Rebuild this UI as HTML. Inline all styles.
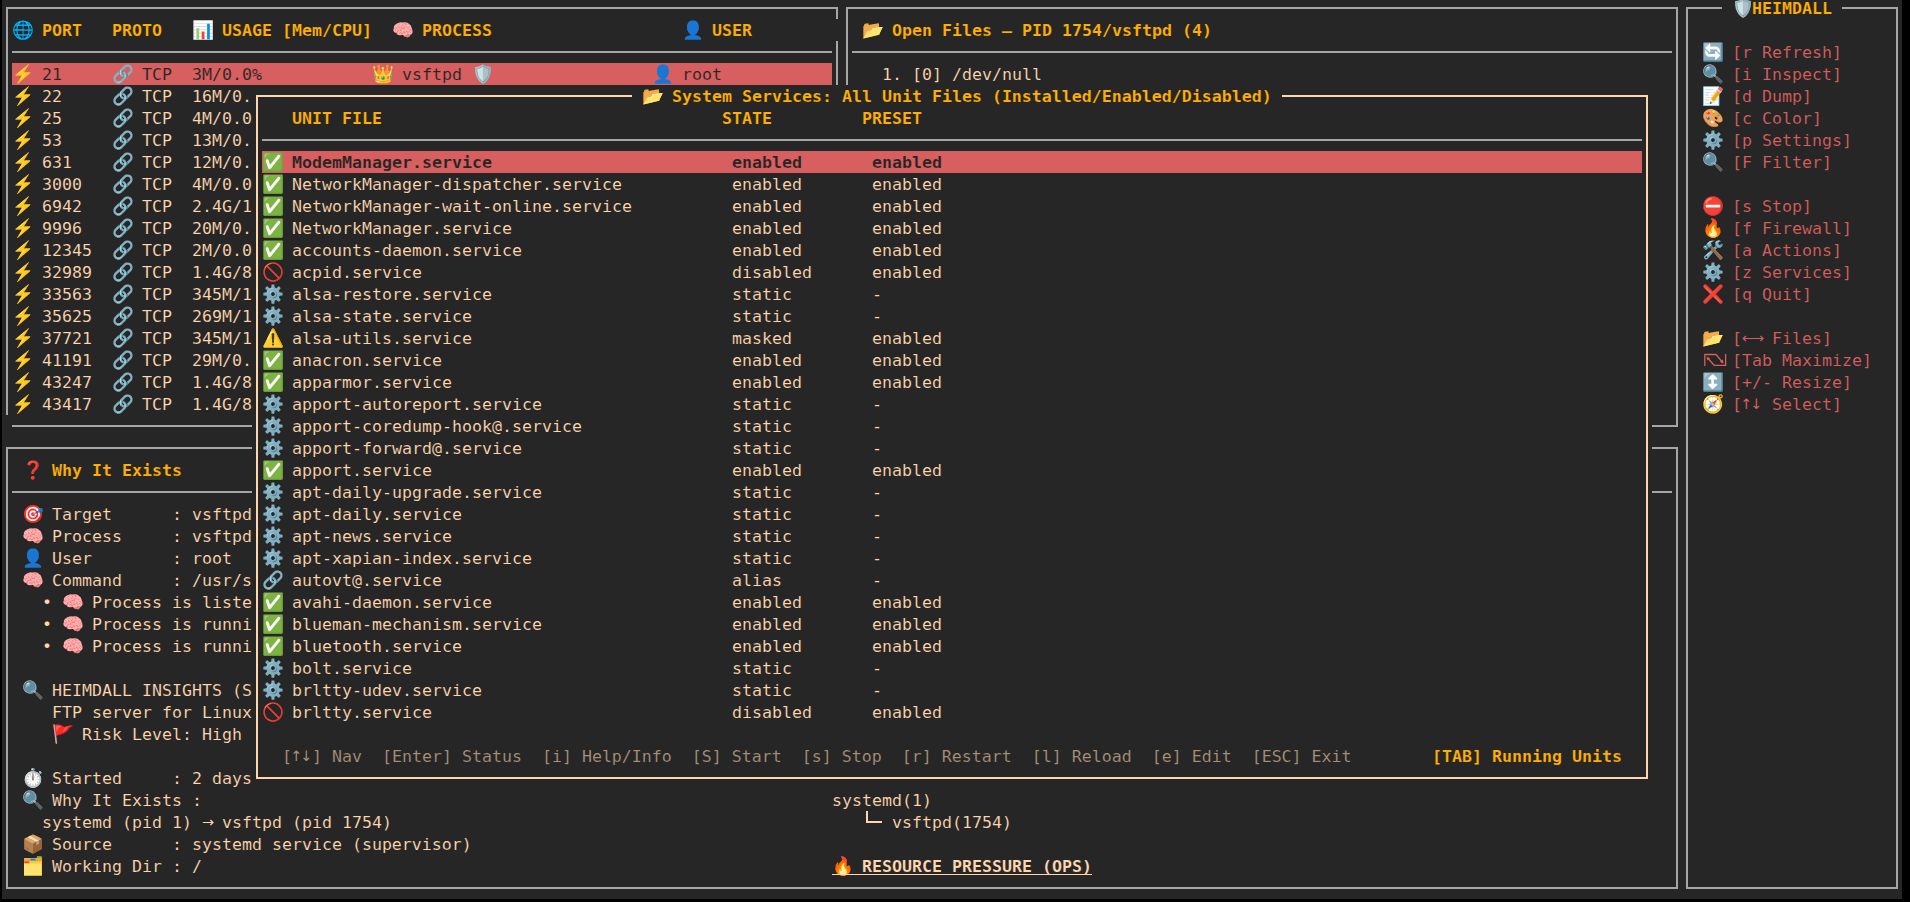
<!DOCTYPE html>
<html lang="en"><head><meta charset="utf-8"><title>HEIMDALL — System Services</title>
<style>
html,body{margin:0;padding:0;background:#000;}
body{width:1910px;height:902px;overflow:hidden;position:relative;}
#term{position:absolute;left:2px;top:0;width:1900px;height:899px;background:#262626;overflow:hidden;}
#g{position:absolute;left:-2px;top:0;width:1910px;height:902px;}
section{position:absolute;left:0;top:0;width:0;height:0;display:block;}
#g i{position:absolute;display:block;}
.t{position:absolute;white-space:pre;font-family:"DejaVu Sans Mono","Liberation Mono",monospace;font-size:16.6px;line-height:22px;height:22px;margin-top:1px;font-weight:400;font-style:normal;font-kerning:none;font-variant-ligatures:none;letter-spacing:0.006px;-webkit-text-stroke:0.12px #262626;}
.a{font-family:"DejaVu Sans","Liberation Sans",sans-serif;font-size:14.4px;letter-spacing:-2.067px;position:relative;top:-0.8px;-webkit-text-stroke-width:0;}
.v{left:-2px;}
.b{font-weight:700;}
.s{-webkit-text-stroke-color:#d75f5f;}
.ic{position:absolute;display:block;overflow:visible;}
</style></head>
<body><div id="term"><div id="g">
<section id="ports" aria-label="Listening ports">
<i style="left:6px;top:7px;width:832px;height:2px;background:#a6a6a6"></i>
<i style="left:6px;top:7px;width:2px;height:408px;background:#a6a6a6"></i>
<i style="left:836px;top:7px;width:2px;height:12px;background:#a6a6a6"></i>
<i style="left:836px;top:41px;width:2px;height:44px;background:#a6a6a6"></i>
<i style="left:12px;top:51px;width:820px;height:2px;background:#a6a6a6"></i>
<i style="left:12px;top:425px;width:240px;height:2px;background:#a6a6a6"></i>
<i style="left:12px;top:63px;width:820px;height:22px;background:#d75f5f"></i>
<svg class="ic" style="left:12px;top:19px" width="20" height="22" viewBox="0 0 20 22"><g transform="translate(0.05075 0.77075) scale(0.1615)"><path fill="#01b3f7" fill-rule="evenodd" d="M62 5l-1 1-10 1-11 4-10 6-8 7-8 11-4 9-3 15 0 10 3 14 5 11 13 16 10 7 13 5 10 1 1 1 12 0 1-1 10-1 16-7 14-13 4-6 6-14 2-8 1-14-1-1-1-11-6-15-4-6-11-11-11-6-9-3-11-1-1-1zM108 99l-9 8-2-1 5-8 5 0zM71 115l0-16 1-1 19 0 1 1-1 3-10 10-8 4zM43 99l1-1 20 0 1 1 0 16-2 1-9-5zM28 99l1-1 5 0 5 8-2 1zM120 68l1 1-1 7-4 11-2 2-7 0-1-4 2-5 1-11 1-1zM71 69l1-1 28 0 1 1 0 6-3 13-1 1-25 0-1-1zM34 69l1-1 29 0 1 1 0 19-1 1-25 0-3-6zM15 68l11 0 1 1 0 6 3 11-1 3-8 0-2-2-5-16zM107 39l7 0 2 2 4 10 1 5-1 4-10 0-1-1-1-11-2-6zM71 40l1-1 25 0 3 8 1 12-1 1-25 0-4-2zM37 40l1-1 26 0 1 1 0 18-1 1-29 0-1-1 0-7zM21 39l7 0 1 1-2 7-1 11-1 1-10 0-1-1 1-7 3-8zM98 23l2-1 8 7-1 1-5 0zM37 21l1 2-3 3-1 3-5 1-1-1zM71 14l2-1 6 3 13 13-1 1-19 0-1-1zM65 14l0 15-1 1-20 0-1-1 13-13 6-3z"/><path fill="#188aff" fill-rule="evenodd" d="M72 96l0 2 20 0 1-2zM42 96l2 2 20 0 0-2zM26 96l2 2 5 0 0-2zM121 92l-8 11-10 9-11 6-14 4-20 0-17-5-14-9-10-11 11 13 14 9 13 4 19 1 17-4 13-7 11-11zM110 67l0 1 10 0 0-1zM72 67l0 1 28 0 0-1zM35 67l0 1 29 0 0-1zM15 67l0 1 11 0 0-1zM72 37l0 2 24 0 0-1-7 0-1-1zM38 39l26 0 0-2-25 0zM21 39l7 0 1-2-7 0zM72 11l0 2 7 3 12 11-10-11zM64 11l-9 4-11 12 12-11 8-3z"/></g></svg>
<span class="t b" style="left:42px;top:19px;color:#ffaf00">PORT</span>
<span class="t b" style="left:112px;top:19px;color:#ffaf00">PROTO</span>
<svg class="ic" style="left:192px;top:19px" width="20" height="22" viewBox="0 0 20 22"><g transform="translate(0.05075 0.77075) scale(0.1615)"><path fill="#ffffff" fill-rule="evenodd" d="M9 4l0 120 119 0 0-120z"/><path fill="#b0bec5" fill-rule="evenodd" d="M77 101l0 2 17 0 0-2zM43 101l0 2 17 0 0-2zM77 81l0 2 17 0 0-2zM43 81l0 2 17 0 0-2zM43 62l0 2 51 0 0-2zM9 4l0 120 119 0 0-120zM13 7l1-1 111 0 1 1 0 15-1 1-16 0 0 2 16 0 1 1 0 16-1 1-15-1 0 3 15 0 1 1 0 15-1 1-15-1 0 4 3-1 12 0 1 1 0 15-1 1-15 0 0 3 3-1 12 0 1 1 0 16-1 1-15-1 0 3 15 0 1 1 0 15-1 1-46 0-1-1-3 1-13 0-1-1-3 1-14 0-1-1-29 1-1-1 0-15 1-1 13 0 0-2-13 0-1-1 0-16 1-1 13 0 0-2-13 0-1-1 0-15 1-1 13 0 0-2-13 0-1-1 0-15 1-1 80 0 0-2-80 0-1-1 0-16 1-1 81 0 0-2-81 0-1-1z"/><path fill="#0191ea" fill-rule="evenodd" d="M94 23l-1 1 0 97 18 0 0-97-1-1z"/><path fill="#9ccc65" fill-rule="evenodd" d="M26 53l0 67 2 1 14 0 1-1 0-16 1-1-1-3 0-16 1-1-1-3 0-15 1-1-1-11z"/><path fill="#f44336" fill-rule="evenodd" d="M60 72l0 48 17 0 0-48z"/><path fill="#ebeeed" fill-rule="evenodd" d="M77 102l0 2 17 0 0-2zM43 102l0 2 17 0 0-2zM77 80l0 2 17 0 0-2zM43 80l0 2 17 0 0-2zM59 72l0 2 3-1 14 0 0-2-15 0zM125 64l0 15-1 1-13 0 0 2 13 0 1 1 0 18-1 1-13 0 0 2 13 0 1 1 0 15 2 0 0-17-1-1 1-1 0-18-1-1 1-1 0-17zM25 64l0 15-1 1-12 0 0 2 12 0 1 1 0 18-1 1-12 0 0 2 12 0 1 1 0 15 2 0 0-17-1-1 1-1 0-18-1-1 1-1 0-17zM25 54l0 8 2 0 0-8zM12 44l0 2 82 0 0-2zM12 22l0 2 84 0 0-2zM125 6l0 15-1 1-15 0 0 2 15 0 1 1 0 18-1 1-13 0 0 2 13 0 1 1 0 15 2 0 0-17-1-1 1-1 0-18-1-1 1-1 0-17z"/><path fill="#d2e0e8" fill-rule="evenodd" d="M77 119l0 2 17 0 0-2zM43 119l0 2 17 0 0-2zM12 119l0 2 14 0 0-2zM43 61l0 4 51 0 0-4zM12 61l0 4 14 0 0-4zM95 22l0 2 14 0 1 1 0 37 1 1-1 1 0 56 1 1 15 0 0-2-13 0-1-1 0-52 1-1 13 0 0-4-13 0-1-1 0-35-2-1 0-2zM12 5l0 2 114 0 0-2z"/><path fill="#c4ced4" fill-rule="evenodd" d="M111 100l0 2 16 0 0-2zM77 100l0 2 17 0 0-2zM43 100l0 2 17 0 0-2zM12 100l0 2 15 0 0-2zM111 82l0 2 16 0 0-2zM77 82l0 2 17 0 0-2zM43 82l0 2 17 0 0-2zM12 82l0 2 14 0 0-2zM111 42l0 2 16 0 0-2zM12 42l0 2 82 0 0-2zM110 24l0 2 17 0 0-2zM12 24l0 2 82 0 0-2z"/><path fill="#f19b95" fill-rule="evenodd" d="M59 73l0 47 1 1 17 0 1-1 0-47-2 0 0 45-1 1-13 0-1-1 0-45z"/><path fill="#b2d58d" fill-rule="evenodd" d="M27 52l0 2 14 0 1 1 0 66 2 0 0-68-2-1z"/></g></svg>
<span class="t b" style="left:222px;top:19px;color:#ffaf00">USAGE [Mem/CPU]</span>
<svg class="ic" style="left:392px;top:19px" width="20" height="22" viewBox="0 0 20 22"><g transform="translate(0.05075 0.77075) scale(0.1615)"><path fill="#ffb1b1" fill-rule="evenodd" d="M13 39l-2 8 1 5-4 7 1 10 2 4 6 6 5 3 7 1 3 6 6 5 8 2 22-1 6 6 7 4 11 3 6 0 6-2 8-8 2-5 2-2 4-1 6-8 1-4-1-16-4-8 0-3-6-15-3-4-5-2-6-7-8-4-14-4-6 0-5 2-10 0-1-1-11 1-14 5-12 8z"/><path fill="#ed7170" fill-rule="evenodd" d="M73 98l0 2 4 3 10 4 4 0-7-3-6-5zM81 97l12 7 6 2 5 0-8-3-12-7zM100 93l2 2 10 2 2-3-5 1-4-2zM89 95l9 5 9 3 3-3-5 0-6-2-7-5 1-1zM117 79l-6-6-7 0-3 2-4 0-3-3 0-12-3-1 1 8-6 7-3 1-5-1-3-3-1-4-3-1-1 1 2 3-1 5-5 5-8 1-11-6 0 3 2 3-3 3-1 4 7-5 4 0 4 3 0 6-4 3 10 0-2-3 0-4 2-4 7-5 2 0 2 2 1 4 3 4 2 0-3-6 0-3 2-2 8-3 4 1 3 3-3 6 3 0 6-8 5-2 5 2 2 6 2 0zM121 48l-1 5-5 7-3 2-9-1 0 2 4 2 6-1 5 5 5 0 0-2-4 0-2-2 0-3 5-7zM24 38l-2 0-1 2 1 4 5 6 0 3-3 3-6 0-5-5-1-5-1 1 3 9 5 5 1 10 2-1-1-9 8-6 0-6-6-8zM35 37l0 2 3 2 3 6-2 7 3-1 2-5 7-1 0-2-7 0-7-8zM101 31l1 1 8 0 5 4-1-3-4-3-3-1zM110 41l-3-1 0 3-3 3-4 0-9-5-7 0-4 2-6 7-6 1-5-3-1-10 4-5 4 0 3 3-1 6 3-2 0-5-4-4-6-1-2-5-5-4 0 2 3 3 1 3 0 5-2 5-4 5 3 1 2 4 0 3-4 2-10 9-13-1 0 6-7 11-7 0-6-3 8 6 7 1 3 6 3 3 6 3-6-7-2-7 1-5 6-9 3-2 5 0 10 7 1-3-3-4 0-4 2-2 6-3 8 0 5 4 2 0 1-2-2-2 0-5 6-6 9 0 6 5 2 5 2-2-1-3 8-5zM72 21l0 2 6 1 5 6-1 4 3-2 10 1-1-2-6-1-3-3 0-4 5-3 8 1-4-2-8 0-4 3zM52 35l-1-3-7-6 0-5 3-4-5 3-1 3 1 2-2 2-7 1 0 2 4-1 9 1 4 5z"/><path fill="#b75656" fill-rule="evenodd" d="M69 96l3 3 1-2 5 1 6 5 7 3 1 2 10-1-9-2-13-8-10 0zM85 96l19 9 2-1 0-1-8-2-10-6zM93 93l6 4 6 2 6 0 1-1-10-2-3-3 1-1 5 0 4 2 5-1-4 0-6-3-6 0z"/></g></svg>
<span class="t b" style="left:422px;top:19px;color:#ffaf00">PROCESS</span>
<svg class="ic" style="left:682px;top:19px" width="20" height="22" viewBox="0 0 20 22"><g transform="translate(0.05075 0.77075) scale(0.1615)"><path fill="#1976d2" fill-rule="evenodd" d="M46 9l-8 8-5 10-2 9 0 24 2 7 5 7 3 7 8 8 10 5-1 1-16 2-9 3-9 5-6 7-1 11 101 0 0-8-4-7-5-4-13-6-20-4 10-5 7-7 10-18 1-5-1-4 1-1 0-18-5-16-10-11-9-4-20-1-8 2z"/></g></svg>
<span class="t b" style="left:712px;top:19px;color:#ffaf00">USER</span>
<svg class="ic" style="left:12px;top:63px" width="20" height="22" viewBox="0 0 20 22"><g transform="translate(0.05075 0.77075) scale(0.1615)"><path fill="#ffc927" fill-rule="evenodd" d="M103 3l-2 0-80 67 1 2 38 0 1 1-30 50 1 2 2 0 25-21 53-47 1-2-2-2-34 0-1 1-2-1 2-5 27-42z"/><path fill="#feb805" fill-rule="evenodd" d="M21 71l1 1 39 0 1-4-39 0zM113 55l-3-2-2 3-72 65-5 3 3 1 1-2 11-8 8-8 5-3 44-38zM103 3l-1 0-13 20-20 26-1 3 6 1 2-5 9-13 0-2 3-3 2-5 13-19z"/><path fill="#ffe363" fill-rule="evenodd" d="M71 68l-2 0-2 2-22 35 2 0 24-31 1-2zM79 24l-2 0-35 30-9 9 1 2 4 0 3-2 35-34z"/></g></svg>
<span class="t s" style="left:42px;top:63px;color:#262626">21</span>
<svg class="ic" style="left:112px;top:63px" width="20" height="22" viewBox="0 0 20 22"><g transform="translate(0.05075 0.77075) scale(0.1615)"><path fill="#84b0c1" fill-rule="evenodd" d="M114 9l-12-5-13 0-10 4-27 26-6 10-8 4-23 23-6 11-1 16 5 12 8 8 12 5 13 0 10-4 27-26 6-10 8-4 23-23 6-11 1-16-5-12zM46 62l7 13 7 6 8 3 1 2-20 20-7 3-9-1-8-7-3-7 0-5 3-7zM60 57l2-1 5 2 6 6 2 6-2 1-5-2-6-6zM102 19l8 7 3 7 0 5-3 7-21 20-7-13-7-6-8-3-1-2 20-20 7-3z"/><path fill="#a6e0ed" fill-rule="evenodd" d="M55 106l-3 3-6 3-16-1 0 2 2 2 6 2 8-1 8-5zM81 67l-3 1 0 9-2 4 2 3 3-1 3-5 0-7zM57 38l-2 0-4 4-3 8 1 12 1 3 4 4 1-1-1-17 3-9z"/><path fill="#347b8c" fill-rule="evenodd" d="M75 71l-1 0-1 4-4 5-3 2-3 0 7 3 4-6zM94 61l-5 5 1 2 0 10-2 5 6-2 3-5 0-10zM46 44l-4 4 0 8 3 4zM76 47l-10-5-5 7 0 7 4 1 1-5 5-5z"/></g></svg>
<span class="t s" style="left:142px;top:63px;color:#262626">TCP</span>
<span class="t s" style="left:192px;top:63px;color:#262626">3M/0.0%</span>
<svg class="ic" style="left:12px;top:85px" width="20" height="22" viewBox="0 0 20 22"><g transform="translate(0.05075 0.77075) scale(0.1615)"><path fill="#ffc927" fill-rule="evenodd" d="M103 3l-2 0-80 67 1 2 38 0 1 1-30 50 1 2 2 0 25-21 53-47 1-2-2-2-34 0-1 1-2-1 2-5 27-42z"/><path fill="#feb805" fill-rule="evenodd" d="M21 71l1 1 39 0 1-4-39 0zM113 55l-3-2-2 3-72 65-5 3 3 1 1-2 11-8 8-8 5-3 44-38zM103 3l-1 0-13 20-20 26-1 3 6 1 2-5 9-13 0-2 3-3 2-5 13-19z"/><path fill="#ffe363" fill-rule="evenodd" d="M71 68l-2 0-2 2-22 35 2 0 24-31 1-2zM79 24l-2 0-35 30-9 9 1 2 4 0 3-2 35-34z"/></g></svg>
<span class="t" style="left:42px;top:85px;color:#ffd7af">22</span>
<svg class="ic" style="left:112px;top:85px" width="20" height="22" viewBox="0 0 20 22"><g transform="translate(0.05075 0.77075) scale(0.1615)"><path fill="#84b0c1" fill-rule="evenodd" d="M114 9l-12-5-13 0-10 4-27 26-6 10-8 4-23 23-6 11-1 16 5 12 8 8 12 5 13 0 10-4 27-26 6-10 8-4 23-23 6-11 1-16-5-12zM46 62l7 13 7 6 8 3 1 2-20 20-7 3-9-1-8-7-3-7 0-5 3-7zM60 57l2-1 5 2 6 6 2 6-2 1-5-2-6-6zM102 19l8 7 3 7 0 5-3 7-21 20-7-13-7-6-8-3-1-2 20-20 7-3z"/><path fill="#a6e0ed" fill-rule="evenodd" d="M55 106l-3 3-6 3-16-1 0 2 2 2 6 2 8-1 8-5zM81 67l-3 1 0 9-2 4 2 3 3-1 3-5 0-7zM57 38l-2 0-4 4-3 8 1 12 1 3 4 4 1-1-1-17 3-9z"/><path fill="#347b8c" fill-rule="evenodd" d="M75 71l-1 0-1 4-4 5-3 2-3 0 7 3 4-6zM94 61l-5 5 1 2 0 10-2 5 6-2 3-5 0-10zM46 44l-4 4 0 8 3 4zM76 47l-10-5-5 7 0 7 4 1 1-5 5-5z"/></g></svg>
<span class="t" style="left:142px;top:85px;color:#ffd7af">TCP</span>
<span class="t" style="left:192px;top:85px;color:#ffd7af">16M/0.</span>
<svg class="ic" style="left:12px;top:107px" width="20" height="22" viewBox="0 0 20 22"><g transform="translate(0.05075 0.77075) scale(0.1615)"><path fill="#ffc927" fill-rule="evenodd" d="M103 3l-2 0-80 67 1 2 38 0 1 1-30 50 1 2 2 0 25-21 53-47 1-2-2-2-34 0-1 1-2-1 2-5 27-42z"/><path fill="#feb805" fill-rule="evenodd" d="M21 71l1 1 39 0 1-4-39 0zM113 55l-3-2-2 3-72 65-5 3 3 1 1-2 11-8 8-8 5-3 44-38zM103 3l-1 0-13 20-20 26-1 3 6 1 2-5 9-13 0-2 3-3 2-5 13-19z"/><path fill="#ffe363" fill-rule="evenodd" d="M71 68l-2 0-2 2-22 35 2 0 24-31 1-2zM79 24l-2 0-35 30-9 9 1 2 4 0 3-2 35-34z"/></g></svg>
<span class="t" style="left:42px;top:107px;color:#ffd7af">25</span>
<svg class="ic" style="left:112px;top:107px" width="20" height="22" viewBox="0 0 20 22"><g transform="translate(0.05075 0.77075) scale(0.1615)"><path fill="#84b0c1" fill-rule="evenodd" d="M114 9l-12-5-13 0-10 4-27 26-6 10-8 4-23 23-6 11-1 16 5 12 8 8 12 5 13 0 10-4 27-26 6-10 8-4 23-23 6-11 1-16-5-12zM46 62l7 13 7 6 8 3 1 2-20 20-7 3-9-1-8-7-3-7 0-5 3-7zM60 57l2-1 5 2 6 6 2 6-2 1-5-2-6-6zM102 19l8 7 3 7 0 5-3 7-21 20-7-13-7-6-8-3-1-2 20-20 7-3z"/><path fill="#a6e0ed" fill-rule="evenodd" d="M55 106l-3 3-6 3-16-1 0 2 2 2 6 2 8-1 8-5zM81 67l-3 1 0 9-2 4 2 3 3-1 3-5 0-7zM57 38l-2 0-4 4-3 8 1 12 1 3 4 4 1-1-1-17 3-9z"/><path fill="#347b8c" fill-rule="evenodd" d="M75 71l-1 0-1 4-4 5-3 2-3 0 7 3 4-6zM94 61l-5 5 1 2 0 10-2 5 6-2 3-5 0-10zM46 44l-4 4 0 8 3 4zM76 47l-10-5-5 7 0 7 4 1 1-5 5-5z"/></g></svg>
<span class="t" style="left:142px;top:107px;color:#ffd7af">TCP</span>
<span class="t" style="left:192px;top:107px;color:#ffd7af">4M/0.0</span>
<svg class="ic" style="left:12px;top:129px" width="20" height="22" viewBox="0 0 20 22"><g transform="translate(0.05075 0.77075) scale(0.1615)"><path fill="#ffc927" fill-rule="evenodd" d="M103 3l-2 0-80 67 1 2 38 0 1 1-30 50 1 2 2 0 25-21 53-47 1-2-2-2-34 0-1 1-2-1 2-5 27-42z"/><path fill="#feb805" fill-rule="evenodd" d="M21 71l1 1 39 0 1-4-39 0zM113 55l-3-2-2 3-72 65-5 3 3 1 1-2 11-8 8-8 5-3 44-38zM103 3l-1 0-13 20-20 26-1 3 6 1 2-5 9-13 0-2 3-3 2-5 13-19z"/><path fill="#ffe363" fill-rule="evenodd" d="M71 68l-2 0-2 2-22 35 2 0 24-31 1-2zM79 24l-2 0-35 30-9 9 1 2 4 0 3-2 35-34z"/></g></svg>
<span class="t" style="left:42px;top:129px;color:#ffd7af">53</span>
<svg class="ic" style="left:112px;top:129px" width="20" height="22" viewBox="0 0 20 22"><g transform="translate(0.05075 0.77075) scale(0.1615)"><path fill="#84b0c1" fill-rule="evenodd" d="M114 9l-12-5-13 0-10 4-27 26-6 10-8 4-23 23-6 11-1 16 5 12 8 8 12 5 13 0 10-4 27-26 6-10 8-4 23-23 6-11 1-16-5-12zM46 62l7 13 7 6 8 3 1 2-20 20-7 3-9-1-8-7-3-7 0-5 3-7zM60 57l2-1 5 2 6 6 2 6-2 1-5-2-6-6zM102 19l8 7 3 7 0 5-3 7-21 20-7-13-7-6-8-3-1-2 20-20 7-3z"/><path fill="#a6e0ed" fill-rule="evenodd" d="M55 106l-3 3-6 3-16-1 0 2 2 2 6 2 8-1 8-5zM81 67l-3 1 0 9-2 4 2 3 3-1 3-5 0-7zM57 38l-2 0-4 4-3 8 1 12 1 3 4 4 1-1-1-17 3-9z"/><path fill="#347b8c" fill-rule="evenodd" d="M75 71l-1 0-1 4-4 5-3 2-3 0 7 3 4-6zM94 61l-5 5 1 2 0 10-2 5 6-2 3-5 0-10zM46 44l-4 4 0 8 3 4zM76 47l-10-5-5 7 0 7 4 1 1-5 5-5z"/></g></svg>
<span class="t" style="left:142px;top:129px;color:#ffd7af">TCP</span>
<span class="t" style="left:192px;top:129px;color:#ffd7af">13M/0.</span>
<svg class="ic" style="left:12px;top:151px" width="20" height="22" viewBox="0 0 20 22"><g transform="translate(0.05075 0.77075) scale(0.1615)"><path fill="#ffc927" fill-rule="evenodd" d="M103 3l-2 0-80 67 1 2 38 0 1 1-30 50 1 2 2 0 25-21 53-47 1-2-2-2-34 0-1 1-2-1 2-5 27-42z"/><path fill="#feb805" fill-rule="evenodd" d="M21 71l1 1 39 0 1-4-39 0zM113 55l-3-2-2 3-72 65-5 3 3 1 1-2 11-8 8-8 5-3 44-38zM103 3l-1 0-13 20-20 26-1 3 6 1 2-5 9-13 0-2 3-3 2-5 13-19z"/><path fill="#ffe363" fill-rule="evenodd" d="M71 68l-2 0-2 2-22 35 2 0 24-31 1-2zM79 24l-2 0-35 30-9 9 1 2 4 0 3-2 35-34z"/></g></svg>
<span class="t" style="left:42px;top:151px;color:#ffd7af">631</span>
<svg class="ic" style="left:112px;top:151px" width="20" height="22" viewBox="0 0 20 22"><g transform="translate(0.05075 0.77075) scale(0.1615)"><path fill="#84b0c1" fill-rule="evenodd" d="M114 9l-12-5-13 0-10 4-27 26-6 10-8 4-23 23-6 11-1 16 5 12 8 8 12 5 13 0 10-4 27-26 6-10 8-4 23-23 6-11 1-16-5-12zM46 62l7 13 7 6 8 3 1 2-20 20-7 3-9-1-8-7-3-7 0-5 3-7zM60 57l2-1 5 2 6 6 2 6-2 1-5-2-6-6zM102 19l8 7 3 7 0 5-3 7-21 20-7-13-7-6-8-3-1-2 20-20 7-3z"/><path fill="#a6e0ed" fill-rule="evenodd" d="M55 106l-3 3-6 3-16-1 0 2 2 2 6 2 8-1 8-5zM81 67l-3 1 0 9-2 4 2 3 3-1 3-5 0-7zM57 38l-2 0-4 4-3 8 1 12 1 3 4 4 1-1-1-17 3-9z"/><path fill="#347b8c" fill-rule="evenodd" d="M75 71l-1 0-1 4-4 5-3 2-3 0 7 3 4-6zM94 61l-5 5 1 2 0 10-2 5 6-2 3-5 0-10zM46 44l-4 4 0 8 3 4zM76 47l-10-5-5 7 0 7 4 1 1-5 5-5z"/></g></svg>
<span class="t" style="left:142px;top:151px;color:#ffd7af">TCP</span>
<span class="t" style="left:192px;top:151px;color:#ffd7af">12M/0.</span>
<svg class="ic" style="left:12px;top:173px" width="20" height="22" viewBox="0 0 20 22"><g transform="translate(0.05075 0.77075) scale(0.1615)"><path fill="#ffc927" fill-rule="evenodd" d="M103 3l-2 0-80 67 1 2 38 0 1 1-30 50 1 2 2 0 25-21 53-47 1-2-2-2-34 0-1 1-2-1 2-5 27-42z"/><path fill="#feb805" fill-rule="evenodd" d="M21 71l1 1 39 0 1-4-39 0zM113 55l-3-2-2 3-72 65-5 3 3 1 1-2 11-8 8-8 5-3 44-38zM103 3l-1 0-13 20-20 26-1 3 6 1 2-5 9-13 0-2 3-3 2-5 13-19z"/><path fill="#ffe363" fill-rule="evenodd" d="M71 68l-2 0-2 2-22 35 2 0 24-31 1-2zM79 24l-2 0-35 30-9 9 1 2 4 0 3-2 35-34z"/></g></svg>
<span class="t" style="left:42px;top:173px;color:#ffd7af">3000</span>
<svg class="ic" style="left:112px;top:173px" width="20" height="22" viewBox="0 0 20 22"><g transform="translate(0.05075 0.77075) scale(0.1615)"><path fill="#84b0c1" fill-rule="evenodd" d="M114 9l-12-5-13 0-10 4-27 26-6 10-8 4-23 23-6 11-1 16 5 12 8 8 12 5 13 0 10-4 27-26 6-10 8-4 23-23 6-11 1-16-5-12zM46 62l7 13 7 6 8 3 1 2-20 20-7 3-9-1-8-7-3-7 0-5 3-7zM60 57l2-1 5 2 6 6 2 6-2 1-5-2-6-6zM102 19l8 7 3 7 0 5-3 7-21 20-7-13-7-6-8-3-1-2 20-20 7-3z"/><path fill="#a6e0ed" fill-rule="evenodd" d="M55 106l-3 3-6 3-16-1 0 2 2 2 6 2 8-1 8-5zM81 67l-3 1 0 9-2 4 2 3 3-1 3-5 0-7zM57 38l-2 0-4 4-3 8 1 12 1 3 4 4 1-1-1-17 3-9z"/><path fill="#347b8c" fill-rule="evenodd" d="M75 71l-1 0-1 4-4 5-3 2-3 0 7 3 4-6zM94 61l-5 5 1 2 0 10-2 5 6-2 3-5 0-10zM46 44l-4 4 0 8 3 4zM76 47l-10-5-5 7 0 7 4 1 1-5 5-5z"/></g></svg>
<span class="t" style="left:142px;top:173px;color:#ffd7af">TCP</span>
<span class="t" style="left:192px;top:173px;color:#ffd7af">4M/0.0</span>
<svg class="ic" style="left:12px;top:195px" width="20" height="22" viewBox="0 0 20 22"><g transform="translate(0.05075 0.77075) scale(0.1615)"><path fill="#ffc927" fill-rule="evenodd" d="M103 3l-2 0-80 67 1 2 38 0 1 1-30 50 1 2 2 0 25-21 53-47 1-2-2-2-34 0-1 1-2-1 2-5 27-42z"/><path fill="#feb805" fill-rule="evenodd" d="M21 71l1 1 39 0 1-4-39 0zM113 55l-3-2-2 3-72 65-5 3 3 1 1-2 11-8 8-8 5-3 44-38zM103 3l-1 0-13 20-20 26-1 3 6 1 2-5 9-13 0-2 3-3 2-5 13-19z"/><path fill="#ffe363" fill-rule="evenodd" d="M71 68l-2 0-2 2-22 35 2 0 24-31 1-2zM79 24l-2 0-35 30-9 9 1 2 4 0 3-2 35-34z"/></g></svg>
<span class="t" style="left:42px;top:195px;color:#ffd7af">6942</span>
<svg class="ic" style="left:112px;top:195px" width="20" height="22" viewBox="0 0 20 22"><g transform="translate(0.05075 0.77075) scale(0.1615)"><path fill="#84b0c1" fill-rule="evenodd" d="M114 9l-12-5-13 0-10 4-27 26-6 10-8 4-23 23-6 11-1 16 5 12 8 8 12 5 13 0 10-4 27-26 6-10 8-4 23-23 6-11 1-16-5-12zM46 62l7 13 7 6 8 3 1 2-20 20-7 3-9-1-8-7-3-7 0-5 3-7zM60 57l2-1 5 2 6 6 2 6-2 1-5-2-6-6zM102 19l8 7 3 7 0 5-3 7-21 20-7-13-7-6-8-3-1-2 20-20 7-3z"/><path fill="#a6e0ed" fill-rule="evenodd" d="M55 106l-3 3-6 3-16-1 0 2 2 2 6 2 8-1 8-5zM81 67l-3 1 0 9-2 4 2 3 3-1 3-5 0-7zM57 38l-2 0-4 4-3 8 1 12 1 3 4 4 1-1-1-17 3-9z"/><path fill="#347b8c" fill-rule="evenodd" d="M75 71l-1 0-1 4-4 5-3 2-3 0 7 3 4-6zM94 61l-5 5 1 2 0 10-2 5 6-2 3-5 0-10zM46 44l-4 4 0 8 3 4zM76 47l-10-5-5 7 0 7 4 1 1-5 5-5z"/></g></svg>
<span class="t" style="left:142px;top:195px;color:#ffd7af">TCP</span>
<span class="t" style="left:192px;top:195px;color:#ffd7af">2.4G/1</span>
<svg class="ic" style="left:12px;top:217px" width="20" height="22" viewBox="0 0 20 22"><g transform="translate(0.05075 0.77075) scale(0.1615)"><path fill="#ffc927" fill-rule="evenodd" d="M103 3l-2 0-80 67 1 2 38 0 1 1-30 50 1 2 2 0 25-21 53-47 1-2-2-2-34 0-1 1-2-1 2-5 27-42z"/><path fill="#feb805" fill-rule="evenodd" d="M21 71l1 1 39 0 1-4-39 0zM113 55l-3-2-2 3-72 65-5 3 3 1 1-2 11-8 8-8 5-3 44-38zM103 3l-1 0-13 20-20 26-1 3 6 1 2-5 9-13 0-2 3-3 2-5 13-19z"/><path fill="#ffe363" fill-rule="evenodd" d="M71 68l-2 0-2 2-22 35 2 0 24-31 1-2zM79 24l-2 0-35 30-9 9 1 2 4 0 3-2 35-34z"/></g></svg>
<span class="t" style="left:42px;top:217px;color:#ffd7af">9996</span>
<svg class="ic" style="left:112px;top:217px" width="20" height="22" viewBox="0 0 20 22"><g transform="translate(0.05075 0.77075) scale(0.1615)"><path fill="#84b0c1" fill-rule="evenodd" d="M114 9l-12-5-13 0-10 4-27 26-6 10-8 4-23 23-6 11-1 16 5 12 8 8 12 5 13 0 10-4 27-26 6-10 8-4 23-23 6-11 1-16-5-12zM46 62l7 13 7 6 8 3 1 2-20 20-7 3-9-1-8-7-3-7 0-5 3-7zM60 57l2-1 5 2 6 6 2 6-2 1-5-2-6-6zM102 19l8 7 3 7 0 5-3 7-21 20-7-13-7-6-8-3-1-2 20-20 7-3z"/><path fill="#a6e0ed" fill-rule="evenodd" d="M55 106l-3 3-6 3-16-1 0 2 2 2 6 2 8-1 8-5zM81 67l-3 1 0 9-2 4 2 3 3-1 3-5 0-7zM57 38l-2 0-4 4-3 8 1 12 1 3 4 4 1-1-1-17 3-9z"/><path fill="#347b8c" fill-rule="evenodd" d="M75 71l-1 0-1 4-4 5-3 2-3 0 7 3 4-6zM94 61l-5 5 1 2 0 10-2 5 6-2 3-5 0-10zM46 44l-4 4 0 8 3 4zM76 47l-10-5-5 7 0 7 4 1 1-5 5-5z"/></g></svg>
<span class="t" style="left:142px;top:217px;color:#ffd7af">TCP</span>
<span class="t" style="left:192px;top:217px;color:#ffd7af">20M/0.</span>
<svg class="ic" style="left:12px;top:239px" width="20" height="22" viewBox="0 0 20 22"><g transform="translate(0.05075 0.77075) scale(0.1615)"><path fill="#ffc927" fill-rule="evenodd" d="M103 3l-2 0-80 67 1 2 38 0 1 1-30 50 1 2 2 0 25-21 53-47 1-2-2-2-34 0-1 1-2-1 2-5 27-42z"/><path fill="#feb805" fill-rule="evenodd" d="M21 71l1 1 39 0 1-4-39 0zM113 55l-3-2-2 3-72 65-5 3 3 1 1-2 11-8 8-8 5-3 44-38zM103 3l-1 0-13 20-20 26-1 3 6 1 2-5 9-13 0-2 3-3 2-5 13-19z"/><path fill="#ffe363" fill-rule="evenodd" d="M71 68l-2 0-2 2-22 35 2 0 24-31 1-2zM79 24l-2 0-35 30-9 9 1 2 4 0 3-2 35-34z"/></g></svg>
<span class="t" style="left:42px;top:239px;color:#ffd7af">12345</span>
<svg class="ic" style="left:112px;top:239px" width="20" height="22" viewBox="0 0 20 22"><g transform="translate(0.05075 0.77075) scale(0.1615)"><path fill="#84b0c1" fill-rule="evenodd" d="M114 9l-12-5-13 0-10 4-27 26-6 10-8 4-23 23-6 11-1 16 5 12 8 8 12 5 13 0 10-4 27-26 6-10 8-4 23-23 6-11 1-16-5-12zM46 62l7 13 7 6 8 3 1 2-20 20-7 3-9-1-8-7-3-7 0-5 3-7zM60 57l2-1 5 2 6 6 2 6-2 1-5-2-6-6zM102 19l8 7 3 7 0 5-3 7-21 20-7-13-7-6-8-3-1-2 20-20 7-3z"/><path fill="#a6e0ed" fill-rule="evenodd" d="M55 106l-3 3-6 3-16-1 0 2 2 2 6 2 8-1 8-5zM81 67l-3 1 0 9-2 4 2 3 3-1 3-5 0-7zM57 38l-2 0-4 4-3 8 1 12 1 3 4 4 1-1-1-17 3-9z"/><path fill="#347b8c" fill-rule="evenodd" d="M75 71l-1 0-1 4-4 5-3 2-3 0 7 3 4-6zM94 61l-5 5 1 2 0 10-2 5 6-2 3-5 0-10zM46 44l-4 4 0 8 3 4zM76 47l-10-5-5 7 0 7 4 1 1-5 5-5z"/></g></svg>
<span class="t" style="left:142px;top:239px;color:#ffd7af">TCP</span>
<span class="t" style="left:192px;top:239px;color:#ffd7af">2M/0.0</span>
<svg class="ic" style="left:12px;top:261px" width="20" height="22" viewBox="0 0 20 22"><g transform="translate(0.05075 0.77075) scale(0.1615)"><path fill="#ffc927" fill-rule="evenodd" d="M103 3l-2 0-80 67 1 2 38 0 1 1-30 50 1 2 2 0 25-21 53-47 1-2-2-2-34 0-1 1-2-1 2-5 27-42z"/><path fill="#feb805" fill-rule="evenodd" d="M21 71l1 1 39 0 1-4-39 0zM113 55l-3-2-2 3-72 65-5 3 3 1 1-2 11-8 8-8 5-3 44-38zM103 3l-1 0-13 20-20 26-1 3 6 1 2-5 9-13 0-2 3-3 2-5 13-19z"/><path fill="#ffe363" fill-rule="evenodd" d="M71 68l-2 0-2 2-22 35 2 0 24-31 1-2zM79 24l-2 0-35 30-9 9 1 2 4 0 3-2 35-34z"/></g></svg>
<span class="t" style="left:42px;top:261px;color:#ffd7af">32989</span>
<svg class="ic" style="left:112px;top:261px" width="20" height="22" viewBox="0 0 20 22"><g transform="translate(0.05075 0.77075) scale(0.1615)"><path fill="#84b0c1" fill-rule="evenodd" d="M114 9l-12-5-13 0-10 4-27 26-6 10-8 4-23 23-6 11-1 16 5 12 8 8 12 5 13 0 10-4 27-26 6-10 8-4 23-23 6-11 1-16-5-12zM46 62l7 13 7 6 8 3 1 2-20 20-7 3-9-1-8-7-3-7 0-5 3-7zM60 57l2-1 5 2 6 6 2 6-2 1-5-2-6-6zM102 19l8 7 3 7 0 5-3 7-21 20-7-13-7-6-8-3-1-2 20-20 7-3z"/><path fill="#a6e0ed" fill-rule="evenodd" d="M55 106l-3 3-6 3-16-1 0 2 2 2 6 2 8-1 8-5zM81 67l-3 1 0 9-2 4 2 3 3-1 3-5 0-7zM57 38l-2 0-4 4-3 8 1 12 1 3 4 4 1-1-1-17 3-9z"/><path fill="#347b8c" fill-rule="evenodd" d="M75 71l-1 0-1 4-4 5-3 2-3 0 7 3 4-6zM94 61l-5 5 1 2 0 10-2 5 6-2 3-5 0-10zM46 44l-4 4 0 8 3 4zM76 47l-10-5-5 7 0 7 4 1 1-5 5-5z"/></g></svg>
<span class="t" style="left:142px;top:261px;color:#ffd7af">TCP</span>
<span class="t" style="left:192px;top:261px;color:#ffd7af">1.4G/8</span>
<svg class="ic" style="left:12px;top:283px" width="20" height="22" viewBox="0 0 20 22"><g transform="translate(0.05075 0.77075) scale(0.1615)"><path fill="#ffc927" fill-rule="evenodd" d="M103 3l-2 0-80 67 1 2 38 0 1 1-30 50 1 2 2 0 25-21 53-47 1-2-2-2-34 0-1 1-2-1 2-5 27-42z"/><path fill="#feb805" fill-rule="evenodd" d="M21 71l1 1 39 0 1-4-39 0zM113 55l-3-2-2 3-72 65-5 3 3 1 1-2 11-8 8-8 5-3 44-38zM103 3l-1 0-13 20-20 26-1 3 6 1 2-5 9-13 0-2 3-3 2-5 13-19z"/><path fill="#ffe363" fill-rule="evenodd" d="M71 68l-2 0-2 2-22 35 2 0 24-31 1-2zM79 24l-2 0-35 30-9 9 1 2 4 0 3-2 35-34z"/></g></svg>
<span class="t" style="left:42px;top:283px;color:#ffd7af">33563</span>
<svg class="ic" style="left:112px;top:283px" width="20" height="22" viewBox="0 0 20 22"><g transform="translate(0.05075 0.77075) scale(0.1615)"><path fill="#84b0c1" fill-rule="evenodd" d="M114 9l-12-5-13 0-10 4-27 26-6 10-8 4-23 23-6 11-1 16 5 12 8 8 12 5 13 0 10-4 27-26 6-10 8-4 23-23 6-11 1-16-5-12zM46 62l7 13 7 6 8 3 1 2-20 20-7 3-9-1-8-7-3-7 0-5 3-7zM60 57l2-1 5 2 6 6 2 6-2 1-5-2-6-6zM102 19l8 7 3 7 0 5-3 7-21 20-7-13-7-6-8-3-1-2 20-20 7-3z"/><path fill="#a6e0ed" fill-rule="evenodd" d="M55 106l-3 3-6 3-16-1 0 2 2 2 6 2 8-1 8-5zM81 67l-3 1 0 9-2 4 2 3 3-1 3-5 0-7zM57 38l-2 0-4 4-3 8 1 12 1 3 4 4 1-1-1-17 3-9z"/><path fill="#347b8c" fill-rule="evenodd" d="M75 71l-1 0-1 4-4 5-3 2-3 0 7 3 4-6zM94 61l-5 5 1 2 0 10-2 5 6-2 3-5 0-10zM46 44l-4 4 0 8 3 4zM76 47l-10-5-5 7 0 7 4 1 1-5 5-5z"/></g></svg>
<span class="t" style="left:142px;top:283px;color:#ffd7af">TCP</span>
<span class="t" style="left:192px;top:283px;color:#ffd7af">345M/1</span>
<svg class="ic" style="left:12px;top:305px" width="20" height="22" viewBox="0 0 20 22"><g transform="translate(0.05075 0.77075) scale(0.1615)"><path fill="#ffc927" fill-rule="evenodd" d="M103 3l-2 0-80 67 1 2 38 0 1 1-30 50 1 2 2 0 25-21 53-47 1-2-2-2-34 0-1 1-2-1 2-5 27-42z"/><path fill="#feb805" fill-rule="evenodd" d="M21 71l1 1 39 0 1-4-39 0zM113 55l-3-2-2 3-72 65-5 3 3 1 1-2 11-8 8-8 5-3 44-38zM103 3l-1 0-13 20-20 26-1 3 6 1 2-5 9-13 0-2 3-3 2-5 13-19z"/><path fill="#ffe363" fill-rule="evenodd" d="M71 68l-2 0-2 2-22 35 2 0 24-31 1-2zM79 24l-2 0-35 30-9 9 1 2 4 0 3-2 35-34z"/></g></svg>
<span class="t" style="left:42px;top:305px;color:#ffd7af">35625</span>
<svg class="ic" style="left:112px;top:305px" width="20" height="22" viewBox="0 0 20 22"><g transform="translate(0.05075 0.77075) scale(0.1615)"><path fill="#84b0c1" fill-rule="evenodd" d="M114 9l-12-5-13 0-10 4-27 26-6 10-8 4-23 23-6 11-1 16 5 12 8 8 12 5 13 0 10-4 27-26 6-10 8-4 23-23 6-11 1-16-5-12zM46 62l7 13 7 6 8 3 1 2-20 20-7 3-9-1-8-7-3-7 0-5 3-7zM60 57l2-1 5 2 6 6 2 6-2 1-5-2-6-6zM102 19l8 7 3 7 0 5-3 7-21 20-7-13-7-6-8-3-1-2 20-20 7-3z"/><path fill="#a6e0ed" fill-rule="evenodd" d="M55 106l-3 3-6 3-16-1 0 2 2 2 6 2 8-1 8-5zM81 67l-3 1 0 9-2 4 2 3 3-1 3-5 0-7zM57 38l-2 0-4 4-3 8 1 12 1 3 4 4 1-1-1-17 3-9z"/><path fill="#347b8c" fill-rule="evenodd" d="M75 71l-1 0-1 4-4 5-3 2-3 0 7 3 4-6zM94 61l-5 5 1 2 0 10-2 5 6-2 3-5 0-10zM46 44l-4 4 0 8 3 4zM76 47l-10-5-5 7 0 7 4 1 1-5 5-5z"/></g></svg>
<span class="t" style="left:142px;top:305px;color:#ffd7af">TCP</span>
<span class="t" style="left:192px;top:305px;color:#ffd7af">269M/1</span>
<svg class="ic" style="left:12px;top:327px" width="20" height="22" viewBox="0 0 20 22"><g transform="translate(0.05075 0.77075) scale(0.1615)"><path fill="#ffc927" fill-rule="evenodd" d="M103 3l-2 0-80 67 1 2 38 0 1 1-30 50 1 2 2 0 25-21 53-47 1-2-2-2-34 0-1 1-2-1 2-5 27-42z"/><path fill="#feb805" fill-rule="evenodd" d="M21 71l1 1 39 0 1-4-39 0zM113 55l-3-2-2 3-72 65-5 3 3 1 1-2 11-8 8-8 5-3 44-38zM103 3l-1 0-13 20-20 26-1 3 6 1 2-5 9-13 0-2 3-3 2-5 13-19z"/><path fill="#ffe363" fill-rule="evenodd" d="M71 68l-2 0-2 2-22 35 2 0 24-31 1-2zM79 24l-2 0-35 30-9 9 1 2 4 0 3-2 35-34z"/></g></svg>
<span class="t" style="left:42px;top:327px;color:#ffd7af">37721</span>
<svg class="ic" style="left:112px;top:327px" width="20" height="22" viewBox="0 0 20 22"><g transform="translate(0.05075 0.77075) scale(0.1615)"><path fill="#84b0c1" fill-rule="evenodd" d="M114 9l-12-5-13 0-10 4-27 26-6 10-8 4-23 23-6 11-1 16 5 12 8 8 12 5 13 0 10-4 27-26 6-10 8-4 23-23 6-11 1-16-5-12zM46 62l7 13 7 6 8 3 1 2-20 20-7 3-9-1-8-7-3-7 0-5 3-7zM60 57l2-1 5 2 6 6 2 6-2 1-5-2-6-6zM102 19l8 7 3 7 0 5-3 7-21 20-7-13-7-6-8-3-1-2 20-20 7-3z"/><path fill="#a6e0ed" fill-rule="evenodd" d="M55 106l-3 3-6 3-16-1 0 2 2 2 6 2 8-1 8-5zM81 67l-3 1 0 9-2 4 2 3 3-1 3-5 0-7zM57 38l-2 0-4 4-3 8 1 12 1 3 4 4 1-1-1-17 3-9z"/><path fill="#347b8c" fill-rule="evenodd" d="M75 71l-1 0-1 4-4 5-3 2-3 0 7 3 4-6zM94 61l-5 5 1 2 0 10-2 5 6-2 3-5 0-10zM46 44l-4 4 0 8 3 4zM76 47l-10-5-5 7 0 7 4 1 1-5 5-5z"/></g></svg>
<span class="t" style="left:142px;top:327px;color:#ffd7af">TCP</span>
<span class="t" style="left:192px;top:327px;color:#ffd7af">345M/1</span>
<svg class="ic" style="left:12px;top:349px" width="20" height="22" viewBox="0 0 20 22"><g transform="translate(0.05075 0.77075) scale(0.1615)"><path fill="#ffc927" fill-rule="evenodd" d="M103 3l-2 0-80 67 1 2 38 0 1 1-30 50 1 2 2 0 25-21 53-47 1-2-2-2-34 0-1 1-2-1 2-5 27-42z"/><path fill="#feb805" fill-rule="evenodd" d="M21 71l1 1 39 0 1-4-39 0zM113 55l-3-2-2 3-72 65-5 3 3 1 1-2 11-8 8-8 5-3 44-38zM103 3l-1 0-13 20-20 26-1 3 6 1 2-5 9-13 0-2 3-3 2-5 13-19z"/><path fill="#ffe363" fill-rule="evenodd" d="M71 68l-2 0-2 2-22 35 2 0 24-31 1-2zM79 24l-2 0-35 30-9 9 1 2 4 0 3-2 35-34z"/></g></svg>
<span class="t" style="left:42px;top:349px;color:#ffd7af">41191</span>
<svg class="ic" style="left:112px;top:349px" width="20" height="22" viewBox="0 0 20 22"><g transform="translate(0.05075 0.77075) scale(0.1615)"><path fill="#84b0c1" fill-rule="evenodd" d="M114 9l-12-5-13 0-10 4-27 26-6 10-8 4-23 23-6 11-1 16 5 12 8 8 12 5 13 0 10-4 27-26 6-10 8-4 23-23 6-11 1-16-5-12zM46 62l7 13 7 6 8 3 1 2-20 20-7 3-9-1-8-7-3-7 0-5 3-7zM60 57l2-1 5 2 6 6 2 6-2 1-5-2-6-6zM102 19l8 7 3 7 0 5-3 7-21 20-7-13-7-6-8-3-1-2 20-20 7-3z"/><path fill="#a6e0ed" fill-rule="evenodd" d="M55 106l-3 3-6 3-16-1 0 2 2 2 6 2 8-1 8-5zM81 67l-3 1 0 9-2 4 2 3 3-1 3-5 0-7zM57 38l-2 0-4 4-3 8 1 12 1 3 4 4 1-1-1-17 3-9z"/><path fill="#347b8c" fill-rule="evenodd" d="M75 71l-1 0-1 4-4 5-3 2-3 0 7 3 4-6zM94 61l-5 5 1 2 0 10-2 5 6-2 3-5 0-10zM46 44l-4 4 0 8 3 4zM76 47l-10-5-5 7 0 7 4 1 1-5 5-5z"/></g></svg>
<span class="t" style="left:142px;top:349px;color:#ffd7af">TCP</span>
<span class="t" style="left:192px;top:349px;color:#ffd7af">29M/0.</span>
<svg class="ic" style="left:12px;top:371px" width="20" height="22" viewBox="0 0 20 22"><g transform="translate(0.05075 0.77075) scale(0.1615)"><path fill="#ffc927" fill-rule="evenodd" d="M103 3l-2 0-80 67 1 2 38 0 1 1-30 50 1 2 2 0 25-21 53-47 1-2-2-2-34 0-1 1-2-1 2-5 27-42z"/><path fill="#feb805" fill-rule="evenodd" d="M21 71l1 1 39 0 1-4-39 0zM113 55l-3-2-2 3-72 65-5 3 3 1 1-2 11-8 8-8 5-3 44-38zM103 3l-1 0-13 20-20 26-1 3 6 1 2-5 9-13 0-2 3-3 2-5 13-19z"/><path fill="#ffe363" fill-rule="evenodd" d="M71 68l-2 0-2 2-22 35 2 0 24-31 1-2zM79 24l-2 0-35 30-9 9 1 2 4 0 3-2 35-34z"/></g></svg>
<span class="t" style="left:42px;top:371px;color:#ffd7af">43247</span>
<svg class="ic" style="left:112px;top:371px" width="20" height="22" viewBox="0 0 20 22"><g transform="translate(0.05075 0.77075) scale(0.1615)"><path fill="#84b0c1" fill-rule="evenodd" d="M114 9l-12-5-13 0-10 4-27 26-6 10-8 4-23 23-6 11-1 16 5 12 8 8 12 5 13 0 10-4 27-26 6-10 8-4 23-23 6-11 1-16-5-12zM46 62l7 13 7 6 8 3 1 2-20 20-7 3-9-1-8-7-3-7 0-5 3-7zM60 57l2-1 5 2 6 6 2 6-2 1-5-2-6-6zM102 19l8 7 3 7 0 5-3 7-21 20-7-13-7-6-8-3-1-2 20-20 7-3z"/><path fill="#a6e0ed" fill-rule="evenodd" d="M55 106l-3 3-6 3-16-1 0 2 2 2 6 2 8-1 8-5zM81 67l-3 1 0 9-2 4 2 3 3-1 3-5 0-7zM57 38l-2 0-4 4-3 8 1 12 1 3 4 4 1-1-1-17 3-9z"/><path fill="#347b8c" fill-rule="evenodd" d="M75 71l-1 0-1 4-4 5-3 2-3 0 7 3 4-6zM94 61l-5 5 1 2 0 10-2 5 6-2 3-5 0-10zM46 44l-4 4 0 8 3 4zM76 47l-10-5-5 7 0 7 4 1 1-5 5-5z"/></g></svg>
<span class="t" style="left:142px;top:371px;color:#ffd7af">TCP</span>
<span class="t" style="left:192px;top:371px;color:#ffd7af">1.4G/8</span>
<svg class="ic" style="left:12px;top:393px" width="20" height="22" viewBox="0 0 20 22"><g transform="translate(0.05075 0.77075) scale(0.1615)"><path fill="#ffc927" fill-rule="evenodd" d="M103 3l-2 0-80 67 1 2 38 0 1 1-30 50 1 2 2 0 25-21 53-47 1-2-2-2-34 0-1 1-2-1 2-5 27-42z"/><path fill="#feb805" fill-rule="evenodd" d="M21 71l1 1 39 0 1-4-39 0zM113 55l-3-2-2 3-72 65-5 3 3 1 1-2 11-8 8-8 5-3 44-38zM103 3l-1 0-13 20-20 26-1 3 6 1 2-5 9-13 0-2 3-3 2-5 13-19z"/><path fill="#ffe363" fill-rule="evenodd" d="M71 68l-2 0-2 2-22 35 2 0 24-31 1-2zM79 24l-2 0-35 30-9 9 1 2 4 0 3-2 35-34z"/></g></svg>
<span class="t" style="left:42px;top:393px;color:#ffd7af">43417</span>
<svg class="ic" style="left:112px;top:393px" width="20" height="22" viewBox="0 0 20 22"><g transform="translate(0.05075 0.77075) scale(0.1615)"><path fill="#84b0c1" fill-rule="evenodd" d="M114 9l-12-5-13 0-10 4-27 26-6 10-8 4-23 23-6 11-1 16 5 12 8 8 12 5 13 0 10-4 27-26 6-10 8-4 23-23 6-11 1-16-5-12zM46 62l7 13 7 6 8 3 1 2-20 20-7 3-9-1-8-7-3-7 0-5 3-7zM60 57l2-1 5 2 6 6 2 6-2 1-5-2-6-6zM102 19l8 7 3 7 0 5-3 7-21 20-7-13-7-6-8-3-1-2 20-20 7-3z"/><path fill="#a6e0ed" fill-rule="evenodd" d="M55 106l-3 3-6 3-16-1 0 2 2 2 6 2 8-1 8-5zM81 67l-3 1 0 9-2 4 2 3 3-1 3-5 0-7zM57 38l-2 0-4 4-3 8 1 12 1 3 4 4 1-1-1-17 3-9z"/><path fill="#347b8c" fill-rule="evenodd" d="M75 71l-1 0-1 4-4 5-3 2-3 0 7 3 4-6zM94 61l-5 5 1 2 0 10-2 5 6-2 3-5 0-10zM46 44l-4 4 0 8 3 4zM76 47l-10-5-5 7 0 7 4 1 1-5 5-5z"/></g></svg>
<span class="t" style="left:142px;top:393px;color:#ffd7af">TCP</span>
<span class="t" style="left:192px;top:393px;color:#ffd7af">1.4G/8</span>
<svg class="ic" style="left:372px;top:63px" width="20" height="22" viewBox="0 0 20 22"><g transform="translate(0.05075 0.77075) scale(0.1615)"><path fill="#ffc928" fill-rule="evenodd" d="M8 19l-1 8 5 5 3 23 2 7 0 6-3 3-1 7 2 5 6 5 1 5-1 18 2 2 13 5 16 2 1 1 29 0 1-1 7 0 18-5 6-4 1-2 0-9-2-2 1-10 6-5 2-7-1-5-3-3 0-6 1-1 4-29 4-4 1-4-3-7-5 0-4 5 0 6 2 3-5 18-2 2-7-4-5-10-1-15 4-5 0-4-4-5-6 0-4 4 0 5 4 5-2 10-5 10-8 7-2 0-2-2-2-10 5-6 0-4-5-6-7 0-5 6 0 4 5 6-2 11-2 1-8-6-5-9-3-12 4-4 0-6-4-4-5 0-4 3-1 5 5 7-1 1 0 10-2 7-3 5-7 5-3-1-6-18 3-6-1-6-3-3-6 0z"/><path fill="#f19634" fill-rule="evenodd" d="M21 99l0 3 5 3 13 4 11 1 1 1 33 0 16-3 15-6-2-5-2 0-5 3-17 5-15 1-1 1-11 0-1-1-9 0-14-3-14-6-2 0zM33 87l1 4 4 3 4 0 3-2 0-3-2 0-2 3-2 0-4-5zM92 85l0 5 2 0 0-5zM77 85l0 5 2 0 0-5zM42 80l1 6 2 0-1-6zM95 78l-2 5 2 0 4-4 4 5-1 6 2 0 1-7-2-4-4-2zM40 77l-4 1 0 2-3 1 0 3 2 0 0-3 5-2zM114 70l-2 0-1 5 2 0zM98 8l-6 0-4 4 0 5 4 5-2 10-5 10-8 7-3-1 0 4 5 11 7 6 8 0 7-3 8-8 3-6 0-2-2 1-6-4-5-10-1-15 4-5 0-4zM39 8l-4 3-1 3 1 4 4 5-1 1-1 14-4 8-3 3-6 2 0 2 9 12 8 4 7 0 4-2 5-5 3-6 2-8-1 1-3-1-8-8-3-6-3-12 4-4 0-6-4-4z"/><path fill="#27a799" fill-rule="evenodd" d="M64 76l-4 3-2 4 0 10 5 6 8 1 6-5 1-12-4-6zM75 87l1 1-1 4-5 5-4 0-1-2zM67 79l1 2-6 4-1-2 4-4zM118 67l-3 0-3 5-1 4 0 9 1 2 5-1 4-5 1-6-1-4zM118 71l1 2-4 3-1-1 1-2zM17 67l-3 4-1 7 2 5 6 5 3-3 0-8-2-7zM18 71l1 2-3 3-1-2z"/><path fill="#fff49a" fill-rule="evenodd" d="M26 106l0 4 6 4 4 1 10 0 1-1-1-4-11-2-4-2zM118 44l-4 1-1 5-5 9-7 7-5 2 1 4 4 0 4-2 5-5 5-9zM18 44l0 5 6 14 8 8 7 1 0-4-3-1-6-5-5-7-4-11zM70 22l-7 0-2 2-1 6 3 0 3-3 4-1zM125 18l-5-1-3 3 0 5 3 0 5-5zM11 17l0 4 5 4 2 0 1-1-1-5-3-2z"/><path fill="#f54a3a" fill-rule="evenodd" d="M96 78l-3 4 0 10 1 1 7 0 3-4 0-7-3-4zM37 78l-3 2-1 8 4 5 6 0 2-3-1-9-2-3z"/><path fill="#ffde5d" fill-rule="evenodd" d="M27 105l0 2 18 5-1 2-6 0-4-1-6-4-2 0 1 3 11 4 9-1 0-5zM117 43l-3 1-4 12-5 5 0 2-8 4-1 5 2 0 1-3 1 3 4-1 0-2-3-1 3-2 1-3 3-1 1 2 3-1 6-14zM18 43l-1 1 1 7 6 13 2 2 2 0 1 3 3 1 1 2 5 1 2-2 0-3-6-2 0 2 2 1-3 1-2-3-3-1 1-2 3 1 0-2-3-1-1 2-3-3 3-1 0-2-2-1-4-11-2-3zM70 21l-5 0 0 2 4 1-5 2-1 2-1-3-2 0 1 6 2 0 2-3 3-1 1-2 2 0zM125 17l-2 0-1 3-1-3-1 0-3 3-1 5 3 1 1-2 4-2zM10 18l0 2 2 2 2 0 2 4 3-1 0-4-2 0-1 2-2-1 2-5-2 0-1 3-1-2z"/><path fill="#63e9ac" fill-rule="evenodd" d="M69 78l-2-1-4 1-3 3 0 5 3 1 6-4zM20 70l-4 0-3 4 1 4 3 0 4-4zM119 69l-3 0-3 4 1 5 3 0 3-3 0-5z"/><path fill="#017a6c" fill-rule="evenodd" d="M77 85l-3 0-6 6-3 1-2 2 0 3 1 1 8 0 4-4z"/><path fill="#ffa49f" fill-rule="evenodd" d="M99 79l-2 0-2 2-1 6 4 0 2-2 0-5zM40 79l-3 0-2 2 0 5 3 0 2-2z"/><path fill="#8bb765" fill-rule="evenodd" d="M58 92l1 4 3 3 4 1 0-2-6-6zM78 91l-2 0 0 3-6 4 0 2 2 0 4-3 0-2 2-1zM24 84l-2 0-2 3 3 1zM63 76l0 2 3-1 7 1 0-2-3-1zM115 69l-2 0-2 8 2 0zM17 67l0 2 4 3 1 6 2 0-2-9-2-2z"/></g></svg>
<span class="t s" style="left:402px;top:63px;color:#262626">vsftpd</span>
<svg class="ic" style="left:472px;top:63px" width="20" height="22" viewBox="0 0 20 22"><g transform="translate(0.05075 0.77075) scale(0.1615)"><path fill="#b0bec5" fill-rule="evenodd" d="M67 4l-15 9-17 5-16 2 0 27 5 24 10 22 7 10 13 13 12 7 3 0 11-6 10-9 9-12 6-11 6-17 3-13 1-13 1-1 0-21-24-4-9-3-14-9z"/><path fill="#cae3e6" fill-rule="evenodd" d="M67 19l-12 7-10 3-12 1-1 1 3 31 5 16 4 8 8 11 13 10 2 0z"/><path fill="#83aebe" fill-rule="evenodd" d="M68 4l0 11 4 3 16 7 9 2 8 0 2 2-1 24-7 26-11 18-9 9-11 6 0 2 2 2 0 3-1 1-2-1 1 4 12-6 10-9 9-12 6-11 6-17 3-13 1-14 1-1 0-20-21-3-12-4zM76 110l4-1 2 4-2 2-2 0-2-2zM86 101l2-2 2 0 2 4-1 1-1-1 1 1-3 1-2-2zM94 89l3-2 3 5-1 1-4-1zM100 77l3-2 3 4-2 2-2 0-2-2zM105 62l3-1 2 2-1 1 1 2-3 1-2-2zM107 49l2-2 2 0 2 4-3 2zM109 35l3-2 3 4-2 2-2 0-2-2zM111 21l3 2-1 4-5-3zM98 19l3 4-1 2-5-2zM83 17l3-1 2 2-1 1 1 2-3 1-2-2zM71 12l4-1 2 4-3 2-1-1 1-1-2 0z"/><path fill="#3a7d8d" fill-rule="evenodd" d="M67 16l-7 5-13 5-10 2-7 0-1 1 0 9 1 1 0 11 3 16 4 12 5 10 12 15 10 7 5 1 10-6 8-8 11-18 7-26 1-24-1-1-8 0-9-2-11-4zM67 17l14 8 10 3 12 1 1 1-1 25-6 22-9 16-12 12-7 4-3 0-7-4-12-12-4-6-8-19-3-15 0-7-1-1 0-15 1-1 15-2 9-3z"/></g></svg>
<svg class="ic" style="left:652px;top:63px" width="20" height="22" viewBox="0 0 20 22"><g transform="translate(0.05075 0.77075) scale(0.1615)"><path fill="#1976d2" fill-rule="evenodd" d="M46 9l-8 8-5 10-2 9 0 24 2 7 5 7 3 7 8 8 10 5-1 1-16 2-9 3-9 5-6 7-1 11 101 0 0-8-4-7-5-4-13-6-20-4 10-5 7-7 10-18 1-5-1-4 1-1 0-18-5-16-10-11-9-4-20-1-8 2z"/></g></svg>
<span class="t s" style="left:682px;top:63px;color:#262626">root</span>
</section>
<section id="files" aria-label="Open files">
<i style="left:846px;top:7px;width:832px;height:2px;background:#a6a6a6"></i>
<i style="left:846px;top:7px;width:2px;height:78px;background:#a6a6a6"></i>
<i style="left:1676px;top:7px;width:2px;height:420px;background:#a6a6a6"></i>
<i style="left:852px;top:51px;width:820px;height:2px;background:#a6a6a6"></i>
<i style="left:1652px;top:425px;width:26px;height:2px;background:#a6a6a6"></i>
<svg class="ic" style="left:862px;top:19px" width="20" height="22" viewBox="0 0 20 22"><g transform="translate(0.05075 0.77075) scale(0.1615)"><path fill="#f3ab47" fill-rule="evenodd" d="M14 27l-1 9-2 2-2 0-1 2 0 76 97-23 3-4 0-2 19-40 0-2-2-1-15 3-5-1 0-22-2-2-56 9-1 1-3 0-3-3 0-6-1-1-22 3z"/><path fill="#ffe36c" fill-rule="evenodd" d="M127 45l-4-1-4 3-2-2-4 3-2-2-4 3-3-3 0 2-3 2-34 5-2 2-2 7-4 6-20 4-5-2-4 4-22 40 97-23 3-4 0-2 18-37z"/><path fill="#fff9c3" fill-rule="evenodd" d="M125 44l-15 3-5-1-4 2-34 5-4 3-2 8-3 4-23 4 0 2 8 0 1-1 16-2 4-6 1-6 5-4 53-8 2-1z"/><path fill="#fff1ae" fill-rule="evenodd" d="M46 70l-2 0-1 2-5-1-1 2-2 0 0 2 3 0 1-2 5 1 2-2zM63 66l-4 0-1 2-2 0-2 2 0 2 2 0 3-4 4 0zM124 45l-5 0-13 3-5-1-1 2-5-1-1 2-5-1-1 2-5-1-1 2-5-1-1 2-5-1-1 2-4-1-2 1 0 3-2 1 1 4 2 0 1-6 1-1 3 1 1-2 5 1 1-2 5 1 1-2 5 1 1-2 5 1 1-2 5 1 1-2 5 1 1-2 5 1 1-2 5 1 1-2 5 1z"/><path fill="#f9c964" fill-rule="evenodd" d="M26 86l-2 0-2 6-2 1-2 6-2 1-2 6-2 1-2 4 0 2 2 0 2-6 2-1 2-6 2-1 2-6 2-1 2-4zM35 72l-2 0-2 2 0 2 2 0 2-2zM63 60l-2 0-1 5 2 0z"/><path fill="#ffef99" fill-rule="evenodd" d="M65 61l-2 0-1 5 2 0z"/><path fill="#ffea86" fill-rule="evenodd" d="M62 68l-6 2 0 2 5-1zM68 55l-3 1-1 4 2 0z"/><path fill="#fce097" fill-rule="evenodd" d="M63 61l-2 0-1 5-5 2 0 2 5-1 0-2 2-1z"/></g></svg>
<span class="t b" style="left:892px;top:19px;color:#ffaf00">Open Files — PID 1754/vsftpd (4)</span>
<span class="t" style="left:882px;top:63px;color:#ffd7af">1. [0] /dev/null</span>
</section>
<section id="why" aria-label="Why it exists">
<i style="left:6px;top:447px;width:246px;height:2px;background:#a6a6a6"></i>
<i style="left:6px;top:447px;width:2px;height:442px;background:#a6a6a6"></i>
<i style="left:6px;top:887px;width:1672px;height:2px;background:#a6a6a6"></i>
<i style="left:1652px;top:447px;width:26px;height:2px;background:#a6a6a6"></i>
<i style="left:1676px;top:447px;width:2px;height:442px;background:#a6a6a6"></i>
<i style="left:12px;top:491px;width:240px;height:2px;background:#a6a6a6"></i>
<i style="left:1652px;top:491px;width:20px;height:2px;background:#a6a6a6"></i>
<svg class="ic" style="left:22px;top:459px" width="20" height="22" viewBox="0 0 20 22"><g transform="translate(0.05075 0.77075) scale(0.1615)"><path fill="#f44336" fill-rule="evenodd" d="M63 100l-3 1-4 4-2 8 2 5 4 4 9 1 3-1 4-4 2-8-2-5-4-4zM60 4l-10 3-9 6-6 9-2 9 2 3 15 0 2-2 2-6 8-6 11 0 3 1 5 5 2 5-1 11-6 9-13 13-6 13 0 9 3 2 11 0 3-2 1-8 3-6 16-16 4-6 3-7 1-13-2-8-3-6-9-8-12-4z"/><path fill="#ce3433" fill-rule="evenodd" d="M63 100l-3 1-4 4 5-4 9 1 5 6 0 7-7 7-7 0-5-4 4 4 9 1 3-1 4-4 2-8-2-5-4-4zM62 20l-7 1-4 2-3 3-2 6-2 2 6 0 2-2 2-6zM76 4l-8 0 8 1 9 5 5 5 5 10 1 13-3 10-5 8-16 16-3 6-1 8-2 2 5 0 3-2 1-8 3-6 16-16 6-10 2-8-1-13-4-9-9-8z"/><path fill="#f6685c" fill-rule="evenodd" d="M67 105l-6 1-3 3 0 3 5-5zM65 10l-3-2-4 0-11 4-7 8-1 5 2 2 2-1 9-10 11-4z"/></g></svg>
<span class="t b" style="left:52px;top:459px;color:#ffaf00">Why It Exists</span>
<svg class="ic" style="left:22px;top:503px" width="20" height="22" viewBox="0 0 20 22"><g transform="translate(0.05075 0.77075) scale(0.1615)"><path fill="#ff2a23" fill-rule="evenodd" d="M62 7l-1 1-10 1-13 6-14 12-6 9-4 10-2 9 0 15 4 15 4 8 11 13 15 9 10 3 12 1 1-1 9 0 11-3 13-7 11-11 6-11 3-10 0-5 1-1 0-13-1-3 5-3 3-6 0-3-4-3 5-5-1-1-5 1-1-1 1-5-3-2-7 0-4 2-10-10-13-7-11-3z"/><path fill="#fffdfe" fill-rule="evenodd" d="M90 60l-7 3-3 0-1 6 6 4 4 0 1-2zM100 51l-1 1 1 18-3 9 7 3 3 0 3-9 0-19-6-3zM57 43l-9 8-2 4-1 13 3 9 6 6 8 3 12 0 5-2-1-4-4-5-7 1-7-3-4-6 0-6 2-4 7-5 6 0 4 3 4 1 7-4 0-3-4-4-7-3-10-1zM58 20l-7 2-11 6-10 11-3 6-3 11 1 21 6 12 9 9 6 4 11 4 20 0 13-5 0-3-4-6-11 4-14 0-9-3-6-4-7-8-4-9-1-5 1-12 5-10 9-9 11-5 8-1 12 3 8 5 8 10 2 0 2-2 3-10-9-9-9-5-13-3z"/><path fill="#cb1b37" fill-rule="evenodd" d="M117 86l-8-4-4 0-5 8-6 6-4 2 0 4 6 9 6-3 11-11 5-9zM96 76l-6-3-3 0-1 3-7 6 0 3 5 7 4-1 7-7 2-4zM67 66l0 2 5 7 4-1 3-3 0-4-4-2zM113 54l0 2 8 0 0-2zM98 53l-5 2-1 3 5-2zM96 47l-6 2 0 2 6-2z"/><path fill="#026caa" fill-rule="evenodd" d="M131 34l-1-1-5 1-1-1 1-5-11 0-4 2-5 6-2 4 0 4 3 0 2-2 12-5 2 2-20 11-3-3-4 0-9 4-2 2 1 6 6 0 10-7 9 3 12 0 7-7 1-6-4-3z"/><path fill="#c9c9ca" fill-rule="evenodd" d="M105 80l-4-2-5 0-3 6-8 7 0 4 4 5 2 0 11-10 4-7zM88 72l-7-4-2 0-6 6 0 3 4 6 4 0 6-6zM89 60l-9 2 0 2 5 0 4-2zM105 52l0 2 5 1 0-2zM87 50l-8 3-1 3 2 0 7-4zM103 37l-2 0-3 10 2 0z"/><path fill="#2086f7" fill-rule="evenodd" d="M125 28l-3-2-7 0-4 2-1-1-3 2-7 11-2 10 2 2 2 0 22-12-1-4-5 0-11 5-2-1 7-9 4-2 9 0z"/><path fill="#ffc5c4" fill-rule="evenodd" d="M62 105l0 2 10 0 0-2zM50 102l0 2 8 2 0-2zM85 92l-10 3 0 2 10-3zM78 83l-5 1 0 2 5-1zM38 81l2 5 4 4 2 0 0-2-6-5 0-2zM27 81l0 2 3 3 0 2 2 1 0 2 6 6 2 0 1 2 5 2 0-2-5-2-9-9-3-7zM65 75l0 2 6 0 0-2zM34 72l1 5 2 0-1-5zM45 67l1 6 2 0-1-6zM89 61l0 5 2 0 0-5zM109 58l0 10 2 0 0-10zM61 53l-2 0-2 2 0 2 2 0 2-2zM71 51l0 2 4 1 2 3 2 0-1-3zM28 47l-2 0-1 5 2 0zM54 46l-2 0-3 3-3 7 2 0 1-4 5-4zM41 43l-2 0-3 7 2 0zM74 42l0 2 5 1 0-2zM88 37l0 2 4 4 2 0 0-2-4-4zM54 32l-7 3 0 2 7-3zM74 30l0 2 10 3 0-2zM63 29l0 2 7 0 0-2zM55 21l-11 4-1 2-2 0 0 2 14-6zM78 20l0 2 12 4 9 9 2 0 0-2-5-5-5-2-1-2z"/><path fill="#f96562" fill-rule="evenodd" d="M39 96l1 3 2 0 1 2 8 3 0-2-8-3-2-3zM87 90l-10 4 0 2 7-2 1-2 2 0zM46 89l0 2 7 3 0-2zM64 85l0 2 8 0 0-2zM110 74l-2 0-1 5 2 0zM100 72l-2 0-3 9 2 0zM45 69l1 5 2 0-1-5zM91 67l-2 0-1 6 2 0zM55 66l1 5 2 0 1 3 2 0 0-2-3-1-1-5zM81 62l-11 3 0 2 6-2 5 1zM74 59l-8 3-1 4 2 0 2-3 5-2zM58 57l-2 0-1 5 2 0zM65 51l0 2 6 0 0-2zM28 46l-2 0-2 8 2 0zM81 45l0 2 4 4 2 0 0-2-4-4zM63 41l-5 1 0 2 5-1zM47 37l-2 0-4 4 0 2 2 0 4-4zM76 31l0 2 12 5 0-2-2 0-1-2zM62 30l-11 3 0 2 11-3zM57 20l-8 2-4 2-1 2-2 0-1 2-2 0-7 7-2 5 2 0 0-2 10-10 2 0 1-2 7-3 5-1z"/><path fill="#abacb3" fill-rule="evenodd" d="M88 74l-2 0 0 2-4 3 0 2 2 0 2-2zM92 58l-5 0-2-2 2-5-3 0-4 2-6 6-7 3-1 5 5 0 9-4 8-1 4-2zM99 51l0 2 3-1 6 2 0-2-5-2zM110 28l-2 0 0 2-3 1-2 5 2 0 0-2 2-1 1-3 2 0z"/><path fill="#f69291" fill-rule="evenodd" d="M82 103l-5 1 0 2 5-1zM53 93l0 2 5 1 0-2zM100 91l-2 0-2 2 0 2 2 0 2-2zM93 85l-2 0-3 3 0 2 2 0 3-3zM25 76l1 5 2 0-1-5zM47 74l0 2 2 1 0 2 3 1 0 2 2 0 3 3 5 1 0-2-7-2-1-2-3-1-2-5zM81 65l-2 0-1 5-2 1 0 2 2 0 0-2 2-1zM23 61l0 6 2 0 0-6zM33 59l0 8 2 0 0-8zM66 51l-5 1 0 2 5-1zM37 51l-2 0-1 5 2 0z"/></g></svg>
<span class="t" style="left:52px;top:503px;color:#ffd7af">Target      : vsftpd</span>
<svg class="ic" style="left:22px;top:525px" width="20" height="22" viewBox="0 0 20 22"><g transform="translate(0.05075 0.77075) scale(0.1615)"><path fill="#ffb1b1" fill-rule="evenodd" d="M13 39l-2 8 1 5-4 7 1 10 2 4 6 6 5 3 7 1 3 6 6 5 8 2 22-1 6 6 7 4 11 3 6 0 6-2 8-8 2-5 2-2 4-1 6-8 1-4-1-16-4-8 0-3-6-15-3-4-5-2-6-7-8-4-14-4-6 0-5 2-10 0-1-1-11 1-14 5-12 8z"/><path fill="#ed7170" fill-rule="evenodd" d="M73 98l0 2 4 3 10 4 4 0-7-3-6-5zM81 97l12 7 6 2 5 0-8-3-12-7zM100 93l2 2 10 2 2-3-5 1-4-2zM89 95l9 5 9 3 3-3-5 0-6-2-7-5 1-1zM117 79l-6-6-7 0-3 2-4 0-3-3 0-12-3-1 1 8-6 7-3 1-5-1-3-3-1-4-3-1-1 1 2 3-1 5-5 5-8 1-11-6 0 3 2 3-3 3-1 4 7-5 4 0 4 3 0 6-4 3 10 0-2-3 0-4 2-4 7-5 2 0 2 2 1 4 3 4 2 0-3-6 0-3 2-2 8-3 4 1 3 3-3 6 3 0 6-8 5-2 5 2 2 6 2 0zM121 48l-1 5-5 7-3 2-9-1 0 2 4 2 6-1 5 5 5 0 0-2-4 0-2-2 0-3 5-7zM24 38l-2 0-1 2 1 4 5 6 0 3-3 3-6 0-5-5-1-5-1 1 3 9 5 5 1 10 2-1-1-9 8-6 0-6-6-8zM35 37l0 2 3 2 3 6-2 7 3-1 2-5 7-1 0-2-7 0-7-8zM101 31l1 1 8 0 5 4-1-3-4-3-3-1zM110 41l-3-1 0 3-3 3-4 0-9-5-7 0-4 2-6 7-6 1-5-3-1-10 4-5 4 0 3 3-1 6 3-2 0-5-4-4-6-1-2-5-5-4 0 2 3 3 1 3 0 5-2 5-4 5 3 1 2 4 0 3-4 2-10 9-13-1 0 6-7 11-7 0-6-3 8 6 7 1 3 6 3 3 6 3-6-7-2-7 1-5 6-9 3-2 5 0 10 7 1-3-3-4 0-4 2-2 6-3 8 0 5 4 2 0 1-2-2-2 0-5 6-6 9 0 6 5 2 5 2-2-1-3 8-5zM72 21l0 2 6 1 5 6-1 4 3-2 10 1-1-2-6-1-3-3 0-4 5-3 8 1-4-2-8 0-4 3zM52 35l-1-3-7-6 0-5 3-4-5 3-1 3 1 2-2 2-7 1 0 2 4-1 9 1 4 5z"/><path fill="#b75656" fill-rule="evenodd" d="M69 96l3 3 1-2 5 1 6 5 7 3 1 2 10-1-9-2-13-8-10 0zM85 96l19 9 2-1 0-1-8-2-10-6zM93 93l6 4 6 2 6 0 1-1-10-2-3-3 1-1 5 0 4 2 5-1-4 0-6-3-6 0z"/></g></svg>
<span class="t" style="left:52px;top:525px;color:#ffd7af">Process     : vsftpd</span>
<svg class="ic" style="left:22px;top:547px" width="20" height="22" viewBox="0 0 20 22"><g transform="translate(0.05075 0.77075) scale(0.1615)"><path fill="#1976d2" fill-rule="evenodd" d="M46 9l-8 8-5 10-2 9 0 24 2 7 5 7 3 7 8 8 10 5-1 1-16 2-9 3-9 5-6 7-1 11 101 0 0-8-4-7-5-4-13-6-20-4 10-5 7-7 10-18 1-5-1-4 1-1 0-18-5-16-10-11-9-4-20-1-8 2z"/></g></svg>
<span class="t" style="left:52px;top:547px;color:#ffd7af">User        : root</span>
<svg class="ic" style="left:22px;top:569px" width="20" height="22" viewBox="0 0 20 22"><g transform="translate(0.05075 0.77075) scale(0.1615)"><path fill="#ffb1b1" fill-rule="evenodd" d="M13 39l-2 8 1 5-4 7 1 10 2 4 6 6 5 3 7 1 3 6 6 5 8 2 22-1 6 6 7 4 11 3 6 0 6-2 8-8 2-5 2-2 4-1 6-8 1-4-1-16-4-8 0-3-6-15-3-4-5-2-6-7-8-4-14-4-6 0-5 2-10 0-1-1-11 1-14 5-12 8z"/><path fill="#ed7170" fill-rule="evenodd" d="M73 98l0 2 4 3 10 4 4 0-7-3-6-5zM81 97l12 7 6 2 5 0-8-3-12-7zM100 93l2 2 10 2 2-3-5 1-4-2zM89 95l9 5 9 3 3-3-5 0-6-2-7-5 1-1zM117 79l-6-6-7 0-3 2-4 0-3-3 0-12-3-1 1 8-6 7-3 1-5-1-3-3-1-4-3-1-1 1 2 3-1 5-5 5-8 1-11-6 0 3 2 3-3 3-1 4 7-5 4 0 4 3 0 6-4 3 10 0-2-3 0-4 2-4 7-5 2 0 2 2 1 4 3 4 2 0-3-6 0-3 2-2 8-3 4 1 3 3-3 6 3 0 6-8 5-2 5 2 2 6 2 0zM121 48l-1 5-5 7-3 2-9-1 0 2 4 2 6-1 5 5 5 0 0-2-4 0-2-2 0-3 5-7zM24 38l-2 0-1 2 1 4 5 6 0 3-3 3-6 0-5-5-1-5-1 1 3 9 5 5 1 10 2-1-1-9 8-6 0-6-6-8zM35 37l0 2 3 2 3 6-2 7 3-1 2-5 7-1 0-2-7 0-7-8zM101 31l1 1 8 0 5 4-1-3-4-3-3-1zM110 41l-3-1 0 3-3 3-4 0-9-5-7 0-4 2-6 7-6 1-5-3-1-10 4-5 4 0 3 3-1 6 3-2 0-5-4-4-6-1-2-5-5-4 0 2 3 3 1 3 0 5-2 5-4 5 3 1 2 4 0 3-4 2-10 9-13-1 0 6-7 11-7 0-6-3 8 6 7 1 3 6 3 3 6 3-6-7-2-7 1-5 6-9 3-2 5 0 10 7 1-3-3-4 0-4 2-2 6-3 8 0 5 4 2 0 1-2-2-2 0-5 6-6 9 0 6 5 2 5 2-2-1-3 8-5zM72 21l0 2 6 1 5 6-1 4 3-2 10 1-1-2-6-1-3-3 0-4 5-3 8 1-4-2-8 0-4 3zM52 35l-1-3-7-6 0-5 3-4-5 3-1 3 1 2-2 2-7 1 0 2 4-1 9 1 4 5z"/><path fill="#b75656" fill-rule="evenodd" d="M69 96l3 3 1-2 5 1 6 5 7 3 1 2 10-1-9-2-13-8-10 0zM85 96l19 9 2-1 0-1-8-2-10-6zM93 93l6 4 6 2 6 0 1-1-10-2-3-3 1-1 5 0 4 2 5-1-4 0-6-3-6 0z"/></g></svg>
<span class="t" style="left:52px;top:569px;color:#ffd7af">Command     : /usr/s</span>
<span class="t" style="left:42px;top:591px;color:#ffd7af">•</span>
<svg class="ic" style="left:62px;top:591px" width="20" height="22" viewBox="0 0 20 22"><g transform="translate(0.05075 0.77075) scale(0.1615)"><path fill="#ffb1b1" fill-rule="evenodd" d="M13 39l-2 8 1 5-4 7 1 10 2 4 6 6 5 3 7 1 3 6 6 5 8 2 22-1 6 6 7 4 11 3 6 0 6-2 8-8 2-5 2-2 4-1 6-8 1-4-1-16-4-8 0-3-6-15-3-4-5-2-6-7-8-4-14-4-6 0-5 2-10 0-1-1-11 1-14 5-12 8z"/><path fill="#ed7170" fill-rule="evenodd" d="M73 98l0 2 4 3 10 4 4 0-7-3-6-5zM81 97l12 7 6 2 5 0-8-3-12-7zM100 93l2 2 10 2 2-3-5 1-4-2zM89 95l9 5 9 3 3-3-5 0-6-2-7-5 1-1zM117 79l-6-6-7 0-3 2-4 0-3-3 0-12-3-1 1 8-6 7-3 1-5-1-3-3-1-4-3-1-1 1 2 3-1 5-5 5-8 1-11-6 0 3 2 3-3 3-1 4 7-5 4 0 4 3 0 6-4 3 10 0-2-3 0-4 2-4 7-5 2 0 2 2 1 4 3 4 2 0-3-6 0-3 2-2 8-3 4 1 3 3-3 6 3 0 6-8 5-2 5 2 2 6 2 0zM121 48l-1 5-5 7-3 2-9-1 0 2 4 2 6-1 5 5 5 0 0-2-4 0-2-2 0-3 5-7zM24 38l-2 0-1 2 1 4 5 6 0 3-3 3-6 0-5-5-1-5-1 1 3 9 5 5 1 10 2-1-1-9 8-6 0-6-6-8zM35 37l0 2 3 2 3 6-2 7 3-1 2-5 7-1 0-2-7 0-7-8zM101 31l1 1 8 0 5 4-1-3-4-3-3-1zM110 41l-3-1 0 3-3 3-4 0-9-5-7 0-4 2-6 7-6 1-5-3-1-10 4-5 4 0 3 3-1 6 3-2 0-5-4-4-6-1-2-5-5-4 0 2 3 3 1 3 0 5-2 5-4 5 3 1 2 4 0 3-4 2-10 9-13-1 0 6-7 11-7 0-6-3 8 6 7 1 3 6 3 3 6 3-6-7-2-7 1-5 6-9 3-2 5 0 10 7 1-3-3-4 0-4 2-2 6-3 8 0 5 4 2 0 1-2-2-2 0-5 6-6 9 0 6 5 2 5 2-2-1-3 8-5zM72 21l0 2 6 1 5 6-1 4 3-2 10 1-1-2-6-1-3-3 0-4 5-3 8 1-4-2-8 0-4 3zM52 35l-1-3-7-6 0-5 3-4-5 3-1 3 1 2-2 2-7 1 0 2 4-1 9 1 4 5z"/><path fill="#b75656" fill-rule="evenodd" d="M69 96l3 3 1-2 5 1 6 5 7 3 1 2 10-1-9-2-13-8-10 0zM85 96l19 9 2-1 0-1-8-2-10-6zM93 93l6 4 6 2 6 0 1-1-10-2-3-3 1-1 5 0 4 2 5-1-4 0-6-3-6 0z"/></g></svg>
<span class="t" style="left:92px;top:591px;color:#ffd7af">Process is liste</span>
<span class="t" style="left:42px;top:613px;color:#ffd7af">•</span>
<svg class="ic" style="left:62px;top:613px" width="20" height="22" viewBox="0 0 20 22"><g transform="translate(0.05075 0.77075) scale(0.1615)"><path fill="#ffb1b1" fill-rule="evenodd" d="M13 39l-2 8 1 5-4 7 1 10 2 4 6 6 5 3 7 1 3 6 6 5 8 2 22-1 6 6 7 4 11 3 6 0 6-2 8-8 2-5 2-2 4-1 6-8 1-4-1-16-4-8 0-3-6-15-3-4-5-2-6-7-8-4-14-4-6 0-5 2-10 0-1-1-11 1-14 5-12 8z"/><path fill="#ed7170" fill-rule="evenodd" d="M73 98l0 2 4 3 10 4 4 0-7-3-6-5zM81 97l12 7 6 2 5 0-8-3-12-7zM100 93l2 2 10 2 2-3-5 1-4-2zM89 95l9 5 9 3 3-3-5 0-6-2-7-5 1-1zM117 79l-6-6-7 0-3 2-4 0-3-3 0-12-3-1 1 8-6 7-3 1-5-1-3-3-1-4-3-1-1 1 2 3-1 5-5 5-8 1-11-6 0 3 2 3-3 3-1 4 7-5 4 0 4 3 0 6-4 3 10 0-2-3 0-4 2-4 7-5 2 0 2 2 1 4 3 4 2 0-3-6 0-3 2-2 8-3 4 1 3 3-3 6 3 0 6-8 5-2 5 2 2 6 2 0zM121 48l-1 5-5 7-3 2-9-1 0 2 4 2 6-1 5 5 5 0 0-2-4 0-2-2 0-3 5-7zM24 38l-2 0-1 2 1 4 5 6 0 3-3 3-6 0-5-5-1-5-1 1 3 9 5 5 1 10 2-1-1-9 8-6 0-6-6-8zM35 37l0 2 3 2 3 6-2 7 3-1 2-5 7-1 0-2-7 0-7-8zM101 31l1 1 8 0 5 4-1-3-4-3-3-1zM110 41l-3-1 0 3-3 3-4 0-9-5-7 0-4 2-6 7-6 1-5-3-1-10 4-5 4 0 3 3-1 6 3-2 0-5-4-4-6-1-2-5-5-4 0 2 3 3 1 3 0 5-2 5-4 5 3 1 2 4 0 3-4 2-10 9-13-1 0 6-7 11-7 0-6-3 8 6 7 1 3 6 3 3 6 3-6-7-2-7 1-5 6-9 3-2 5 0 10 7 1-3-3-4 0-4 2-2 6-3 8 0 5 4 2 0 1-2-2-2 0-5 6-6 9 0 6 5 2 5 2-2-1-3 8-5zM72 21l0 2 6 1 5 6-1 4 3-2 10 1-1-2-6-1-3-3 0-4 5-3 8 1-4-2-8 0-4 3zM52 35l-1-3-7-6 0-5 3-4-5 3-1 3 1 2-2 2-7 1 0 2 4-1 9 1 4 5z"/><path fill="#b75656" fill-rule="evenodd" d="M69 96l3 3 1-2 5 1 6 5 7 3 1 2 10-1-9-2-13-8-10 0zM85 96l19 9 2-1 0-1-8-2-10-6zM93 93l6 4 6 2 6 0 1-1-10-2-3-3 1-1 5 0 4 2 5-1-4 0-6-3-6 0z"/></g></svg>
<span class="t" style="left:92px;top:613px;color:#ffd7af">Process is runni</span>
<span class="t" style="left:42px;top:635px;color:#ffd7af">•</span>
<svg class="ic" style="left:62px;top:635px" width="20" height="22" viewBox="0 0 20 22"><g transform="translate(0.05075 0.77075) scale(0.1615)"><path fill="#ffb1b1" fill-rule="evenodd" d="M13 39l-2 8 1 5-4 7 1 10 2 4 6 6 5 3 7 1 3 6 6 5 8 2 22-1 6 6 7 4 11 3 6 0 6-2 8-8 2-5 2-2 4-1 6-8 1-4-1-16-4-8 0-3-6-15-3-4-5-2-6-7-8-4-14-4-6 0-5 2-10 0-1-1-11 1-14 5-12 8z"/><path fill="#ed7170" fill-rule="evenodd" d="M73 98l0 2 4 3 10 4 4 0-7-3-6-5zM81 97l12 7 6 2 5 0-8-3-12-7zM100 93l2 2 10 2 2-3-5 1-4-2zM89 95l9 5 9 3 3-3-5 0-6-2-7-5 1-1zM117 79l-6-6-7 0-3 2-4 0-3-3 0-12-3-1 1 8-6 7-3 1-5-1-3-3-1-4-3-1-1 1 2 3-1 5-5 5-8 1-11-6 0 3 2 3-3 3-1 4 7-5 4 0 4 3 0 6-4 3 10 0-2-3 0-4 2-4 7-5 2 0 2 2 1 4 3 4 2 0-3-6 0-3 2-2 8-3 4 1 3 3-3 6 3 0 6-8 5-2 5 2 2 6 2 0zM121 48l-1 5-5 7-3 2-9-1 0 2 4 2 6-1 5 5 5 0 0-2-4 0-2-2 0-3 5-7zM24 38l-2 0-1 2 1 4 5 6 0 3-3 3-6 0-5-5-1-5-1 1 3 9 5 5 1 10 2-1-1-9 8-6 0-6-6-8zM35 37l0 2 3 2 3 6-2 7 3-1 2-5 7-1 0-2-7 0-7-8zM101 31l1 1 8 0 5 4-1-3-4-3-3-1zM110 41l-3-1 0 3-3 3-4 0-9-5-7 0-4 2-6 7-6 1-5-3-1-10 4-5 4 0 3 3-1 6 3-2 0-5-4-4-6-1-2-5-5-4 0 2 3 3 1 3 0 5-2 5-4 5 3 1 2 4 0 3-4 2-10 9-13-1 0 6-7 11-7 0-6-3 8 6 7 1 3 6 3 3 6 3-6-7-2-7 1-5 6-9 3-2 5 0 10 7 1-3-3-4 0-4 2-2 6-3 8 0 5 4 2 0 1-2-2-2 0-5 6-6 9 0 6 5 2 5 2-2-1-3 8-5zM72 21l0 2 6 1 5 6-1 4 3-2 10 1-1-2-6-1-3-3 0-4 5-3 8 1-4-2-8 0-4 3zM52 35l-1-3-7-6 0-5 3-4-5 3-1 3 1 2-2 2-7 1 0 2 4-1 9 1 4 5z"/><path fill="#b75656" fill-rule="evenodd" d="M69 96l3 3 1-2 5 1 6 5 7 3 1 2 10-1-9-2-13-8-10 0zM85 96l19 9 2-1 0-1-8-2-10-6zM93 93l6 4 6 2 6 0 1-1-10-2-3-3 1-1 5 0 4 2 5-1-4 0-6-3-6 0z"/></g></svg>
<span class="t" style="left:92px;top:635px;color:#ffd7af">Process is runni</span>
<svg class="ic" style="left:22px;top:679px" width="20" height="22" viewBox="0 0 20 22"><g transform="translate(0.05075 0.77075) scale(0.1615)"><path fill="#5d8ea5" fill-rule="evenodd" d="M21 14l-7 8-6 15 0 15 3 9 5 8 8 8 12 7 11 3 15-1 6-2 8-5 4 4 1 4 32 35 3 1 4-2 6-6 1-6-33-31-6-3-4-4 6-12 1-15-2-8-5-10-7-9-12-9-16-4-14 2-7 3z"/><path fill="#616262" fill-rule="evenodd" d="M84 77l-3 3-1 4 1 3 32 35 1-5 8-8 2-1 3 1-33-31-5-3zM75 74l-9 7-12 4-13 0-9-3 15 5 11 0 10-3 7-4-1-1zM85 28l3 9 0 15-4 11-6 8 3-2 3 1 2-2 5-13-1-16zM71 18l-11-7-8-2-14 1-11 5-8 8-6 13 0 5-1 1 1 11 5 11-3-8 0-15 5-12 9-10 15-7 14 0 7 2z"/><path fill="#bcbcbc" fill-rule="evenodd" d="M84 71l-4 0-5 2 1 1 0 5 3 3 2-4 6-4zM8 37l0 15 3 9 5 8 6 6 17 8 17 0 12-5-1-3-11 5-13 1-8-2-9-5-8-8-4-6-3-9 0-12-2 0zM28 9l3 1-2 3 7-4 13-2 10 2 8 4 8 7 5 7 4 11 0 10 3-1-2-16-5-10-10-10-10-5-10-1-1-1-10 1z"/><path fill="#dde1e2" fill-rule="evenodd" d="M86 48l-2 1 0 3-4 10-12 14 4-1 9-10 5-12zM49 21l-2-1-23 14-1 3zM29 10l-6 3-9 10-3 6-2 9 2-1 2-7 6-10 11-9z"/><path fill="#80a6b6" fill-rule="evenodd" d="M76 57l-2 0-7 6 1-1 5 0 1 1-1 2 3-5zM51 30l-29 18-1-2 1 6 22-13 6-6z"/><path fill="#9fbcc9" fill-rule="evenodd" d="M73 63l-5 0-7 4 5 0 3 2 3-3zM51 24l-1 2-29 17 1 4 29-18z"/><path fill="#bed1d9" fill-rule="evenodd" d="M55 73l1-1 5 1 7-4-9-1-4 2zM50 22l-4 1-24 15 0 4 28-17z"/><path fill="#f7fcff" fill-rule="evenodd" d="M46 19l-6-1-7 3-6 6-3 6 22-13z"/><path fill="#434343" fill-rule="evenodd" d="M126 109l-4 1-7 7-1 2 1 4 5-2 7-8z"/></g></svg>
<span class="t" style="left:52px;top:679px;color:#ffd7af">HEIMDALL INSIGHTS (S</span>
<span class="t" style="left:52px;top:701px;color:#ffd7af">FTP server for Linux</span>
<svg class="ic" style="left:52px;top:723px" width="20" height="22" viewBox="0 0 20 22"><g transform="translate(0.05075 0.77075) scale(0.1615)"><path fill="#fe2c24" fill-rule="evenodd" d="M127 13l-7-3-9-1-1 1-5 0-24 9-8 0-6-3-7-6-9-4-24-1-10 2-3-4-3 0-2 2-1 4 1 1 0 7 1 1 0 7 1 1 0 7 1 1 10 87 3 3 3 0 3-2-5-45 7-5 7-3 14-3 25-10 7-5 10-10 7-10 10-10 13-6z"/><path fill="#b9b8b8" fill-rule="evenodd" d="M11 3l-2 2-1 4 1 1 0 7 1 1 0 7 1 1 0 7 1 1 10 87 3 3 3 0 3-2 0-7-1-1-4-36-2-2-3-28-1-1-4-38-1-1 1-3-2-2z"/><path fill="#fe5d5d" fill-rule="evenodd" d="M100 16l-8 2-6 3-10 11-12 20 13-7 8-9 4-8zM53 15l-7-3-11-1-1-1-10 2 2 26 3 14 7-17 6-8 11-9z"/><path fill="#cd1935" fill-rule="evenodd" d="M127 13l-9 1-7 4-28 30-10 7-10 4-27 7-10 6-1 3 3 1 5-4 7-3 14-3 25-10 7-5 10-10 7-10 10-10 13-6z"/></g></svg>
<span class="t" style="left:82px;top:723px;color:#ffd7af">Risk Level: High</span>
<svg class="ic" style="left:22px;top:767px" width="20" height="22" viewBox="0 0 20 22"><g transform="translate(0.05075 0.77075) scale(0.1615)"><path fill="#fafafa" fill-rule="evenodd" d="M61 4l-2 2 0 10 4 2 0 3-4 2-10 2-10 5-14 14-7 16-1 20 3 11 5 10 14 14 7 4 13 4 17 0 13-4 11-7 10-11 5-10 3-11 0-15-3-11-8-14 3-3 5 1 5-5 0-3-6-7-4-1-6 6 2 3-4 4-6-5-10-5-10-2-4-2 0-3 4-2 0-10-2-2z"/><path fill="#b0bec5" fill-rule="evenodd" d="M69 51l0 8 2 0 0-8zM64 50l0 8 2 0 0-8zM110 22l-6 6 11 10 5-5 0-3-6-7zM63 21l-4 2-10 2-10 5-14 14-7 16-1 20 3 11 5 10 14 14 7 4 13 4 17 0 8-2 12-6 14-14 7-16 1-20-3-11-5-10-3-3 0-3-4-4-1 1-6-5-16-7-4 0-4-2zM62 32l16 1 15 8 9 10 6 15 0 13-6 15-13 13-15 6-13 0-15-6-13-13-6-15 0-13 6-15 9-10 12-7zM58 25l1 1-5 5-5 1-7 4-10 10-7 15-1 11-4 5-1-1 0-8 2-9 3-8 5-8 14-12zM59 6l0 10 3-1 14 1 0-10-2-2-13 0z"/><path fill="#d3dce0" fill-rule="evenodd" d="M97 86l-4 0-1 4 3 1zM38 86l2 5 2 0 1-4zM109 76l-2 0-1 9-4 7-3-1 0 2 2 1-1 3-8 8-3 1-2-6-2 0-1 2-2 0 1 4 4 1-7 4-9 1 0 2 5 0 7-2 8-4 2-3 2 0 5-5 0-2 3-2 4-8 2-7zM65 76l0 2 5 0 0-2zM26 76l0 5 2 7 4 8 3 2 0 2 5 5 2 0 2 3 8 4 7 2 5 0 0-2-9-1-7-4 4-1 1-4-2 0-1-2-2 0-2 6-3-1-8-8-1-3 2-1 0-2-3 1-4-7-1-9zM69 45l1 21 2 0 4-3 2-4 0-7-5-6zM66 45l-4 1-5 6 0 7 2 4 4 3 2 0zM82 41l-1 4 2 1 0 2 2 0 1-3-2 0-1-1 1-3zM53 41l-2 0 1 3-3 1 1 3 2 0 0-2 2-1zM77 32l0 2 5 1 7 3 1 2 2 0 8 8 1 3-4 1 0 2 2 1 0 2 2 0-1-5 1-1 6 13 0 5 2 0 0-5-2-7-4-8-3-2 0-2-5-5-5-2-1-2-6-3zM70 31l0 2 5 0 0-2zM60 31l0 2 5 0 0-2zM61 23l-12 3-8 4-13 11-4 6-4 10-2 9 0 12 4 0 3-4 0-4 3-1 0-5 6-13 1 1-1 5 2 0 0-2 2-1 0-2-4-1 1-3 8-8 2 0 1-2 12-4-1-3 3-3zM115 24l-5-2-4 4 0 3 8-1zM65 4l-6 2 0 8 7-1 0-8z"/><path fill="#b0947f" fill-rule="evenodd" d="M66 103l0 7 3 0 0-7zM82 98l1 7 4 1 0-5-2-3zM53 98l-3 0-2 3 0 5 4-1zM93 87l1 4 6 1-1-4zM42 87l-6 1-1 4 6-1zM97 71l0 3 8 0 0-3zM30 71l0 3 8 0 0-3zM69 58l0 8 2 0 0-8zM64 57l0 9 2 0 0-9zM100 53l-3 0-4 2 0 3 3 1 4-2zM35 53l0 4 4 2 3-1 0-3-4-2zM87 40l-4 1-1 6 4-1zM48 40l1 6 4 1-1-6zM65 35l0 2 5 1 0-3z"/><path fill="#64808e" fill-rule="evenodd" d="M105 27l-1 1 2 3-4 5 4 5 4-4 5 1-1-4-5-5zM75 5l-5 0 0 8-1 1-9 0-1 1 1 2 3 1-1 4 11 0-1-4 4-2 0-10z"/><path fill="#563428" fill-rule="evenodd" d="M66 35l-1 33-2 2 0 5 2 2 5 0 2-2 0-5-2-2 0-24-1-1 0-8z"/><path fill="#cfbeb0" fill-rule="evenodd" d="M66 102l-1 1 0 7 4 1 1-1 0-7zM81 99l0 3 5-1 0-2zM49 99l0 2 5 1 0-3zM94 86l0 2 2 1-1 3 5 1 1-4zM41 86l-6 2-1 4 1 1 5-1-1-3 2-1zM98 70l0 5 7 0 1-1 0-3zM29 71l1 4 7 0 0-5zM70 69l1 5 2 0-1-5zM65 69l-2 0-1 5 2 0zM101 53l-7 1-1 5 6-1 2-2zM34 53l0 3 2 2 6 1-1-5zM87 39l-4 1-2 4 1 4 2 0 0-2 3-1 1-2zM48 39l-1 1 1 5 2 0 1 3 2 0 1-4-2-4z"/><path fill="#81685f" fill-rule="evenodd" d="M69 65l0 5 2 0 0-5zM64 65l0 5 2 0 0-5zM66 34l-1 9 5 2-1-11z"/></g></svg>
<span class="t" style="left:52px;top:767px;color:#ffd7af">Started     : 2 days</span>
<svg class="ic" style="left:22px;top:789px" width="20" height="22" viewBox="0 0 20 22"><g transform="translate(0.05075 0.77075) scale(0.1615)"><path fill="#5d8ea5" fill-rule="evenodd" d="M21 14l-7 8-6 15 0 15 3 9 5 8 8 8 12 7 11 3 15-1 6-2 8-5 4 4 1 4 32 35 3 1 4-2 6-6 1-6-33-31-6-3-4-4 6-12 1-15-2-8-5-10-7-9-12-9-16-4-14 2-7 3z"/><path fill="#616262" fill-rule="evenodd" d="M84 77l-3 3-1 4 1 3 32 35 1-5 8-8 2-1 3 1-33-31-5-3zM75 74l-9 7-12 4-13 0-9-3 15 5 11 0 10-3 7-4-1-1zM85 28l3 9 0 15-4 11-6 8 3-2 3 1 2-2 5-13-1-16zM71 18l-11-7-8-2-14 1-11 5-8 8-6 13 0 5-1 1 1 11 5 11-3-8 0-15 5-12 9-10 15-7 14 0 7 2z"/><path fill="#bcbcbc" fill-rule="evenodd" d="M84 71l-4 0-5 2 1 1 0 5 3 3 2-4 6-4zM8 37l0 15 3 9 5 8 6 6 17 8 17 0 12-5-1-3-11 5-13 1-8-2-9-5-8-8-4-6-3-9 0-12-2 0zM28 9l3 1-2 3 7-4 13-2 10 2 8 4 8 7 5 7 4 11 0 10 3-1-2-16-5-10-10-10-10-5-10-1-1-1-10 1z"/><path fill="#dde1e2" fill-rule="evenodd" d="M86 48l-2 1 0 3-4 10-12 14 4-1 9-10 5-12zM49 21l-2-1-23 14-1 3zM29 10l-6 3-9 10-3 6-2 9 2-1 2-7 6-10 11-9z"/><path fill="#80a6b6" fill-rule="evenodd" d="M76 57l-2 0-7 6 1-1 5 0 1 1-1 2 3-5zM51 30l-29 18-1-2 1 6 22-13 6-6z"/><path fill="#9fbcc9" fill-rule="evenodd" d="M73 63l-5 0-7 4 5 0 3 2 3-3zM51 24l-1 2-29 17 1 4 29-18z"/><path fill="#bed1d9" fill-rule="evenodd" d="M55 73l1-1 5 1 7-4-9-1-4 2zM50 22l-4 1-24 15 0 4 28-17z"/><path fill="#f7fcff" fill-rule="evenodd" d="M46 19l-6-1-7 3-6 6-3 6 22-13z"/><path fill="#434343" fill-rule="evenodd" d="M126 109l-4 1-7 7-1 2 1 4 5-2 7-8z"/></g></svg>
<span class="t" style="left:52px;top:789px;color:#ffd7af">Why It Exists :</span>
<span class="t" style="left:42px;top:811px;color:#ffd7af">systemd (pid 1) <span class="a">→</span> vsftpd (pid 1754)</span>
<svg class="ic" style="left:22px;top:833px" width="20" height="22" viewBox="0 0 20 22"><g transform="translate(0.05075 0.77075) scale(0.1615)"><path fill="#b38251" fill-rule="evenodd" d="M67 4l-54 28 0 63 19 11 32 16 4 1 54-28 0-62-5-4-18-10z"/><path fill="#966239" fill-rule="evenodd" d="M122 34l-3 0-13 7 1 1 13-7 1 2-14 9-2-2 1 2 0 17-5 1-5 4-2 0-3 4-4-1 1-3 0-13-16 8-3-1 17-9 2-3-20 11 0 61 3 0 51-27z"/><path fill="#dea66c" fill-rule="evenodd" d="M13 32l0 1 3 0 17 10 31 15 2 2 20-10-5-4-47-24-2 0zM51 12l52 28 3 0 12-7 4 0-5-4-18-10-31-15z"/><path fill="#fedfb1" fill-rule="evenodd" d="M34 21l53 28 2 0 15-8-53-28-2 0z"/><path fill="#bf9f85" fill-rule="evenodd" d="M104 42l-15 8 0 21 4-4 4-1 3-3 4 0z"/><path fill="#684d35" fill-rule="evenodd" d="M31 87l2 5 3 3 0 4-3 1 7 4-3-3 0-5 4-1 0-3-2 3-1-4zM24 85l2 9 0-6 1-1-1-2zM19 81l-2 1 2 8 0-5 1-1zM88 52l-18 10 7-2 10-5zM120 36l-14 7 0 2 8-4z"/></g></svg>
<span class="t" style="left:52px;top:833px;color:#ffd7af">Source      : systemd service (supervisor)</span>
<svg class="ic" style="left:22px;top:855px" width="20" height="22" viewBox="0 0 20 22"><g transform="translate(0.05075 0.77075) scale(0.1615)"><path fill="#ffe36c" fill-rule="evenodd" d="M119 4l-26 0-1 7-4 4-73 0-3 2 0 105 1 1 109 0 1-1 0-106-2-1 0-9z"/><path fill="#f2ab46" fill-rule="evenodd" d="M44 41l0 3 4 2 73 0 2 1 0-5-1-1zM123 16l-2-2-106 1-3 2 0 11 2 1 0 2 33 0 0-2-33 0-1-1 1-1 39 0 0-6 2-2 25 0 2 2 0 6 39 0 1 1-1 1-33 0 0 2 33 0 0-2 2-1z"/><path fill="#ffca28" fill-rule="evenodd" d="M12 30l0 13 2 0 0-6 3-3 24 0 2 2 0 6 77 0 3 1 0-13z"/><path fill="#7cb342" fill-rule="evenodd" d="M88 15l33 0 0-9-2-2-26 0-1 7z"/><path fill="#f44336" fill-rule="evenodd" d="M14 34l-1 12 35 0 0-2-4-3-1-7z"/><path fill="#0288d1" fill-rule="evenodd" d="M50 28l0 2 35 0 0-2-3-4 0-5-2-1-25 0-2 1 0 5z"/><path fill="#df7340" fill-rule="evenodd" d="M43 41l0 2 2 2 4 1 0-2-3-1-1-2zM13 42l2 0 0-6 1-1 25 0 1 2 2 0 0-2-2-2-27 0-2 2zM83 26l0 3 3 2 4-1 29 0 4 2 0-6zM12 26l0 6 4-2 29 0 4 1 3-2 0-3z"/><path fill="#4396a7" fill-rule="evenodd" d="M48 29l0 2 39 0 0-2-3-1-1-8-2-2-2 0 0 2 2 1 0 5 1 1-1 2-27 0-1-1 1-7 2-1 0-2-2 0-2 2-1 8z"/></g></svg>
<span class="t" style="left:52px;top:855px;color:#ffd7af">Working Dir : /</span>
<span class="t" style="left:832px;top:789px;color:#ffd7af">systemd(1)</span>
<i style="left:866px;top:811px;width:2px;height:12px;background:#ffd7af"></i>
<i style="left:866px;top:821px;width:16px;height:2px;background:#ffd7af"></i>
<span class="t" style="left:892px;top:811px;color:#ffd7af">vsftpd(1754)</span>
<svg class="ic" style="left:832px;top:855px" width="20" height="22" viewBox="0 0 20 22"><g transform="translate(0.05075 0.77075) scale(0.1615)"><path fill="#fb5d14" fill-rule="evenodd" d="M55 4l0 2 4 5 3 7-1 9-2 4-7 7-7 10-4 13-2-4 0-6-1-1 1-10-3-1-8 9-4 8-3 10 0 18 6 16 4 6 7 7 15 8 9 2 16 0 16-6 14-13 6-15 0-15-4-11-5-6-8 8-3 0-4-3-1-8 1-1 2-17-3-13-4-7-5-5-9-5-8-2z"/><path fill="#ff6f02" fill-rule="evenodd" d="M21 80l0 4 3 10 6 10 0-6 3-9 7-13 8-9 4-3 10-4 5-7 8-6 1 2-2 5 0 7 10 6 8 9 8 16 3 15 2 0 3-3 4-8 2-10-3-1-2-8-7-13 0-3-5 4-5-1-3-5 1-10-12-7-8-2-13 1-6 3-1-3-6 9-2 10-1 1-1-1-1-7-1 0-8 10-5 9-2 7z"/><path fill="#ff8100" fill-rule="evenodd" d="M74 60l1 10 4 7 7 8 5 9 1 12 2 10 1 0 12-11-3-1-3-14-8-16-11-11-3-2zM64 56l-2 0-1 3-5 1-10 6-7 8-7 13-3 12-2 1 10 12 1 0 3-12 7-15 8-5 2-12 4-7 0-2 2-1z"/><path fill="#fff07c" fill-rule="evenodd" d="M44 104l1 5 3 3 5 3 10 3 17-1 8-3 3-4 0-2-2 0-2 3-6 3-14 2-15-5-6-5 0-2zM89 91l1 5 2 0-1-5zM50 87l2 5 2 2 2 0 0-2-4-3 0-2zM77 45l-5 2-9 9-4 7-3 9 0 13 2 4 0 4 2 0-1-5 1-2 4 2 12 0 7-4 3 1 0-2-9-11-3-9 0-5 3-9z"/><path fill="#fff39c" fill-rule="evenodd" d="M45 105l0 3 5 4 15 5 9 0 9-2 6-3 3-5 0-2-2 0-3 4-6 3-7 2-9 0-7-2-11-7zM91 92l-3-6-4-4-2 0-8 5-8 0-6-3-3 0 0 3 2 4-2 2-4-3-2-5-3-1-3 5-1 6 3-1 13 8 15 1 7-2 8-5z"/><path fill="#fff7b7" fill-rule="evenodd" d="M44 94l0 11 6 5 9 4 17 1 13-5 3-4 0-11-1-1-4 1-7 5-7 2-11-1-8-4-7-6-2 0z"/><path fill="#f6492e" fill-rule="evenodd" d="M55 4l0 2 4 5 3 7-1 8 10 0 10 3 7 4 3 3 0 4 1-1-1-10-2-6-4-7-5-5-12-6z"/><path fill="#ff9403" fill-rule="evenodd" d="M90 92l1 5 2 0-1-5zM84 82l0 2 3 2 0 2 2 0-2-5zM31 105l7 8 6 4 9 4 9 2 20-1 12-5 5-4-3 1-1-1-1-8-3-1 0 3-4 7-10 7-15 0-9-4-7-9-2-6 0-5 2-7 3-5 5 8 2 1 3-1 0-5-2-3-1-6-3 0-4 4-2 0-7 15-2 9-2 2zM76 71l0 2 2 1 2 5 3 1 0-2-3-2-2-5z"/><path fill="#ffcd5b" fill-rule="evenodd" d="M46 109l0 2 3 4 13 5 15 0 7-2 5-4 0-2-2 0-13 5-9 0-10-3-7-5zM91 98l0 6 2 0 0-6zM43 97l0 5 2 0 0-5zM51 84l-4 0-2 6 2 0 1-3 3-1zM74 67l2 7 2 1 0 2 2 0-4-10zM60 65l-2 0-2 8 2 0zM70 50l-2 0-3 3 0 2 2 0 3-3z"/><path fill="#ffb431" fill-rule="evenodd" d="M92 107l-2 0-3 7-5 3-7 2-15-1-11-5-2-5-2 0 0 2 3 3 0 2 6 5 6 2 11 1 1-1 7 0 9-6 0-2 2-1zM86 85l3 7 2 0-3-7zM48 83l3 7 2 0-3-7zM55 75l0 8 2 0 0-8zM59 67l-2 0-1 5 2 0zM74 66l1 5 2 0-1-5zM63 58l-2 0-2 6 2 0zM74 45l1 5 2 0 1-5z"/></g></svg>
<span class="t b" style="left:862px;top:855px;color:#ffd7af">RESOURCE PRESSURE (OPS)</span>
<i style="left:832px;top:874px;width:260px;height:1px;background:#ffd7af"></i>
</section>
<section id="side" aria-label="Heimdall key bindings">
<i style="left:1686px;top:7px;width:36px;height:2px;background:#a6a6a6"></i>
<i style="left:1842px;top:7px;width:56px;height:2px;background:#a6a6a6"></i>
<i style="left:1686px;top:7px;width:2px;height:882px;background:#a6a6a6"></i>
<i style="left:1896px;top:7px;width:2px;height:882px;background:#a6a6a6"></i>
<i style="left:1686px;top:887px;width:212px;height:2px;background:#a6a6a6"></i>
<svg class="ic" style="left:1732px;top:-3px" width="20" height="22" viewBox="0 0 20 22"><g transform="translate(0.05075 0.77075) scale(0.1615)"><path fill="#b0bec5" fill-rule="evenodd" d="M67 4l-15 9-17 5-16 2 0 27 5 24 10 22 7 10 13 13 12 7 3 0 11-6 10-9 9-12 6-11 6-17 3-13 1-13 1-1 0-21-24-4-9-3-14-9z"/><path fill="#cae3e6" fill-rule="evenodd" d="M67 19l-12 7-10 3-12 1-1 1 3 31 5 16 4 8 8 11 13 10 2 0z"/><path fill="#83aebe" fill-rule="evenodd" d="M68 4l0 11 4 3 16 7 9 2 8 0 2 2-1 24-7 26-11 18-9 9-11 6 0 2 2 2 0 3-1 1-2-1 1 4 12-6 10-9 9-12 6-11 6-17 3-13 1-14 1-1 0-20-21-3-12-4zM76 110l4-1 2 4-2 2-2 0-2-2zM86 101l2-2 2 0 2 4-1 1-1-1 1 1-3 1-2-2zM94 89l3-2 3 5-1 1-4-1zM100 77l3-2 3 4-2 2-2 0-2-2zM105 62l3-1 2 2-1 1 1 2-3 1-2-2zM107 49l2-2 2 0 2 4-3 2zM109 35l3-2 3 4-2 2-2 0-2-2zM111 21l3 2-1 4-5-3zM98 19l3 4-1 2-5-2zM83 17l3-1 2 2-1 1 1 2-3 1-2-2zM71 12l4-1 2 4-3 2-1-1 1-1-2 0z"/><path fill="#3a7d8d" fill-rule="evenodd" d="M67 16l-7 5-13 5-10 2-7 0-1 1 0 9 1 1 0 11 3 16 4 12 5 10 12 15 10 7 5 1 10-6 8-8 11-18 7-26 1-24-1-1-8 0-9-2-11-4zM67 17l14 8 10 3 12 1 1 1-1 25-6 22-9 16-12 12-7 4-3 0-7-4-12-12-4-6-8-19-3-15 0-7-1-1 0-15 1-1 15-2 9-3z"/></g></svg>
<span class="t b" style="left:1752px;top:-3px;color:#ffaf00">HEIMDALL</span>
<svg class="ic" style="left:1702px;top:41px" width="20" height="22" viewBox="0 0 20 22"><g transform="translate(0.05075 0.77075) scale(0.1615)"><path fill="#8cafbf" fill-rule="evenodd" d="M12 4l-4 4 0 110 1 2 4 3 109 0 2-1 3-4 0-109-1-2-4-3z"/><path fill="#fafafa" fill-rule="evenodd" d="M20 53l-1 4 1 14 5 11 6 6 9 4 38 0 3 3 0 15 1 1 6 0 24-25-1-5-25-24-5 1 0 16-2 2-37 0-6-6-1-6-12-11zM19 37l1 5 23 23 6 0 1-1 0-15 3-3 33 0 5 2 3 3 2 7 13 12 2 0 1-4-1-15-5-10-7-7-12-4-35 0-2-2 0-16-2-1-5 1z"/><path fill="#427687" fill-rule="evenodd" d="M124 5l-8-1 4 4 1 3 0 98-2 4-4 3-102 0-5-4 0 6 3 4 2 1 109 0 4-3 1-2 0-109z"/><path fill="#a0c5d3" fill-rule="evenodd" d="M112 86l-2 0-23 23 0 2 2 0 23-23zM103 64l0 2 2 2 2 0 0-2-2-2zM31 61l0 2 3 3 2 0 0-2-3-3zM21 52l0 2 2 2 2 0 0-2-2-2zM19 40l0 2 24 24 2 0 0-2-24-24zM34 10l-10-1-7 5-2 5 0 13 1 1 4-1 7-8 8-5 1-6z"/><path fill="#e1e8ec" fill-rule="evenodd" d="M45 91l0 2 34 0 1 1 0 15 1 2 5 1 0-2-2 0-2-2 0-15-2-2zM32 87l0 2 9 3 0-2zM110 82l0 5 2 0 0-5zM20 70l1 5 2 0-1-5zM34 66l1 6 2 1 0 2 5 2 0-2-2 0-3-3-1-6zM112 65l-2 0-1 2-3-1 0 2 2 2 2 0 2-2zM87 57l-5 0 0 2-2 1 0 16 2 0 0-16 5-1zM95 54l1 5 2 2 2 0-3-7zM22 52l-2 0-1 6 2 0zM45 66l3 0 3-3 0-15 1-1 36 0 0-2-37 0-2 2 0 15-2 2-2 0zM100 36l0 2 2 2 2 0 0-2-2-2zM19 36l0 5 2 0 0-5zM44 11l0 2 5 1 0 16 2 0 0-16-2-1 0-2z"/><path fill="#568596" fill-rule="evenodd" d="M8 111l0 4 5 2 0-2zM119 4l-4 0 0 1 5 5 0 100-5 5 0 2 4-1 3-5 0-102z"/><path fill="#b6ccd6" fill-rule="evenodd" d="M87 58l0 2 22 22 2 0 0-2-22-22zM44 12l-2 0-22 22 0 2 2 0 22-22z"/><path fill="#cbdae1" fill-rule="evenodd" d="M51 62l-2 0-1 2-4 0 0 2 5 0 2-2zM25 56l0 2 2 2 2 0 0-2-2-2zM89 46l0 2 2 0 3 3 0 2 2 0-2-5zM103 39l0 2 3 2 3 9 2 0-3-9-2-1-1-3zM92 31l0 2 6 2 1 2 2 0 0-2-2 0-1-2z"/></g></svg>
<span class="t" style="left:1732px;top:41px;color:#d75f5f">[r Refresh]</span>
<svg class="ic" style="left:1702px;top:63px" width="20" height="22" viewBox="0 0 20 22"><g transform="translate(0.05075 0.77075) scale(0.1615)"><path fill="#5d8ea5" fill-rule="evenodd" d="M21 14l-7 8-6 15 0 15 3 9 5 8 8 8 12 7 11 3 15-1 6-2 8-5 4 4 1 4 32 35 3 1 4-2 6-6 1-6-33-31-6-3-4-4 6-12 1-15-2-8-5-10-7-9-12-9-16-4-14 2-7 3z"/><path fill="#616262" fill-rule="evenodd" d="M84 77l-3 3-1 4 1 3 32 35 1-5 8-8 2-1 3 1-33-31-5-3zM75 74l-9 7-12 4-13 0-9-3 15 5 11 0 10-3 7-4-1-1zM85 28l3 9 0 15-4 11-6 8 3-2 3 1 2-2 5-13-1-16zM71 18l-11-7-8-2-14 1-11 5-8 8-6 13 0 5-1 1 1 11 5 11-3-8 0-15 5-12 9-10 15-7 14 0 7 2z"/><path fill="#bcbcbc" fill-rule="evenodd" d="M84 71l-4 0-5 2 1 1 0 5 3 3 2-4 6-4zM8 37l0 15 3 9 5 8 6 6 17 8 17 0 12-5-1-3-11 5-13 1-8-2-9-5-8-8-4-6-3-9 0-12-2 0zM28 9l3 1-2 3 7-4 13-2 10 2 8 4 8 7 5 7 4 11 0 10 3-1-2-16-5-10-10-10-10-5-10-1-1-1-10 1z"/><path fill="#dde1e2" fill-rule="evenodd" d="M86 48l-2 1 0 3-4 10-12 14 4-1 9-10 5-12zM49 21l-2-1-23 14-1 3zM29 10l-6 3-9 10-3 6-2 9 2-1 2-7 6-10 11-9z"/><path fill="#80a6b6" fill-rule="evenodd" d="M76 57l-2 0-7 6 1-1 5 0 1 1-1 2 3-5zM51 30l-29 18-1-2 1 6 22-13 6-6z"/><path fill="#9fbcc9" fill-rule="evenodd" d="M73 63l-5 0-7 4 5 0 3 2 3-3zM51 24l-1 2-29 17 1 4 29-18z"/><path fill="#bed1d9" fill-rule="evenodd" d="M55 73l1-1 5 1 7-4-9-1-4 2zM50 22l-4 1-24 15 0 4 28-17z"/><path fill="#f7fcff" fill-rule="evenodd" d="M46 19l-6-1-7 3-6 6-3 6 22-13z"/><path fill="#434343" fill-rule="evenodd" d="M126 109l-4 1-7 7-1 2 1 4 5-2 7-8z"/></g></svg>
<span class="t" style="left:1732px;top:63px;color:#d75f5f">[i Inspect]</span>
<svg class="ic" style="left:1702px;top:85px" width="20" height="22" viewBox="0 0 20 22"><g transform="translate(0.05075 0.77075) scale(0.1615)"><path fill="#ffffff" fill-rule="evenodd" d="M9 4l-1 1 0 117 1 1 96 0 1-1 0-68 5-7 9-9 1-5 6-8-1-6-7-7-8-4-4 0-2-4z"/><path fill="#6fbff0" fill-rule="evenodd" d="M9 4l-1 1 0 117 1 1 96 0 1-1 0-67-4 5 0 58-1 1-88 0-1-1 0-109 1-1 88 0 1 4 2 0 3-3-2-5z"/><path fill="#aac6cf" fill-rule="evenodd" d="M18 107l0 3 7-1 4 2 4 0 6-2 5 2 7 0-1-5-5 1-5-2-4 0-5 2-5-2-6 0zM50 96l1 3-2 1 0 3 5-2 1 3 4 2-4 2-1 3 2 0 5-3 1-2 2 0 0-2-2 0-2 2-1-3-4-1-2-5zM82 88l0 2 12-1 0-4-10 0zM18 87l0 3 9-1 4 2 4 0 4-2 5 0 0-4-7 0-4 2-4-2-7 0zM19 76l4-1 9 1 4-2 20 1 4-1 1-4-3 1-24-1-4 2-9-1-2 1zM54 57l0 3 11 0 1 1 4-1 0-3-5-1-10 0zM43 56l-3-1-21 1 0 3 1 1 5-1 2 1 9 0 1-1 6 1zM66 41l0 4 14 0 2-2 0-2zM54 41l-4 1-8-2-5 0-5 2-13-1 0 3 1 1 4-1 4 2 6 0 4-2 16 1zM66 22l-10 0-1-1-10 2-25-1-1 4 14 0 1-1 5 2 8 0 5-2 13 1zM95 18l-5 7 1 7 10 9 9 4 5-1 5-6 1-5-5-1-7-4-10-10z"/><path fill="#feb205" fill-rule="evenodd" d="M112 45l-8-1-1-3-3-1-3-3-2 0-34 48-1 6 4 3 5-1 2 4 6 0 29-40 0-3 3-3z"/><path fill="#d7eaf4" fill-rule="evenodd" d="M11 118l0 2 92 0 0-2zM21 105l-2 0-2 2 0 2 2 0 2-2zM50 104l-2 0-1 2-8-1-1 3-1-3-4 1-8-1-1 5 6 1 1-3 1 3 3-1 10 1 1-3 4-1zM18 86l0 5 4-1 10 1 1-3 1 3 5-1-1-5-3 1-7-1-1 3-3 0-1-3zM40 84l0 2 5 2 0-3zM39 75l4 0 1-3 10 0 1 3 4 0 1-5-20 0zM35 70l-9 1-1 3-2 0-1-3-4 1 0 4 10 0 1-3 2 1 0 2 5-1zM103 61l-3 1-15 22 0 2 7 0 1 1-1 1-9 0-2 1-6 8-21 13-4 0 0 2 4 0 25-8 24-20zM63 61l4 0 0-2 4-1 0-2-7 0zM62 55l-8 1 0 5 3 0-1-3 1-1 5 0zM19 58l0 2 2 0 1-3 1 3 11 1 10-2 0-3-5-1-1 3-1-3-4 1-12-1 0 2zM65 42l0 2 2 0 1-2 1 3 3 0 2-5-6 0-1 2zM32 41l1 5 10-1 1-3 2 1-1 3 10-1 0-3-14-2-1 3-2-1 0-2zM18 42l1 3 7 0 1 1 2 0 1-5-3-1-7 0zM27 22l-2 5 5 0-1-5zM19 22l1 5 2 0-1-5zM63 21l1 5 2 0 1-4zM45 22l1 5 12-1 0-2 2-1 0-2-6 0-1 3-1-3-3 0 1 3-2 1-1-3zM31 21l1 5 8 1 1-5zM91 23l0 2 2 1 0 2 3 4 4 2 3 0 1-3 5 3 3 0 0-2-9-6-5-6-4-1 0 2zM11 7l0 2 92 0 0-2z"/><path fill="#f3605e" fill-rule="evenodd" d="M106 7l-7 8-1 5 12 11 11 4 0-2 6-8-1-6-7-7-8-4z"/><path fill="#fcd639" fill-rule="evenodd" d="M81 91l-2 0 0 2-3 3-3 0-2-2-2 0 0 2 3 2 4 0 1-2 2 0zM60 90l0 2 2 2 3 0 0-2zM88 81l-2 0 0 2-2 1-2 5 2 0 0-2 2-1zM95 71l-2 0 0 2-2 1-2 5 2 0 0-2 2-1zM92 29l-2 0-3 3-33 47-1 5 2 3 6 1 1-5 32-44 0-5-2-2z"/><path fill="#e38e2b" fill-rule="evenodd" d="M92 30l-2 0 0 3 3 4-34 47 0 3 3 1 31-45 3-3 6 3-35 49 0 2 4 1 34-49 2-1 3 2-2 5 6-8-11-4z"/><path fill="#fceab1" fill-rule="evenodd" d="M101 63l-2 0 0 2-5 5 0 2-2 1-2 5-3 2-2 5 2 0 0-2 3-2 0-2 2-1 2-5 3-2 0-2 2-1zM91 29l-3 1-2 5-3 2-2 5-3 2-2 5-2 1 0 2-3 2-2 5-2 1 0 2-3 2 0 2-2 1-2 5-3 2 0 2-4 4 0 5-3 12 3 5 5 3 7 0 12-7 0-2 3-1 0-2 2-1 0-2-2 0-2 5-4 2-4-4-6 0-3-3 0-3-4-1-2-2 0-4 5-5 0-2 2-1 2-5 3-2 2-5 3-2 2-5 2-1 0-2 3-2 2-5 2-1 0-2 3-2 2-5 3-2zM103 12l-3 1 0 2-3 2 0 2 3-1 0-2 3-2z"/><path fill="#656565" fill-rule="evenodd" d="M50 97l-2 12 2 2 5 0 8-5 0-2-6-1-5-6z"/></g></svg>
<span class="t" style="left:1732px;top:85px;color:#d75f5f">[d Dump]</span>
<svg class="ic" style="left:1702px;top:107px" width="20" height="22" viewBox="0 0 20 22"><g transform="translate(0.05075 0.77075) scale(0.1615)"><path fill="#f1a259" fill-rule="evenodd" d="M22 18l-10 12-5 17 0 9 2 9 11 21 18 19 7 5 12 6 11 3 17 0 12-4 3-4 0-7-4-4-11-7-7-10 1-1 5 0 19 9 13-1 4-2 5-5 2-6-1-12-4-10-8-13-19-19-11-7-14-6-9-2-15 0-14 4zM78 60l3-3 6 0 6 5 2 5-1 3-2 2-4 0-4-2-4-4z"/><path fill="#b35f14" fill-rule="evenodd" d="M79 80l0 2 5 0 19 9 13-1 4-2 6-7 0-2-5 6-6 3-12 0-19-9zM82 54l-3 3 0 2 2-2 6 0 6 5 2 5-2 4 2 0 2-3-1-7-5-5-5-2zM9 38l-2 9 0 9 3 12 10 18 18 19 7 5 12 6 11 3 17 0 10-3 4-3 1-4-3 3-10 4-19 0-15-5-14-9-17-18-10-18-4-16zM60 23l1 6 8 6 6 0 4-3 0-2-4 3-6 0-8-6z"/><path fill="#f4f3f2" fill-rule="evenodd" d="M54 83l-1 5 4 6 6 3 5 0 3-2 1-6-3-5-6-3-7 0zM38 57l-5-1-2 2 0 4 2 0zM99 38l-2-1-4 1-1 4 2 1zM38 24l-6 1-1 4 2 2 1-3zM69 19l-4 0-2 2 0 3 2 2 1-3 4-3z"/><path fill="#1d77b6" fill-rule="evenodd" d="M29 56l-2 2 0 7 3 5 6 4 8 0 4-5-2-8-8-6zM29 61l0-2 3-4 6 0 1 1-7 8z"/><path fill="#e33c32" fill-rule="evenodd" d="M31 24l-4 5 1 6 10 7 5 0 5-6 0-5-2-4-4-3-5-1 2 0 1 2-5 4-1 3-2 0-2-2 0-4 4-3z"/><path fill="#77a341" fill-rule="evenodd" d="M93 36l-4 4 1 6 8 6 7 0 3-4 0-3-2-4-5-4zM91 43l0-4 3-3 4 0 2 2-6 6z"/><path fill="#ffec59" fill-rule="evenodd" d="M62 21l0 5 6 5 5 1 3-1 3-3-1-5-5-4-8-1zM69 18l2 2-4 3 0 2-2 2-3-3 0-3 3-3z"/><path fill="#b3b2af" fill-rule="evenodd" d="M51 84l-1 3 1 5 5 6 7 3 4 0 4-2 1-5-4 4-5 0-6-3-5-7 0-3 2-3z"/></g></svg>
<span class="t" style="left:1732px;top:107px;color:#d75f5f">[c Color]</span>
<svg class="ic" style="left:1702px;top:129px" width="20" height="22" viewBox="0 0 20 22"><g transform="translate(0.05075 0.77075) scale(0.1615)"><path fill="#82aec0" fill-rule="evenodd" d="M59 4l-2 18-2 2-9 3-13-11-3 0-10 10 0 3 11 13 0 2-5 9-18 2 0 17 18 2 2 2 3 9-11 13 0 3 10 10 3 0 13-11 2 0 9 5 2 18 17 0 2-18 2-2 9-3 13 11 3 0 10-10 0-3-11-13 0-2 5-9 18-2 0-17-18-2-2-2-3-9 11-13 0-3-10-10-3 0-13 11-2 0-9-5-2-18zM62 53l8-1 3 1 5 5 1 8-1 3-5 5-8 1-3-1-5-5-1-8 1-3z"/><path fill="#95d0df" fill-rule="evenodd" d="M70 25l-9 0-7 2-9 5-8 8-7 15 0 5-1 1 0 5 1 1 3 0 1-10 6-12 7-7 9-5 6-2 7 0 2-2z"/><path fill="#367c8d" fill-rule="evenodd" d="M85 49l-1 0 4 5 2 6 0 7-4 9-6 6-6 3-10 1-8-3 2 2 9 4 8 0 8-3 5-4 4-6 2-10-4-12z"/><path fill="#b9e4ea" fill-rule="evenodd" d="M69 43l-10 1-8 7-3 8 0 7 3 0 0-5 3-7 8-6 7-1 1-1z"/></g></svg>
<span class="t" style="left:1732px;top:129px;color:#d75f5f">[p Settings]</span>
<svg class="ic" style="left:1702px;top:151px" width="20" height="22" viewBox="0 0 20 22"><g transform="translate(0.05075 0.77075) scale(0.1615)"><path fill="#5d8ea5" fill-rule="evenodd" d="M21 14l-7 8-6 15 0 15 3 9 5 8 8 8 12 7 11 3 15-1 6-2 8-5 4 4 1 4 32 35 3 1 4-2 6-6 1-6-33-31-6-3-4-4 6-12 1-15-2-8-5-10-7-9-12-9-16-4-14 2-7 3z"/><path fill="#616262" fill-rule="evenodd" d="M84 77l-3 3-1 4 1 3 32 35 1-5 8-8 2-1 3 1-33-31-5-3zM75 74l-9 7-12 4-13 0-9-3 15 5 11 0 10-3 7-4-1-1zM85 28l3 9 0 15-4 11-6 8 3-2 3 1 2-2 5-13-1-16zM71 18l-11-7-8-2-14 1-11 5-8 8-6 13 0 5-1 1 1 11 5 11-3-8 0-15 5-12 9-10 15-7 14 0 7 2z"/><path fill="#bcbcbc" fill-rule="evenodd" d="M84 71l-4 0-5 2 1 1 0 5 3 3 2-4 6-4zM8 37l0 15 3 9 5 8 6 6 17 8 17 0 12-5-1-3-11 5-13 1-8-2-9-5-8-8-4-6-3-9 0-12-2 0zM28 9l3 1-2 3 7-4 13-2 10 2 8 4 8 7 5 7 4 11 0 10 3-1-2-16-5-10-10-10-10-5-10-1-1-1-10 1z"/><path fill="#dde1e2" fill-rule="evenodd" d="M86 48l-2 1 0 3-4 10-12 14 4-1 9-10 5-12zM49 21l-2-1-23 14-1 3zM29 10l-6 3-9 10-3 6-2 9 2-1 2-7 6-10 11-9z"/><path fill="#80a6b6" fill-rule="evenodd" d="M76 57l-2 0-7 6 1-1 5 0 1 1-1 2 3-5zM51 30l-29 18-1-2 1 6 22-13 6-6z"/><path fill="#9fbcc9" fill-rule="evenodd" d="M73 63l-5 0-7 4 5 0 3 2 3-3zM51 24l-1 2-29 17 1 4 29-18z"/><path fill="#bed1d9" fill-rule="evenodd" d="M55 73l1-1 5 1 7-4-9-1-4 2zM50 22l-4 1-24 15 0 4 28-17z"/><path fill="#f7fcff" fill-rule="evenodd" d="M46 19l-6-1-7 3-6 6-3 6 22-13z"/><path fill="#434343" fill-rule="evenodd" d="M126 109l-4 1-7 7-1 2 1 4 5-2 7-8z"/></g></svg>
<span class="t" style="left:1732px;top:151px;color:#d75f5f">[F Filter]</span>
<svg class="ic" style="left:1702px;top:195px" width="20" height="22" viewBox="0 0 20 22"><g transform="translate(0.05075 0.77075) scale(0.1615)"><path fill="#f44336" fill-rule="evenodd" d="M59 4l-9 2-12 5-11 8-8 9-6 10-4 11-1 23 2 9 5 12 8 11 9 8 6 4 12 5 9 2 17 0 9-2 12-5 11-8 8-9 4-6 5-12 2-9 0-17-2-9-5-12-8-11-9-8-6-4-12-5-9-2z"/><path fill="#cd3333" fill-rule="evenodd" d="M21 26l-6 8-2 5 1 0 2-6 2-1 0-2 3-2zM59 4l-9 2-12 5-11 8-4 5 13-10 11-5 9-2 16 0 8 2 17 9 11 11 8 14 3 11 0 18-5 15-5 8-7 8-14 10-15 5-18 0-11-3-14-8-11-11-7-12-2-9-1 0 0 2 6 16 8 11 9 8 6 4 12 5 9 2 17 0 9-2 12-5 11-8 8-9 4-6 5-12 2-9 0-17-2-9-5-12-8-11-9-8-6-4-12-5-9-2z"/><path fill="#fafafa" fill-rule="evenodd" d="M23 57l0 13 2 2 85 0 2-2 0-13-2-2-85 0z"/><path fill="#ff8a80" fill-rule="evenodd" d="M61 15l-1-1-11 0-14 6-8 8-3 5-2 6 1 8 5 1 3-3 5-9 11-10 14-6z"/><path fill="#f87167" fill-rule="evenodd" d="M23 69l0 2 4 2 81 0 4-2 0-2-2 0-2 2-81 0-2-2zM25 35l-2 0-1 5 2 0zM49 24l-2 0-4 4-2 0-6 6-2 5-2 1-1 3-4 4-2-3-2 0 1 4 2 1 4-1 2-2 2-6 2-1 0-2 9-9 5-2zM62 16l-2 0-1 3-6 2 0 2 7-2 2-2zM50 14l-6 1-8 4-1 2-2 0-5 5-2 5 2 0 0-2 8-8 14-5zM52 13l0 2 6 0 0-2z"/><path fill="#e43c34" fill-rule="evenodd" d="M99 106l-2 0-2 3-2 0-11 6-11 2 0 2 8-1 11-4 5-3 1-2 2 0zM27 105l0 2 3 1 1 2 2 0 1 2 8 4 9 2 0-2-6-1-9-5-2 0-5-5zM10 78l0 3 4 10 5 8 2 0 0-2-5-5-5-14zM120 70l-2 0-2 11-6 11 0 2-3 2 0 2 3-1 0-2 2-1 3-5 4-11zM106 26l0 2 5 5 0 2 5 9 1 6 2 0-2-9-4-8-2-1-2-5zM52 7l-7 1-7 3-11 8-1 2 2 0 2-3 2 0 11-7 9-2zM69 6l0 2 5 0 10 3 7 4 2 0 5 5 2 0-1-3-2 0-1-2-2 0-1-2-8-4-11-3z"/></g></svg>
<span class="t" style="left:1732px;top:195px;color:#d75f5f">[s Stop]</span>
<svg class="ic" style="left:1702px;top:217px" width="20" height="22" viewBox="0 0 20 22"><g transform="translate(0.05075 0.77075) scale(0.1615)"><path fill="#fb5d14" fill-rule="evenodd" d="M55 4l0 2 4 5 3 7-1 9-2 4-7 7-7 10-4 13-2-4 0-6-1-1 1-10-3-1-8 9-4 8-3 10 0 18 6 16 4 6 7 7 15 8 9 2 16 0 16-6 14-13 6-15 0-15-4-11-5-6-8 8-3 0-4-3-1-8 1-1 2-17-3-13-4-7-5-5-9-5-8-2z"/><path fill="#ff6f02" fill-rule="evenodd" d="M21 80l0 4 3 10 6 10 0-6 3-9 7-13 8-9 4-3 10-4 5-7 8-6 1 2-2 5 0 7 10 6 8 9 8 16 3 15 2 0 3-3 4-8 2-10-3-1-2-8-7-13 0-3-5 4-5-1-3-5 1-10-12-7-8-2-13 1-6 3-1-3-6 9-2 10-1 1-1-1-1-7-1 0-8 10-5 9-2 7z"/><path fill="#ff8100" fill-rule="evenodd" d="M74 60l1 10 4 7 7 8 5 9 1 12 2 10 1 0 12-11-3-1-3-14-8-16-11-11-3-2zM64 56l-2 0-1 3-5 1-10 6-7 8-7 13-3 12-2 1 10 12 1 0 3-12 7-15 8-5 2-12 4-7 0-2 2-1z"/><path fill="#fff07c" fill-rule="evenodd" d="M44 104l1 5 3 3 5 3 10 3 17-1 8-3 3-4 0-2-2 0-2 3-6 3-14 2-15-5-6-5 0-2zM89 91l1 5 2 0-1-5zM50 87l2 5 2 2 2 0 0-2-4-3 0-2zM77 45l-5 2-9 9-4 7-3 9 0 13 2 4 0 4 2 0-1-5 1-2 4 2 12 0 7-4 3 1 0-2-9-11-3-9 0-5 3-9z"/><path fill="#fff39c" fill-rule="evenodd" d="M45 105l0 3 5 4 15 5 9 0 9-2 6-3 3-5 0-2-2 0-3 4-6 3-7 2-9 0-7-2-11-7zM91 92l-3-6-4-4-2 0-8 5-8 0-6-3-3 0 0 3 2 4-2 2-4-3-2-5-3-1-3 5-1 6 3-1 13 8 15 1 7-2 8-5z"/><path fill="#fff7b7" fill-rule="evenodd" d="M44 94l0 11 6 5 9 4 17 1 13-5 3-4 0-11-1-1-4 1-7 5-7 2-11-1-8-4-7-6-2 0z"/><path fill="#f6492e" fill-rule="evenodd" d="M55 4l0 2 4 5 3 7-1 8 10 0 10 3 7 4 3 3 0 4 1-1-1-10-2-6-4-7-5-5-12-6z"/><path fill="#ff9403" fill-rule="evenodd" d="M90 92l1 5 2 0-1-5zM84 82l0 2 3 2 0 2 2 0-2-5zM31 105l7 8 6 4 9 4 9 2 20-1 12-5 5-4-3 1-1-1-1-8-3-1 0 3-4 7-10 7-15 0-9-4-7-9-2-6 0-5 2-7 3-5 5 8 2 1 3-1 0-5-2-3-1-6-3 0-4 4-2 0-7 15-2 9-2 2zM76 71l0 2 2 1 2 5 3 1 0-2-3-2-2-5z"/><path fill="#ffcd5b" fill-rule="evenodd" d="M46 109l0 2 3 4 13 5 15 0 7-2 5-4 0-2-2 0-13 5-9 0-10-3-7-5zM91 98l0 6 2 0 0-6zM43 97l0 5 2 0 0-5zM51 84l-4 0-2 6 2 0 1-3 3-1zM74 67l2 7 2 1 0 2 2 0-4-10zM60 65l-2 0-2 8 2 0zM70 50l-2 0-3 3 0 2 2 0 3-3z"/><path fill="#ffb431" fill-rule="evenodd" d="M92 107l-2 0-3 7-5 3-7 2-15-1-11-5-2-5-2 0 0 2 3 3 0 2 6 5 6 2 11 1 1-1 7 0 9-6 0-2 2-1zM86 85l3 7 2 0-3-7zM48 83l3 7 2 0-3-7zM55 75l0 8 2 0 0-8zM59 67l-2 0-1 5 2 0zM74 66l1 5 2 0-1-5zM63 58l-2 0-2 6 2 0zM74 45l1 5 2 0 1-5z"/></g></svg>
<span class="t" style="left:1732px;top:217px;color:#d75f5f">[f Firewall]</span>
<svg class="ic" style="left:1702px;top:239px" width="20" height="22" viewBox="0 0 20 22"><g transform="translate(0.05075 0.77075) scale(0.1615)"><path fill="#82aec0" fill-rule="evenodd" d="M116 7l-7-3-11 0-11 6-4 5-3 8 0 9 3 7-11 11-14-13 2-3 0-5-5-8 4-5 18-10-1-1-17 0-11 4-21 18-1 2 1 8-2 2-8-3-9 7 0 4 3 5 12 11 3 1 8-7 1-2-2-5 1-3 10 1 3-2 13 15-24 22-21 17-3 5 0 7 5 7 6 3 5 0 7-4 35-43 5 4 35 43 7 1 9-8 1-4-2-4-43-45 13-13 5 2 8 0 8-3 8-8 3-7 0-7-6-1-13 8-4-3-3-5 0-7 5-4 10-5zM25 102l3 0 4 4 0 4-3 3-5 0-3-3 0-4z"/><path fill="#a06841" fill-rule="evenodd" d="M61 41l-1 8-4 7 4 5-1 1 10 13 2 0 38 46 3 2 5 0 9-8 1-4-2-4-43-45 1-1z"/><path fill="#307989" fill-rule="evenodd" d="M60 61l-8 7 6 0 7 8 0 5 6-7zM8 43l0 4 3 5 10 10 5 2 2-2 0-2-3-6-12-11-3-1zM26 29l1 8-3 3 8 9 2-2 9 1-5-9-9-9zM127 26l-6-1-13 8 0 1 6 1 11-6zM81 20l-1 12 3 7-4 4 3 1 6 5-1 4-6 7 0 2 14-13 5 2 8 0 6-2 0-1-9 1-11-5-4-4-5-9-1-12z"/><path fill="#b5e0e7" fill-rule="evenodd" d="M52 75l-3 0-7 4-17 15 0 3 9-1 18-18zM13 40l0 2 6 5 5 0 2-2-1-5-4-3-5 0zM60 7l-5 0-9 4-13 11 0 2 7 0 6-3 10-9 4-2zM107 5l-1-1-5 0-9 3-7 6-1 5 4 0 11-9 8-2z"/><path fill="#7e5234" fill-rule="evenodd" d="M56 37l-9 9 9 11 2 0 3-6 2-9-5-5z"/><path fill="#5c92a2" fill-rule="evenodd" d="M55 66l0 2 6 2-1-3zM88 53l-3 1 0 2-3 2 0 2 3-1 0-2 3-2zM71 50l0 2 4 4 2 0 0-2-4-4zM29 44l2 5 2 0-1-4zM80 42l0 2 4 1 4 6 2 0 0-2-3-4zM10 42l-1 2 6 2 9 9 0 2 2 1 0 3 2 0 0-3-2-1-2-5-6-6-2 0-2-3zM37 40l0 2 3 2 1 4 2 0-3-7zM31 33l0 2 2 2 2 0 0-2-2-2zM127 26l-2 0-1 2-4 1-1 2-6 2 0 2 2 0 4-2 1-2 4-1 1-2 2 0zM83 26l1 7 3 6 2 1 0 2 10 7 7 1 0-2-11-3-6-6-4-10 0-3z"/></g></svg>
<span class="t" style="left:1732px;top:239px;color:#d75f5f">[a Actions]</span>
<svg class="ic" style="left:1702px;top:261px" width="20" height="22" viewBox="0 0 20 22"><g transform="translate(0.05075 0.77075) scale(0.1615)"><path fill="#82aec0" fill-rule="evenodd" d="M59 4l-2 18-2 2-9 3-13-11-3 0-10 10 0 3 11 13 0 2-5 9-18 2 0 17 18 2 2 2 3 9-11 13 0 3 10 10 3 0 13-11 2 0 9 5 2 18 17 0 2-18 2-2 9-3 13 11 3 0 10-10 0-3-11-13 0-2 5-9 18-2 0-17-18-2-2-2-3-9 11-13 0-3-10-10-3 0-13 11-2 0-9-5-2-18zM62 53l8-1 3 1 5 5 1 8-1 3-5 5-8 1-3-1-5-5-1-8 1-3z"/><path fill="#95d0df" fill-rule="evenodd" d="M70 25l-9 0-7 2-9 5-8 8-7 15 0 5-1 1 0 5 1 1 3 0 1-10 6-12 7-7 9-5 6-2 7 0 2-2z"/><path fill="#367c8d" fill-rule="evenodd" d="M85 49l-1 0 4 5 2 6 0 7-4 9-6 6-6 3-10 1-8-3 2 2 9 4 8 0 8-3 5-4 4-6 2-10-4-12z"/><path fill="#b9e4ea" fill-rule="evenodd" d="M69 43l-10 1-8 7-3 8 0 7 3 0 0-5 3-7 8-6 7-1 1-1z"/></g></svg>
<span class="t" style="left:1732px;top:261px;color:#d75f5f">[z Services]</span>
<svg class="ic" style="left:1702px;top:283px" width="20" height="22" viewBox="0 0 20 22"><g transform="translate(0.05075 0.77075) scale(0.1615)"><path fill="#f44336" fill-rule="evenodd" d="M12 6l-4 6 0 7 2 4 40 41-40 40-2 4 0 7 2 4 6 4 7 0 4-2 41-40 40 40 4 2 7 0 4-2 4-6-1-9-41-43 40-40 2-4 0-7-2-4-6-4-7 0-4 2-41 40-40-40-4-2-7 0z"/><path fill="#cd3333" fill-rule="evenodd" d="M67 81l-4-3-43 44-3 1 6 0 4-2zM112 4l-2 1 6 0 7 8-1 7-43 44 41 41 2 4 0 6-6 6-4 1-5-2 5 3 7 0 4-2 4-6-1-9-41-42 40-41 2-4 0-7-2-4-6-4zM16 4l6 2 42 42 3-2-40-40-4-2z"/><path fill="#f6685d" fill-rule="evenodd" d="M77 78l-1 4 34 33 2 0 2-2-1-4-32-31zM22 22l-1 5 32 32 4 0 1-1-1-4-32-32zM14 16l-1 4 5 1 1-3-1-2z"/></g></svg>
<span class="t" style="left:1732px;top:283px;color:#d75f5f">[q Quit]</span>
<svg class="ic" style="left:1702px;top:327px" width="20" height="22" viewBox="0 0 20 22"><g transform="translate(0.05075 0.77075) scale(0.1615)"><path fill="#f3ab47" fill-rule="evenodd" d="M14 27l-1 9-2 2-2 0-1 2 0 76 97-23 3-4 0-2 19-40 0-2-2-1-15 3-5-1 0-22-2-2-56 9-1 1-3 0-3-3 0-6-1-1-22 3z"/><path fill="#ffe36c" fill-rule="evenodd" d="M127 45l-4-1-4 3-2-2-4 3-2-2-4 3-3-3 0 2-3 2-34 5-2 2-2 7-4 6-20 4-5-2-4 4-22 40 97-23 3-4 0-2 18-37z"/><path fill="#fff9c3" fill-rule="evenodd" d="M125 44l-15 3-5-1-4 2-34 5-4 3-2 8-3 4-23 4 0 2 8 0 1-1 16-2 4-6 1-6 5-4 53-8 2-1z"/><path fill="#fff1ae" fill-rule="evenodd" d="M46 70l-2 0-1 2-5-1-1 2-2 0 0 2 3 0 1-2 5 1 2-2zM63 66l-4 0-1 2-2 0-2 2 0 2 2 0 3-4 4 0zM124 45l-5 0-13 3-5-1-1 2-5-1-1 2-5-1-1 2-5-1-1 2-5-1-1 2-5-1-1 2-4-1-2 1 0 3-2 1 1 4 2 0 1-6 1-1 3 1 1-2 5 1 1-2 5 1 1-2 5 1 1-2 5 1 1-2 5 1 1-2 5 1 1-2 5 1 1-2 5 1 1-2 5 1z"/><path fill="#f9c964" fill-rule="evenodd" d="M26 86l-2 0-2 6-2 1-2 6-2 1-2 6-2 1-2 4 0 2 2 0 2-6 2-1 2-6 2-1 2-6 2-1 2-4zM35 72l-2 0-2 2 0 2 2 0 2-2zM63 60l-2 0-1 5 2 0z"/><path fill="#ffef99" fill-rule="evenodd" d="M65 61l-2 0-1 5 2 0z"/><path fill="#ffea86" fill-rule="evenodd" d="M62 68l-6 2 0 2 5-1zM68 55l-3 1-1 4 2 0z"/><path fill="#fce097" fill-rule="evenodd" d="M63 61l-2 0-1 5-5 2 0 2 5-1 0-2 2-1z"/></g></svg>
<span class="t" style="left:1732px;top:327px;color:#d75f5f">[<span class="a">←→</span> Files]</span>
<svg class="ic" style="left:1702px;top:349px" width="20" height="22" viewBox="0 0 20 22"><g transform="translate(0 0) scale(1)"><path d="M2.8 17V5.5H14l6.3 7.5M23.6 5v11.3H12.2L5.6 9" stroke="#d75f5f" stroke-width="1.3" fill="none"/><path d="M21.6 14.5l-3.7-1.5 2.9-2.4zM4.5 7.7l3.7 1.4-2.8 2.4z" fill="#d75f5f"/></g></svg>
<span class="t" style="left:1732px;top:349px;color:#d75f5f">[Tab Maximize]</span>
<svg class="ic" style="left:1702px;top:371px" width="20" height="22" viewBox="0 0 20 22"><g transform="translate(0.05075 0.77075) scale(0.1615)"><path fill="#8cafbf" fill-rule="evenodd" d="M11 5l-3 5 0 107 2 4 3 2 110 0 5-6 0-107-2-4-3-2-110 0z"/><path fill="#f9f9f9" fill-rule="evenodd" d="M64 15l-26 25 0 7 2 1 16 0 1 1 0 24-1 1-17 0-1 1 0 7 24 24 6 1 26-25 0-7-1-1-17 0-2-3 0-20 2-3 16 0 2-1 0-7-24-24z"/><path fill="#427687" fill-rule="evenodd" d="M126 6l-3-2-7 0 4 4 1 3 0 98-4 6-2 1-101 0-6-6 0 7 2 4 3 2 110 0 5-6 0-107z"/><path fill="#a4c8d6" fill-rule="evenodd" d="M93 76l0 5 2 0 0-5zM37 76l0 5 2 0 0-5zM41 73l0 2 17 0 0-2zM74 47l-1 2 0 24 1 2 17 0 0-2-15 0-1-1 0-22 1-3zM95 41l-2 0 0 4-2 1 0 2 2 0 2-2zM37 41l0 5 2 2 2 0 0-2-2-1 0-4zM63 15l0 2 3-1 3 1 0-2-2-1zM43 9l-17 0-6 2-3 3-2 10 0 10 2 5 3 0 2-2 3-10 6-6 9-5 2 0 2-2z"/></g></svg>
<span class="t" style="left:1732px;top:371px;color:#d75f5f">[+/- Resize]</span>
<svg class="ic" style="left:1702px;top:393px" width="20" height="22" viewBox="0 0 20 22"><g transform="translate(0.05075 0.77075) scale(0.1615)"><path fill="#fec929" fill-rule="evenodd" d="M121 5l-10-1-4 2-4 6 0 6-1 1-14-8-15-4-20 1-7 2-12 6-15 14-5 8-4 10-2 9 0 17 4 14 3 6 10 13 12 9 15 6 23 1 11-3 9-4 6-4 11-11 8-14 4-15 0-14-2-9-6-14-4-5 1-2 6 0 4-2 4-6 0-8zM112 9l5 0 5 5 0 5-4 4-10-9z"/><path fill="#ffffff" fill-rule="evenodd" d="M48 22l-9 5-2 2 0 3 2 3-3 3-3-2-3 0-2 2-5 9-3 11 0 4 4 0 2 4-2 2-4 1 0 3 3 11 4 8 3 4 2 0 3-3 2 1 2 3-3 3 0 2 4 3 10 5 8 2 4 0 1-4 3-2 3 2 0 4 4 0 11-3 9-5 2-2 0-3-2-3 3-3 3 2 3 0 2-2 6-12 2-11-4-1-2-2 0-2 2-2 4 0-4-17-5-8-4-1-3 2-3-3 2-3-1-4-8-5-14-4-3 0 0 4-2 2-2 0-2-2-1-4zM92 39l1 1-4 10-6 7-1 4 15 4-4 2-4 0-10 3 0 3 8 12-2 1-10-7-4-1-5 18-2-4-2-11-2 0-10 8-9 4-2-2 6-12 5-5 1-5-8-1-8-3 18-5-1-4-7-11 1-1 12 8 3 0 3-10 0-4 2-4 4 17 2 0 8-7z"/><path fill="#e3a712" fill-rule="evenodd" d="M57 16l-8 2-10 5-7 5-7 8-5 9-3 10 0 20 3 10 5 9 8 9 7 5 16 6 20 0 10-3 9-5 11-11 8-17 1-21-3-11-4-8-12-13-17-8zM58 20l16 0 7 2 11 6 13 14 6 15 0 16-2 7-6 11-12 12-7 4-9 3-7 0-1 1-10-1-13-5-6-4-8-8-6-10-3-9 0-8-1-1 1-1 0-8 3-9 4-7 13-13 10-5zM111 4l-6 4-2 4-1 8 9 9 8-1 4-2 3-4 1-10-6-7zM117 9l4 3 1 7-4 4-2-1-3 3-7-7 3-3-1-2 4-4z"/><path fill="#ddc3ae" fill-rule="evenodd" d="M62 106l0 5 8 0-1-6-4-1zM95 92l-2 0-1 6 2 0zM89 85l-3-5-2-1-3-7-2 0 1 4 4 4 1 3-1 1-7-3-4-4-7-1-3 3-3 0-15 11-4 1-1-2-2 0 2 5-2 1-2 5 3-1 2-5 10-4 9-7 2 1 3 15 2 0 1-8 4-12 2 2 2 0 1 2 4 1 1 2 2 0 3 3 2 0zM107 61l-2 2 0 4 2 2 5 0 0-8zM20 61l0 8 5 0 2-3-1-4zM42 42l1 4 2 1 0 2 2 1 1 4 2 1 0 2 2 2-4 2-16 3 0 2 15 3 3 3 2 0 4-6 0-4-2-2 0-2-2-1 0-2-2-1-3-7-2-1 3-1 1 2 7 3 1 2 2 0 0-2-7-3-1-2-2 0-3-3zM86 40l-6 2 0 2 6-2zM40 34l-2 0-2 3-3 0 0 2 6-1zM94 32l-2 0 0 5-3 1 2 5-3 6-6 7-3 7-3 3 1 4 7 0 16-4 0-2-4 0-13-4 7-9 4-11 5-1 0-2-5-1zM65 31l-4 16 0 7 3 2 0 3 3 0-1-3 6-4 1-3-3-1-3-17zM62 19l0 5 2 2 4 0 2-2 0-5z"/><path fill="#b2937e" fill-rule="evenodd" d="M94 92l-1 1 0 6 4 1 4-4 0-2-2-2zM42 91l-2 0-1 2-1-1-5 0-2 2 0 2 4 4 2 0 2-2 0-4 3-1zM93 40l-2 0 0 2-3 6-5 6 0 2-8 8-3-3 0-2-2 0-3-3 0-2-3 0-20-13-2 0 2 6 11 17-1 3 2 0 7-8 6 0 3 3 0 6-7 7-6 4-1 3 6-1 4-4 16 10 6 2 0-2-9-13-3-7 4-5 1-5 6-6zM94 30l-2 3 0 3 2 0 1 3 5-1 1-3-2 0-2 2-3-1 0-2 2-2 0-2zM37 30l-2 0-4 4 1 4 6 0 1-1 0-5z"/><path fill="#fdee94" fill-rule="evenodd" d="M49 107l0 2 5 1 0-2zM85 106l-7 2 0 2 7-2zM21 77l1 5 2 0-1-5zM111 76l-2 0-1 5-4 7 0 2-3 2 0 2 2 0 1-3 2-1 3-6zM108 49l1 5 2 0-1-5zM25 46l-2 0-2 7 2 0zM31 36l-3 1-3 7 2 0 1-4 3-2zM100 35l0 2 5 5 1 4 2 0 0-2-3-3 0-2-2-1 0-2zM85 23l0 2 4 1 5 5 2 0-1-3-2 0-4-4zM77 20l0 2 5 1 0-2zM55 20l-8 2-6 3-1 2-3 1 0 2 2 0 2-3 14-5zM85 12l-9-3-17-1-17 4-12 7-11 12-5 10-3 12 0 11 2 0 1-2 0-4 3-9 5-10 5-7 9-9 13-7 7-2 7 0 1-1 21 1z"/><path fill="#f34639" fill-rule="evenodd" d="M97 30l-2 0-2 2 0 5-12 5-18 14 0 2 4 0 4 3 2 3 0 4 3-1 11-14 5-9 1-5 1-1 5 0 2-2 0-2z"/><path fill="#337a8b" fill-rule="evenodd" d="M69 72l-3 1-3-1-5-6 1-4-2 0-15 19-4 9 0 3 6-1 8-4 17-14z"/><path fill="#f1e8dc" fill-rule="evenodd" d="M82 107l-5 1 0 2 5-1zM61 111l2 0 0-3 2-2 5 2 0-3-7-1-2 3zM43 104l0 2 6 2 0-2zM96 99l-2 0-5 5-4 1 0 2 2 0 3-3 2 0 1-2 2 0zM92 93l0 2 2 0 1-2 2 0 2 2 3 0 0-2-4-2-4 0zM90 86l-4 1-4-4-4-1-4-4-4-1-4 17-3-12-5 0-2 3-2 0-11 7-10-1 0 2 3 0 2 2 0 3 2 0 0-2 2-2 10-4 5-5 3-1 2 2 2 12 4-1 1-8 3-9 2 0 1 2 7 3 1 2 2 0 3 3 3 0zM47 76l-3 1 0 2-2 1-3 8 2 0 3-8 3-2zM21 76l2 8 2 4 2 0-4-12zM105 66l1 3 3 1 1 2 2 0 0-4-3 0-2-2zM26 61l-3 0 2 5-2 2-3 0 0 6 2 0 0-3 5-3zM24 49l-2 0-1 5 2 0zM107 47l2 8 2 0-2-8zM93 37l-7 2 0 2 5-2 1 4-5 8 0 2-6 6 0 3 4 0 9 3-4 2-12 2 0 3 2 1 0 2 2 0 0-2-2-1 3-2 16-3-1-4-12-2-2-2 3-3 0-2 3-2 4-9 0-5zM68 33l-4-1-3 16-2 3-1-2-7-3-4-4-6-2 1 5 4 4 0 2 3 3 0 2 2 1 0 2-9 3-8 1-1 4 15 3 1 3 2 0 1-4-15-4 17-4-1-4-2-1-3-7-4-4 3-1 1 2 7 3 4 4 3 0 0-4 4-12 3 9 0 4 5 0 1-3-3 1-2-3zM36 29l0 3 2 2-2 5 2 0 2-2 0-5-2-3zM59 19l0 2 2 1 1 3 3 1 0-2-2-2 0-3z"/><path fill="#92cedd" fill-rule="evenodd" d="M61 58l-4 5 1 7 5 4 7-1 3-3 0-9-3-3z"/></g></svg>
<span class="t" style="left:1732px;top:393px;color:#d75f5f">[<span class="a v">↑↓</span> Select]</span>
</section>
<section id="modal" aria-label="System services">
<i style="left:252px;top:85px;width:1400px;height:704px;background:#262626"></i>
<i style="left:256px;top:95px;width:376px;height:2px;background:#ffd7af"></i>
<i style="left:1282px;top:95px;width:366px;height:2px;background:#ffd7af"></i>
<i style="left:256px;top:95px;width:2px;height:684px;background:#ffd7af"></i>
<i style="left:1646px;top:95px;width:2px;height:684px;background:#ffd7af"></i>
<i style="left:256px;top:777px;width:1392px;height:2px;background:#ffd7af"></i>
<svg class="ic" style="left:642px;top:85px" width="20" height="22" viewBox="0 0 20 22"><g transform="translate(0.05075 0.77075) scale(0.1615)"><path fill="#f3ab47" fill-rule="evenodd" d="M14 27l-1 9-2 2-2 0-1 2 0 76 97-23 3-4 0-2 19-40 0-2-2-1-15 3-5-1 0-22-2-2-56 9-1 1-3 0-3-3 0-6-1-1-22 3z"/><path fill="#ffe36c" fill-rule="evenodd" d="M127 45l-4-1-4 3-2-2-4 3-2-2-4 3-3-3 0 2-3 2-34 5-2 2-2 7-4 6-20 4-5-2-4 4-22 40 97-23 3-4 0-2 18-37z"/><path fill="#fff9c3" fill-rule="evenodd" d="M125 44l-15 3-5-1-4 2-34 5-4 3-2 8-3 4-23 4 0 2 8 0 1-1 16-2 4-6 1-6 5-4 53-8 2-1z"/><path fill="#fff1ae" fill-rule="evenodd" d="M46 70l-2 0-1 2-5-1-1 2-2 0 0 2 3 0 1-2 5 1 2-2zM63 66l-4 0-1 2-2 0-2 2 0 2 2 0 3-4 4 0zM124 45l-5 0-13 3-5-1-1 2-5-1-1 2-5-1-1 2-5-1-1 2-5-1-1 2-5-1-1 2-4-1-2 1 0 3-2 1 1 4 2 0 1-6 1-1 3 1 1-2 5 1 1-2 5 1 1-2 5 1 1-2 5 1 1-2 5 1 1-2 5 1 1-2 5 1 1-2 5 1 1-2 5 1z"/><path fill="#f9c964" fill-rule="evenodd" d="M26 86l-2 0-2 6-2 1-2 6-2 1-2 6-2 1-2 4 0 2 2 0 2-6 2-1 2-6 2-1 2-6 2-1 2-4zM35 72l-2 0-2 2 0 2 2 0 2-2zM63 60l-2 0-1 5 2 0z"/><path fill="#ffef99" fill-rule="evenodd" d="M65 61l-2 0-1 5 2 0z"/><path fill="#ffea86" fill-rule="evenodd" d="M62 68l-6 2 0 2 5-1zM68 55l-3 1-1 4 2 0z"/><path fill="#fce097" fill-rule="evenodd" d="M63 61l-2 0-1 5-5 2 0 2 5-1 0-2 2-1z"/></g></svg>
<span class="t b" style="left:672px;top:85px;color:#ffaf00">System Services: All Unit Files (Installed/Enabled/Disabled)</span>
<span class="t b" style="left:292px;top:107px;color:#ffaf00">UNIT FILE</span>
<span class="t b" style="left:722px;top:107px;color:#ffaf00">STATE</span>
<span class="t b" style="left:862px;top:107px;color:#ffaf00">PRESET</span>
<i style="left:262px;top:139px;width:1380px;height:2px;background:#a6a6a6"></i>
<i style="left:262px;top:151px;width:1380px;height:22px;background:#d75f5f"></i>
<svg class="ic" style="left:262px;top:151px" width="20" height="22" viewBox="0 0 20 22"><g transform="translate(0.05075 0.77075) scale(0.1615)"><path fill="#7cb342" fill-rule="evenodd" d="M11 5l-3 5 0 107 2 4 3 2 110 0 5-6 0-107-2-4-3-2-110 0z"/><path fill="#faf8f7" fill-rule="evenodd" d="M110 20l-10-1-4 4-46 58-10-30-2-3-4-2-5 0-5 4-1 7 15 45 3 5 2 1 9-1 60-75 1-7z"/><path fill="#689f38" fill-rule="evenodd" d="M126 6l-3-2-6 0 5 5 0 102-4 5-2 1-103 0-5-5 0 5 2 4 3 2 110 0 5-6 0-107z"/><path fill="#a4ca7a" fill-rule="evenodd" d="M42 10l-16 0-5 2-3 3-2 9 0 10 2 4 2 0 5-13 5-5 9-5 2 0 2-2z"/></g></svg>
<span class="t b s" style="left:292px;top:151px;color:#262626">ModemManager.service</span>
<span class="t b s" style="left:732px;top:151px;color:#262626">enabled</span>
<span class="t b s" style="left:872px;top:151px;color:#262626">enabled</span>
<svg class="ic" style="left:262px;top:173px" width="20" height="22" viewBox="0 0 20 22"><g transform="translate(0.05075 0.77075) scale(0.1615)"><path fill="#7cb342" fill-rule="evenodd" d="M11 5l-3 5 0 107 2 4 3 2 110 0 5-6 0-107-2-4-3-2-110 0z"/><path fill="#faf8f7" fill-rule="evenodd" d="M110 20l-10-1-4 4-46 58-10-30-2-3-4-2-5 0-5 4-1 7 15 45 3 5 2 1 9-1 60-75 1-7z"/><path fill="#689f38" fill-rule="evenodd" d="M126 6l-3-2-6 0 5 5 0 102-4 5-2 1-103 0-5-5 0 5 2 4 3 2 110 0 5-6 0-107z"/><path fill="#a4ca7a" fill-rule="evenodd" d="M42 10l-16 0-5 2-3 3-2 9 0 10 2 4 2 0 5-13 5-5 9-5 2 0 2-2z"/></g></svg>
<span class="t" style="left:292px;top:173px;color:#ffd7af">NetworkManager-dispatcher.service</span>
<span class="t" style="left:732px;top:173px;color:#ffd7af">enabled</span>
<span class="t" style="left:872px;top:173px;color:#ffd7af">enabled</span>
<svg class="ic" style="left:262px;top:195px" width="20" height="22" viewBox="0 0 20 22"><g transform="translate(0.05075 0.77075) scale(0.1615)"><path fill="#7cb342" fill-rule="evenodd" d="M11 5l-3 5 0 107 2 4 3 2 110 0 5-6 0-107-2-4-3-2-110 0z"/><path fill="#faf8f7" fill-rule="evenodd" d="M110 20l-10-1-4 4-46 58-10-30-2-3-4-2-5 0-5 4-1 7 15 45 3 5 2 1 9-1 60-75 1-7z"/><path fill="#689f38" fill-rule="evenodd" d="M126 6l-3-2-6 0 5 5 0 102-4 5-2 1-103 0-5-5 0 5 2 4 3 2 110 0 5-6 0-107z"/><path fill="#a4ca7a" fill-rule="evenodd" d="M42 10l-16 0-5 2-3 3-2 9 0 10 2 4 2 0 5-13 5-5 9-5 2 0 2-2z"/></g></svg>
<span class="t" style="left:292px;top:195px;color:#ffd7af">NetworkManager-wait-online.service</span>
<span class="t" style="left:732px;top:195px;color:#ffd7af">enabled</span>
<span class="t" style="left:872px;top:195px;color:#ffd7af">enabled</span>
<svg class="ic" style="left:262px;top:217px" width="20" height="22" viewBox="0 0 20 22"><g transform="translate(0.05075 0.77075) scale(0.1615)"><path fill="#7cb342" fill-rule="evenodd" d="M11 5l-3 5 0 107 2 4 3 2 110 0 5-6 0-107-2-4-3-2-110 0z"/><path fill="#faf8f7" fill-rule="evenodd" d="M110 20l-10-1-4 4-46 58-10-30-2-3-4-2-5 0-5 4-1 7 15 45 3 5 2 1 9-1 60-75 1-7z"/><path fill="#689f38" fill-rule="evenodd" d="M126 6l-3-2-6 0 5 5 0 102-4 5-2 1-103 0-5-5 0 5 2 4 3 2 110 0 5-6 0-107z"/><path fill="#a4ca7a" fill-rule="evenodd" d="M42 10l-16 0-5 2-3 3-2 9 0 10 2 4 2 0 5-13 5-5 9-5 2 0 2-2z"/></g></svg>
<span class="t" style="left:292px;top:217px;color:#ffd7af">NetworkManager.service</span>
<span class="t" style="left:732px;top:217px;color:#ffd7af">enabled</span>
<span class="t" style="left:872px;top:217px;color:#ffd7af">enabled</span>
<svg class="ic" style="left:262px;top:239px" width="20" height="22" viewBox="0 0 20 22"><g transform="translate(0.05075 0.77075) scale(0.1615)"><path fill="#7cb342" fill-rule="evenodd" d="M11 5l-3 5 0 107 2 4 3 2 110 0 5-6 0-107-2-4-3-2-110 0z"/><path fill="#faf8f7" fill-rule="evenodd" d="M110 20l-10-1-4 4-46 58-10-30-2-3-4-2-5 0-5 4-1 7 15 45 3 5 2 1 9-1 60-75 1-7z"/><path fill="#689f38" fill-rule="evenodd" d="M126 6l-3-2-6 0 5 5 0 102-4 5-2 1-103 0-5-5 0 5 2 4 3 2 110 0 5-6 0-107z"/><path fill="#a4ca7a" fill-rule="evenodd" d="M42 10l-16 0-5 2-3 3-2 9 0 10 2 4 2 0 5-13 5-5 9-5 2 0 2-2z"/></g></svg>
<span class="t" style="left:292px;top:239px;color:#ffd7af">accounts-daemon.service</span>
<span class="t" style="left:732px;top:239px;color:#ffd7af">enabled</span>
<span class="t" style="left:872px;top:239px;color:#ffd7af">enabled</span>
<svg class="ic" style="left:262px;top:261px" width="20" height="22" viewBox="0 0 20 22"><g transform="translate(0.05075 0.77075) scale(0.1615)"><path fill="#f44336" fill-rule="evenodd" d="M59 4l-9 2-12 5-11 8-8 9-6 10-4 11-1 23 2 9 5 12 8 11 9 8 6 4 12 5 9 2 17 0 9-2 12-5 11-8 8-9 4-6 5-12 2-9 0-17-2-9-5-12-8-11-9-8-6-4-12-5-9-2zM26 35l3-2 5 4 65 65-6 5-8 4-13 3-9 0-10-2-17-9-11-12-5-10-3-13 0-9 2-10zM39 22l14-7 10-2 9 0 13 3 10 5 12 11 9 17 2 10 0 9-3 13-4 8-5 6-70-70z"/><path fill="#ce3433" fill-rule="evenodd" d="M36 25l-2 2 71 70 1-2zM59 4l-17 5-13 9 5-4 10-5 12-3 21 1 11 4 11 7 9 9 5 7 5 11 2 9 0 17-3 12-8 14-11 11-14 8-12 3-17 0-9-2-14-7-13-12-6-9 10 15 15 12 9 4 12 3 17 0 9-2 12-5 11-8 8-9 4-6 5-12 2-9 0-17-2-9-5-12-8-11-9-8-6-4-12-5-9-2z"/><path fill="#fe867c" fill-rule="evenodd" d="M56 11l-3-2-9 3-11 6-12 12-5 10 2 1 10-13 8-7 8-5 11-3z"/></g></svg>
<span class="t" style="left:292px;top:261px;color:#ffd7af">acpid.service</span>
<span class="t" style="left:732px;top:261px;color:#ffd7af">disabled</span>
<span class="t" style="left:872px;top:261px;color:#ffd7af">enabled</span>
<svg class="ic" style="left:262px;top:283px" width="20" height="22" viewBox="0 0 20 22"><g transform="translate(0.05075 0.77075) scale(0.1615)"><path fill="#82aec0" fill-rule="evenodd" d="M59 4l-2 18-2 2-9 3-13-11-3 0-10 10 0 3 11 13 0 2-5 9-18 2 0 17 18 2 2 2 3 9-11 13 0 3 10 10 3 0 13-11 2 0 9 5 2 18 17 0 2-18 2-2 9-3 13 11 3 0 10-10 0-3-11-13 0-2 5-9 18-2 0-17-18-2-2-2-3-9 11-13 0-3-10-10-3 0-13 11-2 0-9-5-2-18zM62 53l8-1 3 1 5 5 1 8-1 3-5 5-8 1-3-1-5-5-1-8 1-3z"/><path fill="#95d0df" fill-rule="evenodd" d="M70 25l-9 0-7 2-9 5-8 8-7 15 0 5-1 1 0 5 1 1 3 0 1-10 6-12 7-7 9-5 6-2 7 0 2-2z"/><path fill="#367c8d" fill-rule="evenodd" d="M85 49l-1 0 4 5 2 6 0 7-4 9-6 6-6 3-10 1-8-3 2 2 9 4 8 0 8-3 5-4 4-6 2-10-4-12z"/><path fill="#b9e4ea" fill-rule="evenodd" d="M69 43l-10 1-8 7-3 8 0 7 3 0 0-5 3-7 8-6 7-1 1-1z"/></g></svg>
<span class="t" style="left:292px;top:283px;color:#ffd7af">alsa-restore.service</span>
<span class="t" style="left:732px;top:283px;color:#ffd7af">static</span>
<span class="t" style="left:872px;top:283px;color:#ffd7af">-</span>
<svg class="ic" style="left:262px;top:305px" width="20" height="22" viewBox="0 0 20 22"><g transform="translate(0.05075 0.77075) scale(0.1615)"><path fill="#82aec0" fill-rule="evenodd" d="M59 4l-2 18-2 2-9 3-13-11-3 0-10 10 0 3 11 13 0 2-5 9-18 2 0 17 18 2 2 2 3 9-11 13 0 3 10 10 3 0 13-11 2 0 9 5 2 18 17 0 2-18 2-2 9-3 13 11 3 0 10-10 0-3-11-13 0-2 5-9 18-2 0-17-18-2-2-2-3-9 11-13 0-3-10-10-3 0-13 11-2 0-9-5-2-18zM62 53l8-1 3 1 5 5 1 8-1 3-5 5-8 1-3-1-5-5-1-8 1-3z"/><path fill="#95d0df" fill-rule="evenodd" d="M70 25l-9 0-7 2-9 5-8 8-7 15 0 5-1 1 0 5 1 1 3 0 1-10 6-12 7-7 9-5 6-2 7 0 2-2z"/><path fill="#367c8d" fill-rule="evenodd" d="M85 49l-1 0 4 5 2 6 0 7-4 9-6 6-6 3-10 1-8-3 2 2 9 4 8 0 8-3 5-4 4-6 2-10-4-12z"/><path fill="#b9e4ea" fill-rule="evenodd" d="M69 43l-10 1-8 7-3 8 0 7 3 0 0-5 3-7 8-6 7-1 1-1z"/></g></svg>
<span class="t" style="left:292px;top:305px;color:#ffd7af">alsa-state.service</span>
<span class="t" style="left:732px;top:305px;color:#ffd7af">static</span>
<span class="t" style="left:872px;top:305px;color:#ffd7af">-</span>
<svg class="ic" style="left:262px;top:327px" width="20" height="22" viewBox="0 0 20 22"><g transform="translate(0.05075 0.77075) scale(0.1615)"><path fill="#ffcc32" fill-rule="evenodd" d="M65 4l-4 3-53 106 0 6 4 4 111 0 4-4 1-3-1-4-52-104-4-4z"/><path fill="#f2a600" fill-rule="evenodd" d="M65 4l-4 3-3 6 7-2 5 4 50 100 0 2-4 6 7 0 4-4 1-3-1-4-52-104-4-4z"/><path fill="#3a3a39" fill-rule="evenodd" d="M65 33l-5 4 1 32 1 3 12 0 2-34-3-4z"/><path fill="#fff170" fill-rule="evenodd" d="M33 71l-2 2 1 5 6 0 0-6zM60 21l-3 0-22 42 0 5 1 1 6-1 8-17 2-2 10-20 0-6z"/><path fill="#2b2b2b" fill-rule="evenodd" d="M66 97l-4 3 0 7 4 3 4 0 4-3 0-7-4-3zM62 71l1 20 3 3 4 0 3-3 1-20z"/><path fill="#ffe358" fill-rule="evenodd" d="M61 21l-6 2-21 41 0 4 3 2-1 1 1 5-3 1-1-1 1-5-2 0-1 1 0 5 2 2 4 0 2-2-1-6 5-4 20-39 0-4zM59 23l2 2 0 2-20 39-3 2-2-3 20-39z"/><path fill="#fab918" fill-rule="evenodd" d="M59 11l0 2 7-1 4 4 49 98-1 6-4 2 0 1 4 0 3-4 0-6-50-100-4-3z"/><path fill="#9a8033" fill-rule="evenodd" d="M72 99l1 3-1 6 2 0 1-6-1-3zM61 71l0 5 2 0 0-5zM60 57l0 5 2 0 0-5zM74 53l0 5 2 0 0-5zM59 43l0 5 2 0 0-5zM75 39l0 5 2 0 0-5zM70 33l0 2 5 2-1-3zM66 33l-4 1-2 2-1 4 2 0 1-3 4-2z"/><path fill="#695b31" fill-rule="evenodd" d="M62 99l-1 7 1 2 2 0-1-3 1-6zM62 82l0 5 2 0 0-5zM72 78l0 5 2 0 0-5zM73 64l0 5 2 0 0-5zM59 39l0 5 2 0 0-5z"/><path fill="#cba531" fill-rule="evenodd" d="M72 108l-5 1 0 2 5-1zM73 101l0 5 2 0 0-5zM62 89l1 4 3 1-2-5z"/></g></svg>
<span class="t" style="left:292px;top:327px;color:#ffd7af">alsa-utils.service</span>
<span class="t" style="left:732px;top:327px;color:#ffd7af">masked</span>
<span class="t" style="left:872px;top:327px;color:#ffd7af">enabled</span>
<svg class="ic" style="left:262px;top:349px" width="20" height="22" viewBox="0 0 20 22"><g transform="translate(0.05075 0.77075) scale(0.1615)"><path fill="#7cb342" fill-rule="evenodd" d="M11 5l-3 5 0 107 2 4 3 2 110 0 5-6 0-107-2-4-3-2-110 0z"/><path fill="#faf8f7" fill-rule="evenodd" d="M110 20l-10-1-4 4-46 58-10-30-2-3-4-2-5 0-5 4-1 7 15 45 3 5 2 1 9-1 60-75 1-7z"/><path fill="#689f38" fill-rule="evenodd" d="M126 6l-3-2-6 0 5 5 0 102-4 5-2 1-103 0-5-5 0 5 2 4 3 2 110 0 5-6 0-107z"/><path fill="#a4ca7a" fill-rule="evenodd" d="M42 10l-16 0-5 2-3 3-2 9 0 10 2 4 2 0 5-13 5-5 9-5 2 0 2-2z"/></g></svg>
<span class="t" style="left:292px;top:349px;color:#ffd7af">anacron.service</span>
<span class="t" style="left:732px;top:349px;color:#ffd7af">enabled</span>
<span class="t" style="left:872px;top:349px;color:#ffd7af">enabled</span>
<svg class="ic" style="left:262px;top:371px" width="20" height="22" viewBox="0 0 20 22"><g transform="translate(0.05075 0.77075) scale(0.1615)"><path fill="#7cb342" fill-rule="evenodd" d="M11 5l-3 5 0 107 2 4 3 2 110 0 5-6 0-107-2-4-3-2-110 0z"/><path fill="#faf8f7" fill-rule="evenodd" d="M110 20l-10-1-4 4-46 58-10-30-2-3-4-2-5 0-5 4-1 7 15 45 3 5 2 1 9-1 60-75 1-7z"/><path fill="#689f38" fill-rule="evenodd" d="M126 6l-3-2-6 0 5 5 0 102-4 5-2 1-103 0-5-5 0 5 2 4 3 2 110 0 5-6 0-107z"/><path fill="#a4ca7a" fill-rule="evenodd" d="M42 10l-16 0-5 2-3 3-2 9 0 10 2 4 2 0 5-13 5-5 9-5 2 0 2-2z"/></g></svg>
<span class="t" style="left:292px;top:371px;color:#ffd7af">apparmor.service</span>
<span class="t" style="left:732px;top:371px;color:#ffd7af">enabled</span>
<span class="t" style="left:872px;top:371px;color:#ffd7af">enabled</span>
<svg class="ic" style="left:262px;top:393px" width="20" height="22" viewBox="0 0 20 22"><g transform="translate(0.05075 0.77075) scale(0.1615)"><path fill="#82aec0" fill-rule="evenodd" d="M59 4l-2 18-2 2-9 3-13-11-3 0-10 10 0 3 11 13 0 2-5 9-18 2 0 17 18 2 2 2 3 9-11 13 0 3 10 10 3 0 13-11 2 0 9 5 2 18 17 0 2-18 2-2 9-3 13 11 3 0 10-10 0-3-11-13 0-2 5-9 18-2 0-17-18-2-2-2-3-9 11-13 0-3-10-10-3 0-13 11-2 0-9-5-2-18zM62 53l8-1 3 1 5 5 1 8-1 3-5 5-8 1-3-1-5-5-1-8 1-3z"/><path fill="#95d0df" fill-rule="evenodd" d="M70 25l-9 0-7 2-9 5-8 8-7 15 0 5-1 1 0 5 1 1 3 0 1-10 6-12 7-7 9-5 6-2 7 0 2-2z"/><path fill="#367c8d" fill-rule="evenodd" d="M85 49l-1 0 4 5 2 6 0 7-4 9-6 6-6 3-10 1-8-3 2 2 9 4 8 0 8-3 5-4 4-6 2-10-4-12z"/><path fill="#b9e4ea" fill-rule="evenodd" d="M69 43l-10 1-8 7-3 8 0 7 3 0 0-5 3-7 8-6 7-1 1-1z"/></g></svg>
<span class="t" style="left:292px;top:393px;color:#ffd7af">apport-autoreport.service</span>
<span class="t" style="left:732px;top:393px;color:#ffd7af">static</span>
<span class="t" style="left:872px;top:393px;color:#ffd7af">-</span>
<svg class="ic" style="left:262px;top:415px" width="20" height="22" viewBox="0 0 20 22"><g transform="translate(0.05075 0.77075) scale(0.1615)"><path fill="#82aec0" fill-rule="evenodd" d="M59 4l-2 18-2 2-9 3-13-11-3 0-10 10 0 3 11 13 0 2-5 9-18 2 0 17 18 2 2 2 3 9-11 13 0 3 10 10 3 0 13-11 2 0 9 5 2 18 17 0 2-18 2-2 9-3 13 11 3 0 10-10 0-3-11-13 0-2 5-9 18-2 0-17-18-2-2-2-3-9 11-13 0-3-10-10-3 0-13 11-2 0-9-5-2-18zM62 53l8-1 3 1 5 5 1 8-1 3-5 5-8 1-3-1-5-5-1-8 1-3z"/><path fill="#95d0df" fill-rule="evenodd" d="M70 25l-9 0-7 2-9 5-8 8-7 15 0 5-1 1 0 5 1 1 3 0 1-10 6-12 7-7 9-5 6-2 7 0 2-2z"/><path fill="#367c8d" fill-rule="evenodd" d="M85 49l-1 0 4 5 2 6 0 7-4 9-6 6-6 3-10 1-8-3 2 2 9 4 8 0 8-3 5-4 4-6 2-10-4-12z"/><path fill="#b9e4ea" fill-rule="evenodd" d="M69 43l-10 1-8 7-3 8 0 7 3 0 0-5 3-7 8-6 7-1 1-1z"/></g></svg>
<span class="t" style="left:292px;top:415px;color:#ffd7af">apport-coredump-hook@.service</span>
<span class="t" style="left:732px;top:415px;color:#ffd7af">static</span>
<span class="t" style="left:872px;top:415px;color:#ffd7af">-</span>
<svg class="ic" style="left:262px;top:437px" width="20" height="22" viewBox="0 0 20 22"><g transform="translate(0.05075 0.77075) scale(0.1615)"><path fill="#82aec0" fill-rule="evenodd" d="M59 4l-2 18-2 2-9 3-13-11-3 0-10 10 0 3 11 13 0 2-5 9-18 2 0 17 18 2 2 2 3 9-11 13 0 3 10 10 3 0 13-11 2 0 9 5 2 18 17 0 2-18 2-2 9-3 13 11 3 0 10-10 0-3-11-13 0-2 5-9 18-2 0-17-18-2-2-2-3-9 11-13 0-3-10-10-3 0-13 11-2 0-9-5-2-18zM62 53l8-1 3 1 5 5 1 8-1 3-5 5-8 1-3-1-5-5-1-8 1-3z"/><path fill="#95d0df" fill-rule="evenodd" d="M70 25l-9 0-7 2-9 5-8 8-7 15 0 5-1 1 0 5 1 1 3 0 1-10 6-12 7-7 9-5 6-2 7 0 2-2z"/><path fill="#367c8d" fill-rule="evenodd" d="M85 49l-1 0 4 5 2 6 0 7-4 9-6 6-6 3-10 1-8-3 2 2 9 4 8 0 8-3 5-4 4-6 2-10-4-12z"/><path fill="#b9e4ea" fill-rule="evenodd" d="M69 43l-10 1-8 7-3 8 0 7 3 0 0-5 3-7 8-6 7-1 1-1z"/></g></svg>
<span class="t" style="left:292px;top:437px;color:#ffd7af">apport-forward@.service</span>
<span class="t" style="left:732px;top:437px;color:#ffd7af">static</span>
<span class="t" style="left:872px;top:437px;color:#ffd7af">-</span>
<svg class="ic" style="left:262px;top:459px" width="20" height="22" viewBox="0 0 20 22"><g transform="translate(0.05075 0.77075) scale(0.1615)"><path fill="#7cb342" fill-rule="evenodd" d="M11 5l-3 5 0 107 2 4 3 2 110 0 5-6 0-107-2-4-3-2-110 0z"/><path fill="#faf8f7" fill-rule="evenodd" d="M110 20l-10-1-4 4-46 58-10-30-2-3-4-2-5 0-5 4-1 7 15 45 3 5 2 1 9-1 60-75 1-7z"/><path fill="#689f38" fill-rule="evenodd" d="M126 6l-3-2-6 0 5 5 0 102-4 5-2 1-103 0-5-5 0 5 2 4 3 2 110 0 5-6 0-107z"/><path fill="#a4ca7a" fill-rule="evenodd" d="M42 10l-16 0-5 2-3 3-2 9 0 10 2 4 2 0 5-13 5-5 9-5 2 0 2-2z"/></g></svg>
<span class="t" style="left:292px;top:459px;color:#ffd7af">apport.service</span>
<span class="t" style="left:732px;top:459px;color:#ffd7af">enabled</span>
<span class="t" style="left:872px;top:459px;color:#ffd7af">enabled</span>
<svg class="ic" style="left:262px;top:481px" width="20" height="22" viewBox="0 0 20 22"><g transform="translate(0.05075 0.77075) scale(0.1615)"><path fill="#82aec0" fill-rule="evenodd" d="M59 4l-2 18-2 2-9 3-13-11-3 0-10 10 0 3 11 13 0 2-5 9-18 2 0 17 18 2 2 2 3 9-11 13 0 3 10 10 3 0 13-11 2 0 9 5 2 18 17 0 2-18 2-2 9-3 13 11 3 0 10-10 0-3-11-13 0-2 5-9 18-2 0-17-18-2-2-2-3-9 11-13 0-3-10-10-3 0-13 11-2 0-9-5-2-18zM62 53l8-1 3 1 5 5 1 8-1 3-5 5-8 1-3-1-5-5-1-8 1-3z"/><path fill="#95d0df" fill-rule="evenodd" d="M70 25l-9 0-7 2-9 5-8 8-7 15 0 5-1 1 0 5 1 1 3 0 1-10 6-12 7-7 9-5 6-2 7 0 2-2z"/><path fill="#367c8d" fill-rule="evenodd" d="M85 49l-1 0 4 5 2 6 0 7-4 9-6 6-6 3-10 1-8-3 2 2 9 4 8 0 8-3 5-4 4-6 2-10-4-12z"/><path fill="#b9e4ea" fill-rule="evenodd" d="M69 43l-10 1-8 7-3 8 0 7 3 0 0-5 3-7 8-6 7-1 1-1z"/></g></svg>
<span class="t" style="left:292px;top:481px;color:#ffd7af">apt-daily-upgrade.service</span>
<span class="t" style="left:732px;top:481px;color:#ffd7af">static</span>
<span class="t" style="left:872px;top:481px;color:#ffd7af">-</span>
<svg class="ic" style="left:262px;top:503px" width="20" height="22" viewBox="0 0 20 22"><g transform="translate(0.05075 0.77075) scale(0.1615)"><path fill="#82aec0" fill-rule="evenodd" d="M59 4l-2 18-2 2-9 3-13-11-3 0-10 10 0 3 11 13 0 2-5 9-18 2 0 17 18 2 2 2 3 9-11 13 0 3 10 10 3 0 13-11 2 0 9 5 2 18 17 0 2-18 2-2 9-3 13 11 3 0 10-10 0-3-11-13 0-2 5-9 18-2 0-17-18-2-2-2-3-9 11-13 0-3-10-10-3 0-13 11-2 0-9-5-2-18zM62 53l8-1 3 1 5 5 1 8-1 3-5 5-8 1-3-1-5-5-1-8 1-3z"/><path fill="#95d0df" fill-rule="evenodd" d="M70 25l-9 0-7 2-9 5-8 8-7 15 0 5-1 1 0 5 1 1 3 0 1-10 6-12 7-7 9-5 6-2 7 0 2-2z"/><path fill="#367c8d" fill-rule="evenodd" d="M85 49l-1 0 4 5 2 6 0 7-4 9-6 6-6 3-10 1-8-3 2 2 9 4 8 0 8-3 5-4 4-6 2-10-4-12z"/><path fill="#b9e4ea" fill-rule="evenodd" d="M69 43l-10 1-8 7-3 8 0 7 3 0 0-5 3-7 8-6 7-1 1-1z"/></g></svg>
<span class="t" style="left:292px;top:503px;color:#ffd7af">apt-daily.service</span>
<span class="t" style="left:732px;top:503px;color:#ffd7af">static</span>
<span class="t" style="left:872px;top:503px;color:#ffd7af">-</span>
<svg class="ic" style="left:262px;top:525px" width="20" height="22" viewBox="0 0 20 22"><g transform="translate(0.05075 0.77075) scale(0.1615)"><path fill="#82aec0" fill-rule="evenodd" d="M59 4l-2 18-2 2-9 3-13-11-3 0-10 10 0 3 11 13 0 2-5 9-18 2 0 17 18 2 2 2 3 9-11 13 0 3 10 10 3 0 13-11 2 0 9 5 2 18 17 0 2-18 2-2 9-3 13 11 3 0 10-10 0-3-11-13 0-2 5-9 18-2 0-17-18-2-2-2-3-9 11-13 0-3-10-10-3 0-13 11-2 0-9-5-2-18zM62 53l8-1 3 1 5 5 1 8-1 3-5 5-8 1-3-1-5-5-1-8 1-3z"/><path fill="#95d0df" fill-rule="evenodd" d="M70 25l-9 0-7 2-9 5-8 8-7 15 0 5-1 1 0 5 1 1 3 0 1-10 6-12 7-7 9-5 6-2 7 0 2-2z"/><path fill="#367c8d" fill-rule="evenodd" d="M85 49l-1 0 4 5 2 6 0 7-4 9-6 6-6 3-10 1-8-3 2 2 9 4 8 0 8-3 5-4 4-6 2-10-4-12z"/><path fill="#b9e4ea" fill-rule="evenodd" d="M69 43l-10 1-8 7-3 8 0 7 3 0 0-5 3-7 8-6 7-1 1-1z"/></g></svg>
<span class="t" style="left:292px;top:525px;color:#ffd7af">apt-news.service</span>
<span class="t" style="left:732px;top:525px;color:#ffd7af">static</span>
<span class="t" style="left:872px;top:525px;color:#ffd7af">-</span>
<svg class="ic" style="left:262px;top:547px" width="20" height="22" viewBox="0 0 20 22"><g transform="translate(0.05075 0.77075) scale(0.1615)"><path fill="#82aec0" fill-rule="evenodd" d="M59 4l-2 18-2 2-9 3-13-11-3 0-10 10 0 3 11 13 0 2-5 9-18 2 0 17 18 2 2 2 3 9-11 13 0 3 10 10 3 0 13-11 2 0 9 5 2 18 17 0 2-18 2-2 9-3 13 11 3 0 10-10 0-3-11-13 0-2 5-9 18-2 0-17-18-2-2-2-3-9 11-13 0-3-10-10-3 0-13 11-2 0-9-5-2-18zM62 53l8-1 3 1 5 5 1 8-1 3-5 5-8 1-3-1-5-5-1-8 1-3z"/><path fill="#95d0df" fill-rule="evenodd" d="M70 25l-9 0-7 2-9 5-8 8-7 15 0 5-1 1 0 5 1 1 3 0 1-10 6-12 7-7 9-5 6-2 7 0 2-2z"/><path fill="#367c8d" fill-rule="evenodd" d="M85 49l-1 0 4 5 2 6 0 7-4 9-6 6-6 3-10 1-8-3 2 2 9 4 8 0 8-3 5-4 4-6 2-10-4-12z"/><path fill="#b9e4ea" fill-rule="evenodd" d="M69 43l-10 1-8 7-3 8 0 7 3 0 0-5 3-7 8-6 7-1 1-1z"/></g></svg>
<span class="t" style="left:292px;top:547px;color:#ffd7af">apt-xapian-index.service</span>
<span class="t" style="left:732px;top:547px;color:#ffd7af">static</span>
<span class="t" style="left:872px;top:547px;color:#ffd7af">-</span>
<svg class="ic" style="left:262px;top:569px" width="20" height="22" viewBox="0 0 20 22"><g transform="translate(0.05075 0.77075) scale(0.1615)"><path fill="#84b0c1" fill-rule="evenodd" d="M114 9l-12-5-13 0-10 4-27 26-6 10-8 4-23 23-6 11-1 16 5 12 8 8 12 5 13 0 10-4 27-26 6-10 8-4 23-23 6-11 1-16-5-12zM46 62l7 13 7 6 8 3 1 2-20 20-7 3-9-1-8-7-3-7 0-5 3-7zM60 57l2-1 5 2 6 6 2 6-2 1-5-2-6-6zM102 19l8 7 3 7 0 5-3 7-21 20-7-13-7-6-8-3-1-2 20-20 7-3z"/><path fill="#a6e0ed" fill-rule="evenodd" d="M55 106l-3 3-6 3-16-1 0 2 2 2 6 2 8-1 8-5zM81 67l-3 1 0 9-2 4 2 3 3-1 3-5 0-7zM57 38l-2 0-4 4-3 8 1 12 1 3 4 4 1-1-1-17 3-9z"/><path fill="#347b8c" fill-rule="evenodd" d="M75 71l-1 0-1 4-4 5-3 2-3 0 7 3 4-6zM94 61l-5 5 1 2 0 10-2 5 6-2 3-5 0-10zM46 44l-4 4 0 8 3 4zM76 47l-10-5-5 7 0 7 4 1 1-5 5-5z"/></g></svg>
<span class="t" style="left:292px;top:569px;color:#ffd7af">autovt@.service</span>
<span class="t" style="left:732px;top:569px;color:#ffd7af">alias</span>
<span class="t" style="left:872px;top:569px;color:#ffd7af">-</span>
<svg class="ic" style="left:262px;top:591px" width="20" height="22" viewBox="0 0 20 22"><g transform="translate(0.05075 0.77075) scale(0.1615)"><path fill="#7cb342" fill-rule="evenodd" d="M11 5l-3 5 0 107 2 4 3 2 110 0 5-6 0-107-2-4-3-2-110 0z"/><path fill="#faf8f7" fill-rule="evenodd" d="M110 20l-10-1-4 4-46 58-10-30-2-3-4-2-5 0-5 4-1 7 15 45 3 5 2 1 9-1 60-75 1-7z"/><path fill="#689f38" fill-rule="evenodd" d="M126 6l-3-2-6 0 5 5 0 102-4 5-2 1-103 0-5-5 0 5 2 4 3 2 110 0 5-6 0-107z"/><path fill="#a4ca7a" fill-rule="evenodd" d="M42 10l-16 0-5 2-3 3-2 9 0 10 2 4 2 0 5-13 5-5 9-5 2 0 2-2z"/></g></svg>
<span class="t" style="left:292px;top:591px;color:#ffd7af">avahi-daemon.service</span>
<span class="t" style="left:732px;top:591px;color:#ffd7af">enabled</span>
<span class="t" style="left:872px;top:591px;color:#ffd7af">enabled</span>
<svg class="ic" style="left:262px;top:613px" width="20" height="22" viewBox="0 0 20 22"><g transform="translate(0.05075 0.77075) scale(0.1615)"><path fill="#7cb342" fill-rule="evenodd" d="M11 5l-3 5 0 107 2 4 3 2 110 0 5-6 0-107-2-4-3-2-110 0z"/><path fill="#faf8f7" fill-rule="evenodd" d="M110 20l-10-1-4 4-46 58-10-30-2-3-4-2-5 0-5 4-1 7 15 45 3 5 2 1 9-1 60-75 1-7z"/><path fill="#689f38" fill-rule="evenodd" d="M126 6l-3-2-6 0 5 5 0 102-4 5-2 1-103 0-5-5 0 5 2 4 3 2 110 0 5-6 0-107z"/><path fill="#a4ca7a" fill-rule="evenodd" d="M42 10l-16 0-5 2-3 3-2 9 0 10 2 4 2 0 5-13 5-5 9-5 2 0 2-2z"/></g></svg>
<span class="t" style="left:292px;top:613px;color:#ffd7af">blueman-mechanism.service</span>
<span class="t" style="left:732px;top:613px;color:#ffd7af">enabled</span>
<span class="t" style="left:872px;top:613px;color:#ffd7af">enabled</span>
<svg class="ic" style="left:262px;top:635px" width="20" height="22" viewBox="0 0 20 22"><g transform="translate(0.05075 0.77075) scale(0.1615)"><path fill="#7cb342" fill-rule="evenodd" d="M11 5l-3 5 0 107 2 4 3 2 110 0 5-6 0-107-2-4-3-2-110 0z"/><path fill="#faf8f7" fill-rule="evenodd" d="M110 20l-10-1-4 4-46 58-10-30-2-3-4-2-5 0-5 4-1 7 15 45 3 5 2 1 9-1 60-75 1-7z"/><path fill="#689f38" fill-rule="evenodd" d="M126 6l-3-2-6 0 5 5 0 102-4 5-2 1-103 0-5-5 0 5 2 4 3 2 110 0 5-6 0-107z"/><path fill="#a4ca7a" fill-rule="evenodd" d="M42 10l-16 0-5 2-3 3-2 9 0 10 2 4 2 0 5-13 5-5 9-5 2 0 2-2z"/></g></svg>
<span class="t" style="left:292px;top:635px;color:#ffd7af">bluetooth.service</span>
<span class="t" style="left:732px;top:635px;color:#ffd7af">enabled</span>
<span class="t" style="left:872px;top:635px;color:#ffd7af">enabled</span>
<svg class="ic" style="left:262px;top:657px" width="20" height="22" viewBox="0 0 20 22"><g transform="translate(0.05075 0.77075) scale(0.1615)"><path fill="#82aec0" fill-rule="evenodd" d="M59 4l-2 18-2 2-9 3-13-11-3 0-10 10 0 3 11 13 0 2-5 9-18 2 0 17 18 2 2 2 3 9-11 13 0 3 10 10 3 0 13-11 2 0 9 5 2 18 17 0 2-18 2-2 9-3 13 11 3 0 10-10 0-3-11-13 0-2 5-9 18-2 0-17-18-2-2-2-3-9 11-13 0-3-10-10-3 0-13 11-2 0-9-5-2-18zM62 53l8-1 3 1 5 5 1 8-1 3-5 5-8 1-3-1-5-5-1-8 1-3z"/><path fill="#95d0df" fill-rule="evenodd" d="M70 25l-9 0-7 2-9 5-8 8-7 15 0 5-1 1 0 5 1 1 3 0 1-10 6-12 7-7 9-5 6-2 7 0 2-2z"/><path fill="#367c8d" fill-rule="evenodd" d="M85 49l-1 0 4 5 2 6 0 7-4 9-6 6-6 3-10 1-8-3 2 2 9 4 8 0 8-3 5-4 4-6 2-10-4-12z"/><path fill="#b9e4ea" fill-rule="evenodd" d="M69 43l-10 1-8 7-3 8 0 7 3 0 0-5 3-7 8-6 7-1 1-1z"/></g></svg>
<span class="t" style="left:292px;top:657px;color:#ffd7af">bolt.service</span>
<span class="t" style="left:732px;top:657px;color:#ffd7af">static</span>
<span class="t" style="left:872px;top:657px;color:#ffd7af">-</span>
<svg class="ic" style="left:262px;top:679px" width="20" height="22" viewBox="0 0 20 22"><g transform="translate(0.05075 0.77075) scale(0.1615)"><path fill="#82aec0" fill-rule="evenodd" d="M59 4l-2 18-2 2-9 3-13-11-3 0-10 10 0 3 11 13 0 2-5 9-18 2 0 17 18 2 2 2 3 9-11 13 0 3 10 10 3 0 13-11 2 0 9 5 2 18 17 0 2-18 2-2 9-3 13 11 3 0 10-10 0-3-11-13 0-2 5-9 18-2 0-17-18-2-2-2-3-9 11-13 0-3-10-10-3 0-13 11-2 0-9-5-2-18zM62 53l8-1 3 1 5 5 1 8-1 3-5 5-8 1-3-1-5-5-1-8 1-3z"/><path fill="#95d0df" fill-rule="evenodd" d="M70 25l-9 0-7 2-9 5-8 8-7 15 0 5-1 1 0 5 1 1 3 0 1-10 6-12 7-7 9-5 6-2 7 0 2-2z"/><path fill="#367c8d" fill-rule="evenodd" d="M85 49l-1 0 4 5 2 6 0 7-4 9-6 6-6 3-10 1-8-3 2 2 9 4 8 0 8-3 5-4 4-6 2-10-4-12z"/><path fill="#b9e4ea" fill-rule="evenodd" d="M69 43l-10 1-8 7-3 8 0 7 3 0 0-5 3-7 8-6 7-1 1-1z"/></g></svg>
<span class="t" style="left:292px;top:679px;color:#ffd7af">brltty-udev.service</span>
<span class="t" style="left:732px;top:679px;color:#ffd7af">static</span>
<span class="t" style="left:872px;top:679px;color:#ffd7af">-</span>
<svg class="ic" style="left:262px;top:701px" width="20" height="22" viewBox="0 0 20 22"><g transform="translate(0.05075 0.77075) scale(0.1615)"><path fill="#f44336" fill-rule="evenodd" d="M59 4l-9 2-12 5-11 8-8 9-6 10-4 11-1 23 2 9 5 12 8 11 9 8 6 4 12 5 9 2 17 0 9-2 12-5 11-8 8-9 4-6 5-12 2-9 0-17-2-9-5-12-8-11-9-8-6-4-12-5-9-2zM26 35l3-2 5 4 65 65-6 5-8 4-13 3-9 0-10-2-17-9-11-12-5-10-3-13 0-9 2-10zM39 22l14-7 10-2 9 0 13 3 10 5 12 11 9 17 2 10 0 9-3 13-4 8-5 6-70-70z"/><path fill="#ce3433" fill-rule="evenodd" d="M36 25l-2 2 71 70 1-2zM59 4l-17 5-13 9 5-4 10-5 12-3 21 1 11 4 11 7 9 9 5 7 5 11 2 9 0 17-3 12-8 14-11 11-14 8-12 3-17 0-9-2-14-7-13-12-6-9 10 15 15 12 9 4 12 3 17 0 9-2 12-5 11-8 8-9 4-6 5-12 2-9 0-17-2-9-5-12-8-11-9-8-6-4-12-5-9-2z"/><path fill="#fe867c" fill-rule="evenodd" d="M56 11l-3-2-9 3-11 6-12 12-5 10 2 1 10-13 8-7 8-5 11-3z"/></g></svg>
<span class="t" style="left:292px;top:701px;color:#ffd7af">brltty.service</span>
<span class="t" style="left:732px;top:701px;color:#ffd7af">disabled</span>
<span class="t" style="left:872px;top:701px;color:#ffd7af">enabled</span>
<span class="t" style="left:282px;top:745px;color:#a89078">[<span class="a v">↑↓</span>] Nav  [Enter] Status  [i] Help/Info  [S] Start  [s] Stop  [r] Restart  [l] Reload  [e] Edit  [ESC] Exit</span>
<span class="t b" style="left:1432px;top:745px;color:#ffaf00">[TAB] Running Units</span>
</section>
</div></div></body></html>
